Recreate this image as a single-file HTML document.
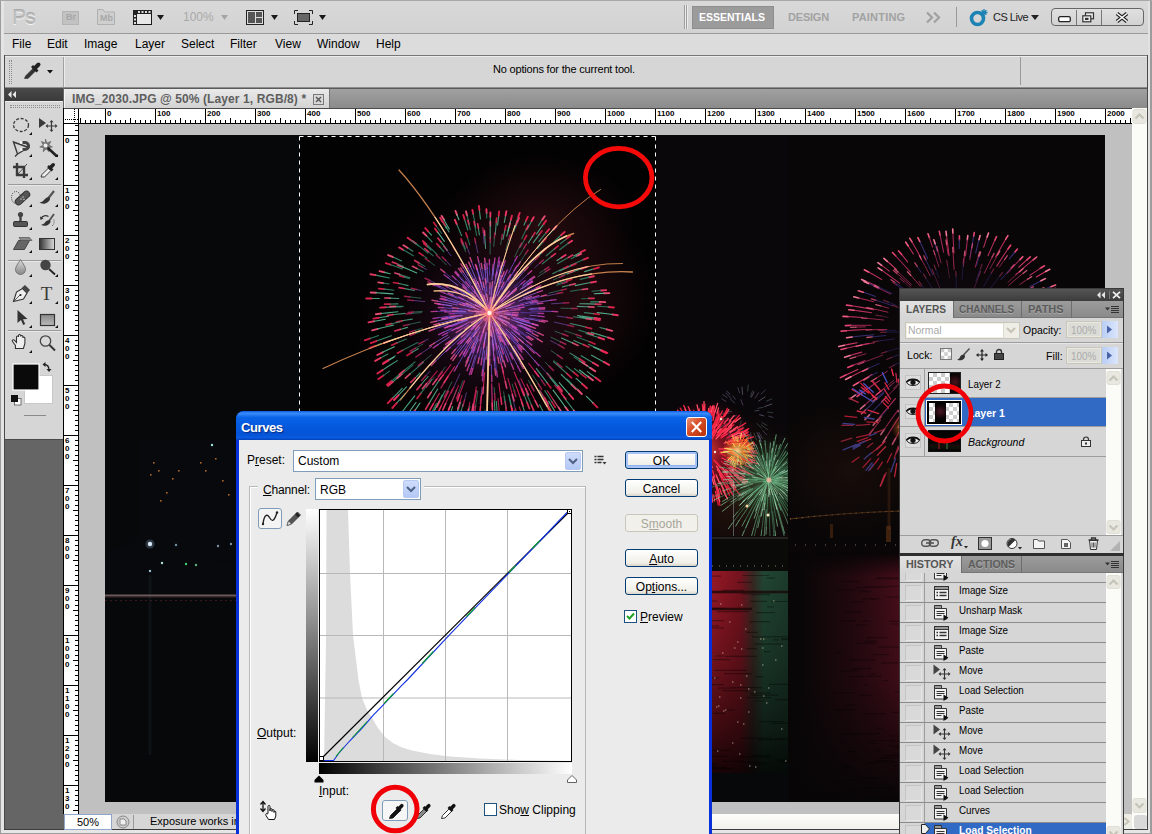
<!DOCTYPE html>
<html><head><meta charset="utf-8"><title>Photoshop</title><style>
*{box-sizing:border-box;margin:0;padding:0}
html,body{width:1152px;height:834px;overflow:hidden;background:#d6d6d6;font-family:"Liberation Sans",sans-serif;font-size:12px;color:#000}
.a{position:absolute}
.t{position:absolute;white-space:nowrap;line-height:1}
svg{position:absolute;overflow:visible}
</style></head><body>
<div id="root" style="position:relative;width:1152px;height:834px;overflow:hidden">
<div class="a" style="left:0px;top:0px;width:1152px;height:834px;background:#d6d6d6"></div>
<div class="a" style="left:0px;top:0px;width:1152px;height:33px;background:linear-gradient(#d9d9d9,#d2d2d2)"></div>
<div class="a" style="left:0px;top:33px;width:1152px;height:1px;background:#9a9a9a"></div>
<div class="a" style="left:0px;top:34px;width:1152px;height:21px;background:#dcdcdc"></div>
<div class="a" style="left:4px;top:55px;width:1144px;height:33px;background:#d6d6d6;border:1px solid #8c8c8c;border-top-color:#777;"></div>
<div class="a" style="left:5px;top:56px;width:1142px;height:1px;background:#ececec"></div>
<div class="a" style="left:4px;top:88px;width:1144px;height:20px;background:linear-gradient(#a2a2a2,#8b8b8b)"></div>
<div class="a" style="left:4px;top:88px;width:1144px;height:1px;background:#5a5a5a"></div>
<div class="a" style="left:4px;top:88px;width:60px;height:742px;background:#656565"></div>
<div class="a" style="left:5px;top:88px;width:58px;height:13px;background:linear-gradient(#4a4a4a,#3a3a3a)"></div>
<div class="a" style="left:5px;top:101px;width:58px;height:313px;background:#d6d6d6"></div>
<div class="a" style="left:5px;top:414px;width:58px;height:1px;background:#555"></div>
<div class="a" style="left:64px;top:108px;width:1068px;height:706px;background:#c0c0c0"></div>
<div class="a" style="left:64px;top:108px;width:1068px;height:16px;background:#fff;border-bottom:1px solid #000"></div>
<div class="a" style="left:63px;top:108px;width:16px;height:706px;background:#fff;border-right:1px solid #000;border-left:1px solid #000"></div>
<div class="a" style="left:1132px;top:108px;width:15px;height:706px;background:#fbfbf8"></div>
<div class="a" style="left:64px;top:814px;width:1084px;height:16px;background:#d6d6d6"></div>
<div class="a" style="left:0px;top:0px;width:4px;height:834px;background:#e4e4e4"></div>
<div class="a" style="left:0px;top:0px;width:1px;height:834px;background:#9c9c9c"></div>
<div class="a" style="left:4px;top:55px;width:1px;height:775px;background:#4a4a4a"></div>
<div class="a" style="left:1148px;top:0px;width:4px;height:834px;background:#e2e2e2"></div>
<div class="a" style="left:1150px;top:0px;width:2px;height:834px;background:#9c9c9c"></div>
<div class="a" style="left:1147px;top:55px;width:1px;height:775px;background:#4a4a4a"></div>
<div class="a" style="left:0px;top:830px;width:1152px;height:4px;background:#e6e6e6"></div>
<div class="a" style="left:0px;top:833px;width:1152px;height:1px;background:#9c9c9c"></div>
<div class="a" style="left:0px;top:830px;width:1px;height:4px;background:#9c9c9c"></div>
<div class="a" style="left:1150px;top:830px;width:2px;height:4px;background:#9c9c9c"></div>
<div class="a" style="left:4px;top:829px;width:1144px;height:1px;background:#3c3c3c"></div>
<div class="a" style="left:0px;top:0px;width:1152px;height:1px;background:#a8a8a8"></div>
<div class="t" style="left:12px;top:6px;font-size:21px;color:#bcbcbc;text-shadow:0 1px 0 #f4f4f4,0 -1px 0 #a9a9a9;letter-spacing:-0.8px">Ps</div>
<div class="a" style="left:62px;top:11px;width:17px;height:14px;background:#c2c2c2;border:1px solid #b4b4b4"></div>
<div class="t" style="left:66px;top:13px;font-size:9px;color:#a6a6a6;font-weight:bold">Br</div>
<svg style="left:97px;top:9px" width="19" height="16" viewBox="0 0 19 16" ><path d="M0.5 15.5V0.5H6l1.5 2.5H17.5V15.5Z" fill="#cfcfcf" stroke="#b0b0b0"/></svg>
<div class="t" style="left:100px;top:14px;font-size:9px;color:#a8a8a8;font-weight:bold">Mb</div>
<svg style="left:133px;top:10px" width="19" height="15" viewBox="0 0 19 15" ><rect x="0.5" y="0.5" width="18" height="14" fill="#e8e8e8" stroke="#1a1a1a"/><rect x="0" y="0" width="19" height="4" fill="#222"/><rect x="0" y="0" width="4" height="15" fill="#222"/><g fill="#ddd"><rect x="5" y="1" width="2" height="2"/><rect x="8.5" y="1" width="2" height="2"/><rect x="12" y="1" width="2" height="2"/><rect x="15.5" y="1" width="2" height="2"/><rect x="1" y="5" width="2" height="2"/><rect x="1" y="8.5" width="2" height="2"/><rect x="1" y="12" width="2" height="2"/></g></svg>
<svg style="left:157px;top:15px" width="7" height="5" viewBox="0 0 7 5" ><path d="M0 0H7L3.5 5Z" fill="#1a1a1a"/></svg>
<div class="t" style="left:183px;top:11px;font-size:12px;color:#a9a9a9">100%</div>
<svg style="left:221px;top:15px" width="7" height="5" viewBox="0 0 7 5" ><path d="M0 0H7L3.5 5Z" fill="#a5a5a5"/></svg>
<svg style="left:246px;top:10px" width="18" height="15" viewBox="0 0 18 15" ><rect x="0.5" y="0.5" width="17" height="14" fill="#ddd" stroke="#222"/><rect x="2" y="2" width="7" height="11" fill="#555"/><rect x="10" y="2" width="6" height="5" fill="#555"/><rect x="10" y="8" width="6" height="5" fill="#555"/></svg>
<svg style="left:271px;top:15px" width="7" height="5" viewBox="0 0 7 5" ><path d="M0 0H7L3.5 5Z" fill="#1a1a1a"/></svg>
<svg style="left:294px;top:10px" width="19" height="15" viewBox="0 0 19 15" ><path d="M0.5 4V0.5H4M15 0.5H18.5V4M18.5 11V14.5H15M4 14.5H0.5V11" fill="none" stroke="#222"/><rect x="3.5" y="3.5" width="12" height="8" fill="#666" stroke="#222"/></svg>
<svg style="left:319px;top:15px" width="7" height="5" viewBox="0 0 7 5" ><path d="M0 0H7L3.5 5Z" fill="#1a1a1a"/></svg>
<div class="a" style="left:684px;top:5px;width:1px;height:24px;background:#9e9e9e"></div>
<div class="a" style="left:686px;top:5px;width:1px;height:24px;background:#9e9e9e"></div>
<div class="a" style="left:685px;top:5px;width:1px;height:24px;background:#ececec"></div>
<div class="a" style="left:687px;top:5px;width:1px;height:24px;background:#ececec"></div>
<div class="a" style="left:692px;top:6px;width:82px;height:23px;background:#9b9b9b;border:1px solid #8e8e8e"></div>
<div class="t" style="left:699px;top:12px;font-size:10.5px;color:#fff;font-weight:bold;letter-spacing:0">ESSENTIALS</div>
<div class="t" style="left:788px;top:12px;font-size:11px;color:#a2a2a2;font-weight:bold;letter-spacing:-0.2px">DESIGN</div>
<div class="t" style="left:852px;top:12px;font-size:11px;color:#a2a2a2;font-weight:bold;letter-spacing:0.2px">PAINTING</div>
<svg style="left:926px;top:12px" width="16" height="11" viewBox="0 0 16 11" ><path d="M1 0.5L6 5.5L1 10.5M8 0.5L13 5.5L8 10.5" fill="none" stroke="#a0a0a0" stroke-width="2.2"/></svg>
<div class="a" style="left:956px;top:7px;width:1px;height:20px;background:#9a9a9a"></div>
<svg style="left:969px;top:8px" width="20" height="19" viewBox="0 0 20 19" ><circle cx="8.5" cy="10.5" r="6" fill="none" stroke="#1d82b4" stroke-width="3.6"/><path d="M15 1v7M11.5 4.5h7M12.6 2.2l4.8 4.6M17.4 2.2l-4.8 4.6" stroke="#1d82b4" stroke-width="1.3"/></svg>
<div class="t" style="left:993px;top:12px;font-size:11px;color:#222;letter-spacing:-0.5px">CS Live</div>
<svg style="left:1031px;top:15px" width="8" height="5" viewBox="0 0 8 5" ><path d="M0 0H8L4.0 5Z" fill="#222"/></svg>
<div class="a" style="left:1051px;top:8px;width:93px;height:18px;background:linear-gradient(#e0e0e0,#d2d2d2);border:1px solid #666;border-radius:4px"></div>
<div class="a" style="left:1076px;top:10px;width:1px;height:15px;background:#777"></div>
<div class="a" style="left:1101px;top:10px;width:1px;height:15px;background:#777"></div>
<svg style="left:1058px;top:16px" width="13" height="7" viewBox="0 0 13 7" ><rect x="0.7" y="0.7" width="11.6" height="5" rx="1.5" fill="#fff" stroke="#222" stroke-width="1.3"/></svg>
<svg style="left:1082px;top:12px" width="14" height="11" viewBox="0 0 14 11" ><rect x="3.5" y="0.8" width="8" height="6" fill="#eee" stroke="#333" stroke-width="1.2"/><rect x="0.8" y="3.8" width="8" height="6" fill="#eee" stroke="#333" stroke-width="1.2"/><rect x="3" y="5.8" width="3.5" height="2.2" fill="#333"/></svg>
<svg style="left:1115px;top:12px" width="14" height="11" viewBox="0 0 14 11" ><path d="M2 1.5L12 9.5M12 1.5L2 9.5" stroke="#222" stroke-width="3.8"/><path d="M2 1.5L12 9.5M12 1.5L2 9.5" stroke="#fff" stroke-width="1.6"/></svg>
<div class="t" style="left:12px;top:38px;font-size:12px;color:#000">File</div>
<div class="t" style="left:47px;top:38px;font-size:12px;color:#000">Edit</div>
<div class="t" style="left:84px;top:38px;font-size:12px;color:#000">Image</div>
<div class="t" style="left:135px;top:38px;font-size:12px;color:#000">Layer</div>
<div class="t" style="left:181px;top:38px;font-size:12px;color:#000">Select</div>
<div class="t" style="left:230px;top:38px;font-size:12px;color:#000">Filter</div>
<div class="t" style="left:275px;top:38px;font-size:12px;color:#000">View</div>
<div class="t" style="left:317px;top:38px;font-size:12px;color:#000">Window</div>
<div class="t" style="left:376px;top:38px;font-size:12px;color:#000">Help</div>
<div class="a" style="left:9px;top:60px;width:3px;height:24px;border-left:1px dotted #8e8e8e;border-right:1px dotted #8e8e8e"></div>
<div class="a" style="left:63px;top:57px;width:1px;height:30px;background:#a0a0a0"></div>
<div class="a" style="left:64px;top:57px;width:1px;height:30px;background:#ececec"></div>
<svg style="left:47px;top:70px" width="6" height="3.5" viewBox="0 0 6 3.5" ><path d="M0 0H6L3.0 3.5Z" fill="#111"/></svg>
<div class="t" style="left:493px;top:64px;font-size:11px;color:#000;letter-spacing:-0.19px">No options for the current tool.</div>
<div class="a" style="left:1020px;top:57px;width:1px;height:28px;background:#9a9a9a"></div>
<div class="a" style="left:64px;top:89px;width:266px;height:19px;background:linear-gradient(#eaeaea,#d3d3d3);border-left:1px solid #f4f4f4;border-right:1px solid #777"></div>
<div class="t" style="left:72px;top:93px;font-size:12px;color:#5e5e5e;font-weight:bold;letter-spacing:0.1px">IMG_2030.JPG @ 50% (Layer 1, RGB/8) *</div>
<svg style="left:313px;top:94px" width="11" height="11" viewBox="0 0 11 11" ><rect x="0.5" y="0.5" width="10" height="10" fill="#d8d8d8" stroke="#7a7a7a"/><path d="M3 3L8 8M8 3L3 8" stroke="#555" stroke-width="1.4"/></svg>
<svg style="left:0px;top:108px" width="1152" height="16" viewBox="0 0 1152 16" ><path d="M80.5 16v-6 M85.5 16v-4 M90.5 16v-4 M95.5 16v-4 M100.5 16v-4 M105.5 16v-15 M110.5 16v-4 M115.5 16v-4 M120.5 16v-4 M125.5 16v-4 M130.5 16v-6 M135.5 16v-4 M140.5 16v-4 M145.5 16v-4 M150.5 16v-4 M155.5 16v-15 M160.5 16v-4 M165.5 16v-4 M170.5 16v-4 M175.5 16v-4 M180.5 16v-6 M185.5 16v-4 M190.5 16v-4 M195.5 16v-4 M200.5 16v-4 M205.5 16v-15 M210.5 16v-4 M215.5 16v-4 M220.5 16v-4 M225.5 16v-4 M230.5 16v-6 M235.5 16v-4 M240.5 16v-4 M245.5 16v-4 M250.5 16v-4 M255.5 16v-15 M260.5 16v-4 M265.5 16v-4 M270.5 16v-4 M275.5 16v-4 M280.5 16v-6 M285.5 16v-4 M290.5 16v-4 M295.5 16v-4 M300.5 16v-4 M305.5 16v-15 M310.5 16v-4 M315.5 16v-4 M320.5 16v-4 M325.5 16v-4 M330.5 16v-6 M335.5 16v-4 M340.5 16v-4 M345.5 16v-4 M350.5 16v-4 M355.5 16v-15 M360.5 16v-4 M365.5 16v-4 M370.5 16v-4 M375.5 16v-4 M380.5 16v-6 M385.5 16v-4 M390.5 16v-4 M395.5 16v-4 M400.5 16v-4 M405.5 16v-15 M410.5 16v-4 M415.5 16v-4 M420.5 16v-4 M425.5 16v-4 M430.5 16v-6 M435.5 16v-4 M440.5 16v-4 M445.5 16v-4 M450.5 16v-4 M455.5 16v-15 M460.5 16v-4 M465.5 16v-4 M470.5 16v-4 M475.5 16v-4 M480.5 16v-6 M485.5 16v-4 M490.5 16v-4 M495.5 16v-4 M500.5 16v-4 M505.5 16v-15 M510.5 16v-4 M515.5 16v-4 M520.5 16v-4 M525.5 16v-4 M530.5 16v-6 M535.5 16v-4 M540.5 16v-4 M545.5 16v-4 M550.5 16v-4 M555.5 16v-15 M560.5 16v-4 M565.5 16v-4 M570.5 16v-4 M575.5 16v-4 M580.5 16v-6 M585.5 16v-4 M590.5 16v-4 M595.5 16v-4 M600.5 16v-4 M605.5 16v-15 M610.5 16v-4 M615.5 16v-4 M620.5 16v-4 M625.5 16v-4 M630.5 16v-6 M635.5 16v-4 M640.5 16v-4 M645.5 16v-4 M650.5 16v-4 M655.5 16v-15 M660.5 16v-4 M665.5 16v-4 M670.5 16v-4 M675.5 16v-4 M680.5 16v-6 M685.5 16v-4 M690.5 16v-4 M695.5 16v-4 M700.5 16v-4 M705.5 16v-15 M710.5 16v-4 M715.5 16v-4 M720.5 16v-4 M725.5 16v-4 M730.5 16v-6 M735.5 16v-4 M740.5 16v-4 M745.5 16v-4 M750.5 16v-4 M755.5 16v-15 M760.5 16v-4 M765.5 16v-4 M770.5 16v-4 M775.5 16v-4 M780.5 16v-6 M785.5 16v-4 M790.5 16v-4 M795.5 16v-4 M800.5 16v-4 M805.5 16v-15 M810.5 16v-4 M815.5 16v-4 M820.5 16v-4 M825.5 16v-4 M830.5 16v-6 M835.5 16v-4 M840.5 16v-4 M845.5 16v-4 M850.5 16v-4 M855.5 16v-15 M860.5 16v-4 M865.5 16v-4 M870.5 16v-4 M875.5 16v-4 M880.5 16v-6 M885.5 16v-4 M890.5 16v-4 M895.5 16v-4 M900.5 16v-4 M905.5 16v-15 M910.5 16v-4 M915.5 16v-4 M920.5 16v-4 M925.5 16v-4 M930.5 16v-6 M935.5 16v-4 M940.5 16v-4 M945.5 16v-4 M950.5 16v-4 M955.5 16v-15 M960.5 16v-4 M965.5 16v-4 M970.5 16v-4 M975.5 16v-4 M980.5 16v-6 M985.5 16v-4 M990.5 16v-4 M995.5 16v-4 M1000.5 16v-4 M1005.5 16v-15 M1010.5 16v-4 M1015.5 16v-4 M1020.5 16v-4 M1025.5 16v-4 M1030.5 16v-6 M1035.5 16v-4 M1040.5 16v-4 M1045.5 16v-4 M1050.5 16v-4 M1055.5 16v-15 M1060.5 16v-4 M1065.5 16v-4 M1070.5 16v-4 M1075.5 16v-4 M1080.5 16v-6 M1085.5 16v-4 M1090.5 16v-4 M1095.5 16v-4 M1100.5 16v-4 M1105.5 16v-15 M1110.5 16v-4 M1115.5 16v-4 M1120.5 16v-4 M1125.5 16v-4 M1130.5 16v-6" stroke="#000" stroke-width="1" fill="none"/></svg>
<div class="t" style="left:107px;top:109.5px;font-size:8px;color:#000;font-weight:bold">0</div>
<div class="t" style="left:157px;top:109.5px;font-size:8px;color:#000;font-weight:bold">100</div>
<div class="t" style="left:207px;top:109.5px;font-size:8px;color:#000;font-weight:bold">200</div>
<div class="t" style="left:257px;top:109.5px;font-size:8px;color:#000;font-weight:bold">300</div>
<div class="t" style="left:307px;top:109.5px;font-size:8px;color:#000;font-weight:bold">400</div>
<div class="t" style="left:357px;top:109.5px;font-size:8px;color:#000;font-weight:bold">500</div>
<div class="t" style="left:407px;top:109.5px;font-size:8px;color:#000;font-weight:bold">600</div>
<div class="t" style="left:457px;top:109.5px;font-size:8px;color:#000;font-weight:bold">700</div>
<div class="t" style="left:507px;top:109.5px;font-size:8px;color:#000;font-weight:bold">800</div>
<div class="t" style="left:557px;top:109.5px;font-size:8px;color:#000;font-weight:bold">900</div>
<div class="t" style="left:607px;top:109.5px;font-size:8px;color:#000;font-weight:bold">1000</div>
<div class="t" style="left:657px;top:109.5px;font-size:8px;color:#000;font-weight:bold">1100</div>
<div class="t" style="left:707px;top:109.5px;font-size:8px;color:#000;font-weight:bold">1200</div>
<div class="t" style="left:757px;top:109.5px;font-size:8px;color:#000;font-weight:bold">1300</div>
<div class="t" style="left:807px;top:109.5px;font-size:8px;color:#000;font-weight:bold">1400</div>
<div class="t" style="left:857px;top:109.5px;font-size:8px;color:#000;font-weight:bold">1500</div>
<div class="t" style="left:907px;top:109.5px;font-size:8px;color:#000;font-weight:bold">1600</div>
<div class="t" style="left:957px;top:109.5px;font-size:8px;color:#000;font-weight:bold">1700</div>
<div class="t" style="left:1007px;top:109.5px;font-size:8px;color:#000;font-weight:bold">1800</div>
<div class="t" style="left:1057px;top:109.5px;font-size:8px;color:#000;font-weight:bold">1900</div>
<div class="t" style="left:1107px;top:109.5px;font-size:8px;color:#000;font-weight:bold">2000</div>
<svg style="left:0px;top:0px" width="80" height="834" viewBox="0 0 80 834" ><path d="M79 125.5h-4 M79 130.5h-4 M79 135.5h-15 M79 140.5h-4 M79 145.5h-4 M79 150.5h-4 M79 155.5h-4 M79 160.5h-6 M79 165.5h-4 M79 170.5h-4 M79 175.5h-4 M79 180.5h-4 M79 185.5h-15 M79 190.5h-4 M79 195.5h-4 M79 200.5h-4 M79 205.5h-4 M79 210.5h-6 M79 215.5h-4 M79 220.5h-4 M79 225.5h-4 M79 230.5h-4 M79 235.5h-15 M79 240.5h-4 M79 245.5h-4 M79 250.5h-4 M79 255.5h-4 M79 260.5h-6 M79 265.5h-4 M79 270.5h-4 M79 275.5h-4 M79 280.5h-4 M79 285.5h-15 M79 290.5h-4 M79 295.5h-4 M79 300.5h-4 M79 305.5h-4 M79 310.5h-6 M79 315.5h-4 M79 320.5h-4 M79 325.5h-4 M79 330.5h-4 M79 335.5h-15 M79 340.5h-4 M79 345.5h-4 M79 350.5h-4 M79 355.5h-4 M79 360.5h-6 M79 365.5h-4 M79 370.5h-4 M79 375.5h-4 M79 380.5h-4 M79 385.5h-15 M79 390.5h-4 M79 395.5h-4 M79 400.5h-4 M79 405.5h-4 M79 410.5h-6 M79 415.5h-4 M79 420.5h-4 M79 425.5h-4 M79 430.5h-4 M79 435.5h-15 M79 440.5h-4 M79 445.5h-4 M79 450.5h-4 M79 455.5h-4 M79 460.5h-6 M79 465.5h-4 M79 470.5h-4 M79 475.5h-4 M79 480.5h-4 M79 485.5h-15 M79 490.5h-4 M79 495.5h-4 M79 500.5h-4 M79 505.5h-4 M79 510.5h-6 M79 515.5h-4 M79 520.5h-4 M79 525.5h-4 M79 530.5h-4 M79 535.5h-15 M79 540.5h-4 M79 545.5h-4 M79 550.5h-4 M79 555.5h-4 M79 560.5h-6 M79 565.5h-4 M79 570.5h-4 M79 575.5h-4 M79 580.5h-4 M79 585.5h-15 M79 590.5h-4 M79 595.5h-4 M79 600.5h-4 M79 605.5h-4 M79 610.5h-6 M79 615.5h-4 M79 620.5h-4 M79 625.5h-4 M79 630.5h-4 M79 635.5h-15 M79 640.5h-4 M79 645.5h-4 M79 650.5h-4 M79 655.5h-4 M79 660.5h-6 M79 665.5h-4 M79 670.5h-4 M79 675.5h-4 M79 680.5h-4 M79 685.5h-15 M79 690.5h-4 M79 695.5h-4 M79 700.5h-4 M79 705.5h-4 M79 710.5h-6 M79 715.5h-4 M79 720.5h-4 M79 725.5h-4 M79 730.5h-4 M79 735.5h-15 M79 740.5h-4 M79 745.5h-4 M79 750.5h-4 M79 755.5h-4 M79 760.5h-6 M79 765.5h-4 M79 770.5h-4 M79 775.5h-4 M79 780.5h-4 M79 785.5h-15 M79 790.5h-4 M79 795.5h-4 M79 800.5h-4 M79 805.5h-4 M79 810.5h-6" stroke="#000" stroke-width="1" fill="none"/></svg>
<div class="t" style="left:65px;top:136.5px;font-size:8px;color:#000;font-weight:bold">0</div>
<div class="t" style="left:65px;top:186.5px;font-size:8px;color:#000;font-weight:bold">1</div>
<div class="t" style="left:65px;top:194.5px;font-size:8px;color:#000;font-weight:bold">0</div>
<div class="t" style="left:65px;top:202.5px;font-size:8px;color:#000;font-weight:bold">0</div>
<div class="t" style="left:65px;top:236.5px;font-size:8px;color:#000;font-weight:bold">2</div>
<div class="t" style="left:65px;top:244.5px;font-size:8px;color:#000;font-weight:bold">0</div>
<div class="t" style="left:65px;top:252.5px;font-size:8px;color:#000;font-weight:bold">0</div>
<div class="t" style="left:65px;top:286.5px;font-size:8px;color:#000;font-weight:bold">3</div>
<div class="t" style="left:65px;top:294.5px;font-size:8px;color:#000;font-weight:bold">0</div>
<div class="t" style="left:65px;top:302.5px;font-size:8px;color:#000;font-weight:bold">0</div>
<div class="t" style="left:65px;top:336.5px;font-size:8px;color:#000;font-weight:bold">4</div>
<div class="t" style="left:65px;top:344.5px;font-size:8px;color:#000;font-weight:bold">0</div>
<div class="t" style="left:65px;top:352.5px;font-size:8px;color:#000;font-weight:bold">0</div>
<div class="t" style="left:65px;top:386.5px;font-size:8px;color:#000;font-weight:bold">5</div>
<div class="t" style="left:65px;top:394.5px;font-size:8px;color:#000;font-weight:bold">0</div>
<div class="t" style="left:65px;top:402.5px;font-size:8px;color:#000;font-weight:bold">0</div>
<div class="t" style="left:65px;top:436.5px;font-size:8px;color:#000;font-weight:bold">6</div>
<div class="t" style="left:65px;top:444.5px;font-size:8px;color:#000;font-weight:bold">0</div>
<div class="t" style="left:65px;top:452.5px;font-size:8px;color:#000;font-weight:bold">0</div>
<div class="t" style="left:65px;top:486.5px;font-size:8px;color:#000;font-weight:bold">7</div>
<div class="t" style="left:65px;top:494.5px;font-size:8px;color:#000;font-weight:bold">0</div>
<div class="t" style="left:65px;top:502.5px;font-size:8px;color:#000;font-weight:bold">0</div>
<div class="t" style="left:65px;top:536.5px;font-size:8px;color:#000;font-weight:bold">8</div>
<div class="t" style="left:65px;top:544.5px;font-size:8px;color:#000;font-weight:bold">0</div>
<div class="t" style="left:65px;top:552.5px;font-size:8px;color:#000;font-weight:bold">0</div>
<div class="t" style="left:65px;top:586.5px;font-size:8px;color:#000;font-weight:bold">9</div>
<div class="t" style="left:65px;top:594.5px;font-size:8px;color:#000;font-weight:bold">0</div>
<div class="t" style="left:65px;top:602.5px;font-size:8px;color:#000;font-weight:bold">0</div>
<div class="t" style="left:65px;top:636.5px;font-size:8px;color:#000;font-weight:bold">1</div>
<div class="t" style="left:65px;top:644.5px;font-size:8px;color:#000;font-weight:bold">0</div>
<div class="t" style="left:65px;top:652.5px;font-size:8px;color:#000;font-weight:bold">0</div>
<div class="t" style="left:65px;top:660.5px;font-size:8px;color:#000;font-weight:bold">0</div>
<div class="t" style="left:65px;top:686.5px;font-size:8px;color:#000;font-weight:bold">1</div>
<div class="t" style="left:65px;top:694.5px;font-size:8px;color:#000;font-weight:bold">1</div>
<div class="t" style="left:65px;top:702.5px;font-size:8px;color:#000;font-weight:bold">0</div>
<div class="t" style="left:65px;top:710.5px;font-size:8px;color:#000;font-weight:bold">0</div>
<div class="t" style="left:65px;top:736.5px;font-size:8px;color:#000;font-weight:bold">1</div>
<div class="t" style="left:65px;top:744.5px;font-size:8px;color:#000;font-weight:bold">2</div>
<div class="t" style="left:65px;top:752.5px;font-size:8px;color:#000;font-weight:bold">0</div>
<div class="t" style="left:65px;top:760.5px;font-size:8px;color:#000;font-weight:bold">0</div>
<div class="t" style="left:65px;top:786.5px;font-size:8px;color:#000;font-weight:bold">1</div>
<div class="t" style="left:65px;top:794.5px;font-size:8px;color:#000;font-weight:bold">3</div>
<div class="t" style="left:65px;top:802.5px;font-size:8px;color:#000;font-weight:bold">0</div>
<div class="a" style="left:64px;top:108px;width:1068px;height:1px;background:#4a4a4a"></div>
<div class="a" style="left:64px;top:109px;width:15px;height:15px;background:#fff;border-right:1px solid #000;border-bottom:1px solid #000"></div>
<svg style="left:64px;top:108px" width="16" height="16" viewBox="0 0 16 16" ><path d="M10.5 1v14M1 11.5h13" stroke="#000" stroke-dasharray="1 1" fill="none"/></svg>
<div class="a" style="left:64px;top:814px;width:48px;height:16px;background:#fff;border:1px solid #8fa6c8"></div>
<div class="t" style="left:77px;top:817px;font-size:11px;color:#000">50%</div>
<svg style="left:116px;top:815px" width="14" height="14" viewBox="0 0 14 14" ><circle cx="7" cy="7" r="6" fill="#ccc" stroke="#888"/><path d="M4 4h4l2 2v4H4z" fill="#eee" stroke="#777" stroke-width="0.8"/></svg>
<div class="a" style="left:133px;top:815px;width:1px;height:14px;background:#9a9a9a"></div>
<div class="t" style="left:150px;top:816px;font-size:11px;color:#000">Exposure works in</div>
<div class="a" style="left:712px;top:814px;width:188px;height:15px;background:linear-gradient(#fdfdfb,#f1f0ea)"></div>
<svg style="left:1132px;top:109px" width="15" height="15" viewBox="0 0 15 15" ><rect x="1" y="0.5" width="13" height="14" rx="2" fill="#e9e8e0" stroke="#e0dfd6"/><path d="M3.5 9.5L7.5 5.5L11.5 9.5" fill="none" stroke="#c5c4b8" stroke-width="2.2"/></svg>
<svg style="left:1132px;top:798px" width="15" height="15" viewBox="0 0 15 15" ><rect x="1" y="0.5" width="13" height="14" rx="2" fill="#e9e8e0" stroke="#e0dfd6"/><path d="M3.5 5.5L7.5 9.5L11.5 5.5" fill="none" stroke="#c5c4b8" stroke-width="2.2"/></svg>
<div class="a" style="left:1124px;top:814px;width:8px;height:15px;background:#eeede5;border-radius:0 2px 2px 0"></div>
<svg style="left:1124px;top:817px" width="6" height="9" viewBox="0 0 6 9" ><path d="M0.500 1L4.500 4.500L0.500 8" fill="none" stroke="#c5c4b8" stroke-width="2"/></svg>
<div class="a" style="left:1132px;top:814px;width:15px;height:15px;background:#fbfbf8"></div>
<div class="a" style="left:1134px;top:815px;width:13px;height:14px;background:#d8d8d8;border-radius:3px"></div>
<svg style="left:0px;top:0px" width="1152" height="834" viewBox="0 0 1152 834" ><defs><clipPath id="cImg"><rect x="105" y="135" width="1000" height="667"/></clipPath><clipPath id="cL1"><rect x="299" y="135" width="357" height="667"/></clipPath><clipPath id="cL2"><rect x="656" y="135" width="132" height="638"/></clipPath><clipPath id="cBG"><rect x="788" y="135" width="317" height="667"/></clipPath><radialGradient id="gGlow"><stop offset="0" stop-color="#903058" stop-opacity=".5"/><stop offset=".4" stop-color="#4a1838" stop-opacity=".26"/><stop offset=".75" stop-color="#2a0c14" stop-opacity=".1"/><stop offset="1" stop-color="#200810" stop-opacity="0"/></radialGradient><radialGradient id="gSmoke"><stop offset="0" stop-color="#401418" stop-opacity=".6"/><stop offset=".6" stop-color="#2a0c10" stop-opacity=".35"/><stop offset="1" stop-color="#200808" stop-opacity="0"/></radialGradient><radialGradient id="gRed"><stop offset="0" stop-color="#ff5030" stop-opacity=".9"/><stop offset=".35" stop-color="#e01838" stop-opacity=".55"/><stop offset="1" stop-color="#700818" stop-opacity="0"/></radialGradient><radialGradient id="gGreen"><stop offset="0" stop-color="#8adf9a" stop-opacity=".6"/><stop offset=".5" stop-color="#3f9a58" stop-opacity=".35"/><stop offset="1" stop-color="#143a20" stop-opacity="0"/></radialGradient><radialGradient id="gOr"><stop offset="0" stop-color="#fff0a0"/><stop offset=".4" stop-color="#ff9a30" stop-opacity=".8"/><stop offset="1" stop-color="#ff4020" stop-opacity="0"/></radialGradient><linearGradient id="gWr" x2="0" y2="1"><stop offset="0" stop-color="#9a1824"/><stop offset=".5" stop-color="#6a1018"/><stop offset="1" stop-color="#2a060a"/></linearGradient><linearGradient id="gWg" x2="0" y2="1"><stop offset="0" stop-color="#2f5a40"/><stop offset=".5" stop-color="#1e3a2a"/><stop offset="1" stop-color="#0a140e"/></linearGradient><linearGradient id="gWh" gradientUnits="userSpaceOnUse" x1="712" x2="788"><stop offset="0" stop-color="#a01a28"/><stop offset=".38" stop-color="#7a1420"/><stop offset=".54" stop-color="#3a2a24"/><stop offset=".68" stop-color="#234a36"/><stop offset="1" stop-color="#1e3e2e"/></linearGradient><linearGradient id="gWv" x2="0" y2="1"><stop offset="0" stop-color="#000" stop-opacity=".05"/><stop offset=".45" stop-color="#000" stop-opacity=".3"/><stop offset=".8" stop-color="#000" stop-opacity=".62"/><stop offset="1" stop-color="#000" stop-opacity=".85"/></linearGradient><linearGradient id="gWfade"><stop offset="0" stop-color="#6a1018" stop-opacity="1"/><stop offset="1" stop-color="#6a1018" stop-opacity="0"/></linearGradient><radialGradient id="gRR"><stop offset="0" stop-color="#5a0e1c" stop-opacity=".85"/><stop offset="1" stop-color="#200408" stop-opacity="0"/></radialGradient><radialGradient id="gBr"><stop offset="0" stop-color="#2c160e" stop-opacity=".9"/><stop offset=".6" stop-color="#1c0e0a" stop-opacity=".6"/><stop offset="1" stop-color="#100808" stop-opacity="0"/></radialGradient><radialGradient id="gBall"><stop offset="0" stop-color="#c04880" stop-opacity=".55"/><stop offset=".5" stop-color="#6a3aa0" stop-opacity=".4"/><stop offset="1" stop-color="#3a1a60" stop-opacity="0"/></radialGradient><linearGradient id="gRH" gradientUnits="userSpaceOnUse" x1="800" x2="960"><stop offset="0" stop-color="#50101c" stop-opacity="0"/><stop offset=".3" stop-color="#4a0e1a" stop-opacity=".45"/><stop offset=".62" stop-color="#5a1020" stop-opacity=".95"/><stop offset="1" stop-color="#5a1020" stop-opacity=".9"/></linearGradient><linearGradient id="gRV" gradientUnits="userSpaceOnUse" x1="0" x2="0" y1="552" y2="802"><stop offset="0" stop-color="#070506" stop-opacity="1"/><stop offset=".1" stop-color="#070506" stop-opacity=".2"/><stop offset=".5" stop-color="#070506" stop-opacity=".3"/><stop offset=".85" stop-color="#070506" stop-opacity=".8"/><stop offset="1" stop-color="#070506" stop-opacity="1"/></linearGradient><linearGradient id="gGold" gradientUnits="userSpaceOnUse" x1="489" y1="313" x2="600" y2="200"><stop offset="0" stop-color="#ffd0a0"/><stop offset="1" stop-color="#ff9040"/></linearGradient></defs><rect x="105" y="135" width="1000" height="667" fill="#06080a"/><rect x="299" y="135" width="357" height="667" fill="#030203"/><rect x="656" y="135" width="132" height="638" fill="#09070a"/><rect x="788" y="135" width="317" height="667" fill="#080607"/><g clip-path="url(#cL1)"><ellipse cx="540" cy="225" rx="95" ry="70" fill="url(#gSmoke)"/><ellipse cx="585" cy="300" rx="70" ry="90" fill="url(#gSmoke)" opacity=".8"/><circle cx="489" cy="322" r="135" fill="url(#gGlow)"/><path d="M599.8 327.5L605.3 328.9L606.7 329.3M586.1 333.4L594.6 336.2L598.6 337.5M588.6 344.4L597.5 348.3L601.9 350.3M581.1 355.7L589.2 360.4L592.9 362.7M563.9 397.5L570.6 406.2L573.9 410.5M545.8 401.3L552.0 412.2L555.3 418.2M514.7 410.3L517.3 421.2L518.6 426.7M510.5 435.9L511.5 442.5L511.7 444.2M504.2 434.6L505.0 441.5L505.2 443.6M500.4 427.7L501.1 436.6L501.5 440.3M475.4 420.4L474.0 431.9L473.3 437.7M438.8 402.1L432.7 414.1L429.3 420.8M387.9 354.1L382.3 357.1L380.5 358.0M381.4 343.3L376.2 345.4L375.0 345.9M391.3 335.8L381.4 339.2L376.3 341.1M389.5 278.0L380.3 276.1L375.5 275.1M401.6 260.9L395.3 258.1L392.6 256.9M412.9 251.2L408.7 248.5L407.5 247.7M432.1 241.8L428.0 237.4L426.3 235.7M461.6 235.7L458.3 227.9L456.6 223.8M467.8 229.9L465.6 222.6L464.5 219.0M514.3 228.7L516.9 220.9L518.3 216.9M527.4 229.1L530.3 223.5L531.6 221.0M538.3 225.7L541.2 221.4L542.3 219.8M538.9 241.7L543.8 235.5L546.3 232.5M554.0 241.6L559.0 237.0L561.2 235.0M590.7 301.9L597.3 301.9L599.8 301.9" stroke="#3f9a78" stroke-width="1.1" stroke-linecap="round" fill="none" opacity="0.9"/><path d="M606.7 329.3L612.2 330.8M590.2 367.9L595.3 371.3M588.0 376.5L592.9 380.3M577.4 389.5L581.8 394.0M573.9 410.5L577.8 415.8M565.3 407.0L569.1 412.3M556.0 413.2L559.3 418.9M490.3 441.6L490.3 448.5M462.2 433.2L460.8 439.9M453.0 442.1L451.3 448.7M377.7 328.9L372.2 330.4M381.4 313.5L375.9 314.2M376.0 292.7L370.7 292.5M383.4 283.1L378.3 282.4M384.5 272.3L379.6 271.1M402.6 266.9L398.0 265.1M392.6 256.9L388.2 255.1M407.5 247.7L403.5 245.3M426.3 235.7L423.1 232.5M443.9 219.6L441.7 215.9M457.0 214.9L455.5 211.0M467.1 215.6L466.0 211.5M542.3 219.8L544.7 216.3M553.5 229.5L556.5 226.2M576.7 255.9L581.0 253.8M604.0 293.3L609.3 293.1M599.8 301.9L605.2 302.1" stroke="#ff5580" stroke-width="1.9" stroke-linecap="round" fill="none" opacity="0.9"/><path d="M591.1 332.3L602.0 335.6L608.0 337.5M591.5 355.2L599.8 359.7L603.8 361.9M587.3 371.6L593.2 376.0L595.4 377.6M548.7 401.2L553.7 409.4L556.0 413.2M544.8 414.3L549.3 423.5L551.4 427.9M538.7 424.0L541.4 430.9L542.3 433.2M532.2 420.6L535.0 428.4L536.0 431.3M490.2 425.2L490.2 436.2L490.3 441.6M481.8 422.9L481.2 431.4L481.0 434.8M470.0 415.3L468.3 425.3L467.5 430.0M456.1 429.9L453.9 438.5L453.0 442.1M458.4 407.4L455.0 418.8L453.3 424.7M452.7 406.6L448.8 417.6L446.8 423.4M414.7 395.9L406.6 406.1L402.2 411.9M405.6 393.1L399.4 400.1L396.6 403.2M406.5 386.8L400.7 392.8L398.4 395.3M402.2 388.4L395.4 395.3L392.3 398.5M400.0 375.8L394.6 380.4L392.8 381.9M397.3 360.6L387.6 366.7L382.5 370.1M393.4 325.1L383.1 327.5L377.7 328.9M388.7 316.3L381.6 317.3L378.9 317.7M398.0 311.8L387.2 312.9L381.4 313.5M379.3 298.5L373.5 298.5L371.6 298.5M390.2 273.8L385.6 272.6L384.5 272.3M431.5 235.2L428.8 232.1L428.1 231.4M446.4 228.1L443.5 223.3L442.4 221.5M480.4 218.9L479.7 212.7L479.4 210.0M490.2 224.1L490.3 218.7L490.3 216.6M497.6 225.3L498.3 218.7L498.7 215.7M504.3 222.5L505.3 217.2L505.6 215.3M524.0 225.1L525.6 221.4L526.0 220.6M536.6 234.0L541.2 227.4L543.6 224.1M573.7 255.9L578.8 253.2L580.8 252.2M584.6 271.6L591.3 269.6L594.1 268.8M575.2 285.6L585.4 283.5L591.1 282.5M577.5 315.6L588.7 317.1L594.8 318.0" stroke="#4fb08a" stroke-width="1.1" stroke-linecap="round" fill="none" opacity="0.9"/><path d="M608.0 337.5L613.5 339.4M598.6 337.5L604.1 339.4M603.8 361.9L609.1 364.9M592.9 362.7L598.1 365.8M569.1 394.0L573.2 398.9M505.2 443.6L505.9 450.4M501.5 440.3L502.0 447.1M481.0 434.8L480.6 441.5M467.5 430.0L466.3 436.6M416.6 423.1L413.3 428.8M398.4 395.3L394.0 400.0M392.8 381.9L388.1 385.9M380.5 358.0L375.2 360.9M382.6 352.3L377.3 355.0M374.0 321.3L368.5 322.4M375.5 275.1L370.5 274.3M403.3 249.8L399.2 247.5M416.1 243.7L412.4 240.9M456.6 223.8L454.9 219.8M486.6 213.3L486.4 209.1M490.3 216.6L490.4 212.4M505.6 215.3L506.4 211.1M517.5 222.0L519.0 218.0M531.6 221.0L533.7 217.2M568.3 243.3L572.1 240.7M561.6 257.5L565.6 255.0M581.2 268.8L585.9 267.2M589.0 277.3L593.9 276.2M591.1 282.5L596.1 281.6M600.9 290.5L606.1 290.1M612.4 314.5L617.8 315.3M594.8 318.0L600.3 318.9" stroke="#ff3a6a" stroke-width="1.9" stroke-linecap="round" fill="none" opacity="0.9"/><path d="M601.9 350.3L607.3 352.8M592.9 402.8L597.4 407.4M551.4 427.9L554.3 434.0M536.0 431.3L538.3 437.7M518.6 426.7L520.1 433.3M513.4 435.9L514.6 442.6M484.1 433.6L483.8 440.3M441.1 427.4L438.7 433.7M436.4 427.3L433.8 433.5M409.2 412.0L405.4 417.4M396.6 403.2L392.3 408.0M392.3 398.5L387.8 403.2M391.8 380.8L387.0 384.8M383.4 375.5L378.4 379.1M375.0 345.9L369.6 348.1M376.3 341.1L370.8 343.1M370.2 338.4L364.8 340.3M378.9 317.7L373.4 318.6M384.1 289.1L378.9 288.6M390.5 264.7L385.8 263.2M428.1 231.4L425.2 228.1M437.6 232.2L435.0 228.6M464.5 219.0L463.3 214.9M498.7 215.7L499.1 211.5M526.0 220.6L527.8 216.7M543.6 224.1L546.1 220.6M566.5 238.8L570.1 236.1M594.1 268.8L598.9 267.5" stroke="#e8204c" stroke-width="1.9" stroke-linecap="round" fill="none" opacity="0.9"/><path d="M593.7 347.2L599.4 349.8L601.1 350.6M579.2 360.7L586.8 365.6L590.2 367.9M579.5 370.0L585.6 374.7L588.0 376.5M576.1 378.4L580.9 382.7L582.3 384.0M586.5 396.3L591.3 401.2L592.9 402.8M559.2 382.7L565.9 390.3L569.1 394.0M553.1 390.1L561.0 400.9L565.3 407.0M536.3 414.1L539.7 422.2L541.1 425.6M510.2 417.5L512.3 429.5L513.4 435.9M484.4 424.6L484.2 431.5L484.1 433.6M420.0 403.0L416.2 408.6L415.0 410.3M416.0 402.5L411.1 409.3L409.2 412.0M394.0 357.3L389.2 360.1L388.2 360.8M394.4 346.7L386.3 350.5L382.6 352.3M385.4 319.3L377.5 320.7L374.0 321.3M401.9 306.7L391.3 307.0L385.6 307.3M393.1 293.9L382.1 293.1L376.0 292.7M416.8 272.9L407.6 268.9L402.6 266.9M444.4 241.4L439.9 235.2L437.6 232.2M449.2 229.0L445.6 222.7L443.9 219.6M458.9 219.8L457.4 215.9L457.0 214.9M507.9 231.1L509.9 223.6L510.8 219.9M557.0 260.5L560.7 258.1L561.6 257.5M567.2 274.0L576.3 270.6L581.2 268.8M594.2 293.8L601.2 293.4L604.0 293.3M597.1 312.6L607.1 313.8L612.4 314.5M579.5 317.0L589.3 318.4L594.3 319.2" stroke="#5cc09a" stroke-width="1.1" stroke-linecap="round" fill="none" opacity="0.9"/><path d="M601.1 350.6L606.5 353.1M595.4 377.6L600.3 381.3M582.3 384.0L587.0 388.2M564.2 416.6L567.7 422.1M555.3 418.2L558.5 424.0M541.1 425.6L543.6 431.8M542.3 433.2L544.7 439.5M526.1 429.6L527.9 436.1M511.7 444.2L512.8 451.0M473.3 437.7L472.5 444.5M453.3 424.7L451.4 431.2M446.8 423.4L444.6 429.7M429.3 420.8L426.4 426.8M430.0 415.9L426.9 421.7M415.0 410.3L411.4 415.7M402.2 411.9L398.2 417.1M382.5 370.1L377.4 373.5M388.2 360.8L383.0 363.9M385.6 307.3L380.2 307.6M371.6 298.5L366.3 298.5M411.3 240.4L407.6 237.7M426.3 244.2L422.9 241.1M442.4 221.5L440.2 217.8M473.2 214.1L472.4 210.0M479.4 210.0L478.9 205.9M510.8 219.9L511.9 215.7M518.3 216.9L519.7 212.9M546.3 232.5L549.2 229.1M561.2 235.0L564.6 232.0M580.8 252.2L585.0 250.1M583.4 259.6L587.9 257.8M608.5 307.0L613.9 307.5M594.3 319.2L599.8 320.2" stroke="#f02a58" stroke-width="1.9" stroke-linecap="round" fill="none" opacity="0.9"/><path d="M567.0 379.1L574.1 386.1L577.4 389.5M553.1 399.4L560.2 410.4L564.2 416.6M521.7 414.2L524.7 424.5L526.1 429.6M463.9 424.8L462.5 431.4L462.2 433.2M443.8 420.2L441.6 426.0L441.1 427.4M443.1 411.5L438.6 422.0L436.4 427.3M436.4 403.6L431.9 412.1L430.0 415.9M420.3 416.8L417.3 422.0L416.6 423.1M403.1 371.5L395.4 377.8L391.8 380.8M389.5 371.1L384.7 374.6L383.4 375.5M378.6 335.6L372.3 337.7L370.2 338.4M393.9 290.3L387.0 289.4L384.1 289.1M389.1 284.0L384.4 283.3L383.4 283.1M402.4 269.0L394.4 266.1L390.5 264.7M413.4 255.8L406.6 251.7L403.3 249.8M418.7 246.0L413.5 242.1L411.3 240.4M427.8 253.1L420.3 246.9L416.1 243.7M437.0 254.3L430.1 247.7L426.3 244.2M469.1 223.4L467.7 217.8L467.1 215.6M475.7 227.7L474.1 218.9L473.2 214.1M486.7 218.0L486.6 214.1L486.6 213.3M515.8 226.9L517.2 223.0L517.5 222.0M549.3 234.1L552.5 230.6L553.5 229.5M560.2 243.8L564.8 240.2L566.5 238.8M559.7 249.7L565.5 245.3L568.3 243.3M571.2 258.8L575.5 256.5L576.7 255.9M569.9 265.6L578.7 261.7L583.4 259.6M580.2 279.4L586.5 277.9L589.0 277.3M591.9 291.3L598.4 290.7L600.9 290.5M597.5 306.3L605.2 306.8L608.5 307.0" stroke="#2f8468" stroke-width="1.1" stroke-linecap="round" fill="none" opacity="0.9"/><path d="M570.2 323.5L580.5 325.8L586.0 327.2M573.8 340.4L580.7 343.4L583.4 344.6M570.0 353.1L576.8 357.3L579.7 359.0M553.5 361.7L562.3 369.4L567.0 373.6M539.6 404.7L543.0 411.6L544.2 414.1M523.0 391.9L526.0 399.6L527.1 402.6M509.2 395.9L511.1 404.6L511.9 408.3M496.3 401.3L497.2 413.6L497.6 420.1M494.4 400.7L494.9 411.1L495.2 416.2M442.4 394.7L437.0 405.2L434.2 410.8M441.1 377.4L434.6 387.1L431.1 392.3M420.1 373.0L416.1 377.0L415.2 377.8M412.3 319.1L405.0 320.3L401.9 320.9M405.1 313.4L396.7 314.3L392.8 314.7M397.9 303.9L391.9 304.0L389.9 304.1M414.5 290.5L407.3 289.1L404.2 288.5M408.1 285.6L401.2 284.0L398.3 283.4M449.0 231.9L446.2 227.1L445.2 225.4M479.4 234.9L478.6 229.8L478.4 228.1M485.6 248.5L485.0 239.7L484.7 235.1M495.2 234.7L495.9 226.6L496.3 222.4M503.0 239.5L504.3 232.8L505.0 229.7M513.8 231.3L515.4 226.7L515.9 225.2M537.4 248.3L541.5 243.6L543.2 241.7M559.7 271.1L567.5 267.4L571.5 265.6M562.4 286.9L568.1 285.5L570.0 285.0" stroke="#4fb08a" stroke-width="1.1" stroke-linecap="round" fill="none" opacity="0.8"/><path d="M586.0 327.2L591.5 328.6M583.4 344.6L588.8 347.0M579.7 359.0L584.8 362.2M567.0 373.6L571.6 377.8M558.2 385.9L562.3 390.8M547.4 404.4L550.6 410.1M511.9 408.3L513.3 414.7M505.9 408.0L506.9 414.5M484.4 426.7L484.1 433.5M480.1 423.7L479.6 430.4M466.4 424.4L465.2 431.1M461.3 410.9L459.6 417.3M449.8 407.0L447.4 413.1M388.7 359.7L383.5 362.8M402.6 350.3L397.4 353.2M397.1 342.8L391.7 345.2M391.6 323.6L386.1 324.8M401.9 320.9L396.4 322.0M389.9 304.1L384.5 304.2M404.4 277.1L399.6 275.7M439.8 247.1L436.8 243.7M468.9 224.4L467.8 220.3M474.9 225.7L474.0 221.5M496.3 222.4L496.6 218.2M532.5 236.4L534.9 232.7M554.5 248.8L558.1 245.9M563.6 268.4L568.1 266.3M571.5 265.6L575.9 263.7M568.9 272.8L573.5 271.0" stroke="#f02a58" stroke-width="1.7" stroke-linecap="round" fill="none" opacity="0.8"/><path d="M578.7 330.1L585.4 332.1L587.9 332.9M577.0 336.9L585.6 340.2L589.6 341.8M574.1 357.2L580.1 361.1L582.3 362.5M508.6 394.3L510.3 402.5L511.0 405.8M504.0 396.2L505.3 404.6L505.9 408.0M460.9 401.8L458.5 410.2L457.4 413.7M456.5 389.7L452.1 400.9L449.8 407.0M413.1 365.1L405.4 371.3L401.7 374.3M417.7 342.6L407.9 347.6L402.6 350.3M403.5 306.2L397.4 306.4L395.3 306.4M409.5 278.7L405.3 277.4L404.4 277.1M403.0 266.2L398.3 264.3L396.9 263.8M423.2 271.6L418.4 269.2L416.9 268.5M424.8 266.4L420.3 263.7L418.9 262.9M426.9 258.3L423.6 255.9L423.0 255.5M433.2 255.9L429.4 252.6L428.3 251.7M441.7 233.5L437.9 228.2L436.2 225.9M469.8 244.9L468.0 239.3L467.3 237.1M476.7 235.4L475.4 228.8L474.9 225.7M521.7 238.7L524.8 232.3L526.3 229.4M520.4 247.1L523.3 241.7L524.5 239.4M538.4 256.2L541.5 253.2L542.1 252.5M561.0 275.9L566.7 273.6L568.9 272.8M557.4 283.9L564.0 281.8L566.7 280.9M570.5 291.3L578.6 290.0L582.3 289.5M581.8 298.7L587.3 298.5L588.9 298.4" stroke="#2f8468" stroke-width="1.1" stroke-linecap="round" fill="none" opacity="0.8"/><path d="M587.9 332.9L593.4 334.6M572.7 342.9L578.0 345.4M582.3 362.5L587.4 365.9M571.4 384.6L575.9 389.2M544.2 414.1L547.1 420.1M524.7 412.2L526.7 418.5M443.2 420.9L440.8 427.2M431.1 392.3L427.6 397.7M410.1 373.9L405.4 378.1M401.7 374.3L397.0 378.3M395.3 306.4L389.9 306.7M390.1 298.1L384.8 298.0M399.6 274.4L394.8 273.0M416.9 268.5L412.5 266.3M484.7 235.1L484.4 230.7M490.3 225.8L490.3 221.6M509.0 227.4L510.1 223.2M570.0 285.0L575.1 283.8M582.3 289.5L587.5 288.8M588.6 306.8L594.0 307.2M585.9 318.6L591.4 319.5" stroke="#ff5580" stroke-width="1.7" stroke-linecap="round" fill="none" opacity="0.8"/><path d="M589.6 341.8L595.0 344.0M581.1 373.8L585.9 377.6M573.3 372.0L578.0 376.0M547.2 382.9L550.9 387.9M551.8 401.7L555.3 407.3M497.6 420.1L498.1 426.8M474.4 431.2L473.6 438.0M434.2 410.8L431.2 416.7M420.8 393.4L417.0 398.6M412.1 352.3L407.0 355.5M398.3 283.4L393.3 282.5M423.0 255.5L419.1 252.8M427.3 246.6L423.8 243.6M436.2 225.9L433.7 222.4M445.2 225.4L442.9 221.7M462.9 243.0L461.1 238.9M467.3 237.1L465.9 232.9M505.0 229.7L505.9 225.5M524.5 239.4L526.6 235.5M539.2 234.5L541.9 231.0M543.2 241.7L546.2 238.3M542.1 252.5L545.5 249.2M566.7 280.9L571.6 279.5M593.7 313.7L599.2 314.4" stroke="#e8204c" stroke-width="1.7" stroke-linecap="round" fill="none" opacity="0.8"/><path d="M561.5 338.0L569.3 341.4L572.7 342.9M561.3 374.5L568.2 381.4L571.4 384.6M550.0 377.6L555.4 384.2L557.7 387.0M536.4 368.6L543.4 377.9L547.2 382.9M521.5 402.2L523.9 409.6L524.7 412.2M480.8 414.6L480.3 421.6L480.1 423.7M445.7 414.4L443.6 419.8L443.2 420.9M437.7 389.0L431.9 398.6L428.9 403.6M428.1 376.5L422.9 382.5L421.0 384.8M418.2 348.7L413.3 351.6L412.1 352.3M395.2 355.9L390.1 358.9L388.7 359.7M396.3 338.2L390.8 340.3L389.2 340.9M407.5 327.4L401.9 329.0L400.3 329.4M398.8 298.5L392.4 298.2L390.1 298.1M447.4 250.3L442.9 244.4L440.8 241.7M490.2 238.7L490.2 230.2L490.3 225.8M506.8 236.1L508.3 230.0L509.0 227.4M528.3 243.0L531.3 238.2L532.5 236.4M533.3 242.7L537.3 237.1L539.2 234.5M579.7 303.8L590.1 303.9L595.6 304.1M577.3 306.4L585.1 306.7L588.6 306.8" stroke="#5cc09a" stroke-width="1.1" stroke-linecap="round" fill="none" opacity="0.8"/><path d="M574.3 368.5L579.5 372.5L581.1 373.8M566.0 366.1L571.4 370.5L573.3 372.0M547.1 372.8L554.4 381.4L558.2 385.9M544.8 390.6L549.7 398.3L551.8 401.7M539.2 390.1L544.6 399.6L547.4 404.4M526.8 394.1L530.1 402.0L531.5 405.3M485.1 410.2L484.6 421.2L484.4 426.7M476.5 412.6L475.1 424.8L474.4 431.2M470.0 406.0L467.7 418.0L466.4 424.4M463.1 404.0L461.6 409.7L461.3 410.9M445.2 390.4L441.3 398.0L439.7 401.2M431.7 379.3L424.5 388.5L420.8 393.4M423.6 362.1L414.8 369.8L410.1 373.9M415.0 361.9L407.6 367.6L404.1 370.4M406.4 339.0L399.7 341.7L397.1 342.8M400.0 321.9L393.8 323.2L391.6 323.6M410.0 277.7L402.9 275.4L399.6 274.4M431.1 250.1L428.0 247.2L427.3 246.6M443.8 251.7L440.7 248.1L439.8 247.1M465.4 249.0L463.5 244.4L462.9 243.0M470.3 229.7L469.2 225.5L468.9 224.4M546.2 255.8L551.9 251.0L554.5 248.8M542.3 263.9L548.6 258.9L551.6 256.5M557.7 263.6L564.9 259.4L568.5 257.4M552.6 273.8L560.0 270.1L563.6 268.4M584.4 312.6L591.2 313.4L593.7 313.7M573.6 316.7L582.0 318.0L585.9 318.6" stroke="#3f9a78" stroke-width="1.1" stroke-linecap="round" fill="none" opacity="0.8"/><path d="M557.7 387.0L561.7 392.0M531.5 405.3L534.0 411.3M527.1 402.6L529.4 408.7M511.0 405.8L512.4 412.3M495.2 416.2L495.5 422.8M457.4 413.7L455.6 420.1M439.7 401.2L436.7 407.0M428.9 403.6L425.6 409.2M421.0 384.8L416.9 389.7M415.2 377.8L410.8 382.3M404.1 370.4L399.3 374.3M389.2 340.9L383.8 343.1M400.3 329.4L394.8 331.0M392.8 314.7L387.3 315.5M404.2 288.5L399.1 287.6M396.9 263.8L392.4 262.1M418.9 262.9L414.7 260.5M428.3 251.7L424.7 248.7M440.8 241.7L438.0 238.2M478.4 228.1L477.7 223.8M515.9 225.2L517.3 221.1M526.3 229.4L528.3 225.5M551.6 256.5L555.4 253.6M568.5 257.4L572.7 255.1M588.9 298.4L594.2 298.3M595.6 304.1L601.0 304.3" stroke="#ff3a6a" stroke-width="1.7" stroke-linecap="round" fill="none" opacity="0.8"/><path d="M554.5 322.2L563.6 324.2L568.1 325.3M550.4 340.6L556.6 343.9L559.0 345.2M539.4 364.8L544.8 371.0L547.0 373.5M535.2 371.3L539.8 377.7L541.6 380.3M518.7 380.0L521.3 386.5L522.1 388.7M512.0 395.6L514.3 404.8L515.3 408.9M491.8 385.2L492.1 395.2L492.2 399.9M481.9 387.5L481.2 394.7L481.0 397.1M466.4 392.8L464.9 398.7L464.5 400.1M459.8 373.9L455.7 382.9L453.8 387.3M430.0 371.2L426.4 375.1L425.8 375.8M431.7 346.4L424.2 351.3L420.9 353.6M428.2 339.1L424.3 341.1L424.0 341.3M424.9 301.6L416.8 300.8L413.1 300.5M421.1 290.6L417.0 289.6L416.4 289.4M440.3 287.2L434.5 284.6L432.4 283.7M435.0 282.9L430.7 280.9L429.7 280.4M426.5 269.5L423.0 267.5L422.6 267.3M450.7 265.9L447.0 261.8L445.7 260.4M451.0 255.8L447.7 251.4L446.5 249.9M469.6 254.0L467.7 248.8L467.0 247.0M477.8 252.8L476.3 245.8L475.6 242.7M484.2 243.7L483.6 236.1L483.3 232.5M529.1 266.2L533.7 261.4L535.6 259.4M534.8 267.6L538.6 264.2L539.6 263.3M547.0 295.9L554.3 294.3L557.4 293.6M551.5 303.8L559.7 303.3L563.4 303.0M557.1 316.1L564.3 317.0L567.2 317.4" stroke="#7a50b8" stroke-width="1.0" stroke-linecap="round" fill="none" opacity="0.65"/><path d="M568.1 325.3L573.6 326.6M549.0 366.1L553.4 370.4M547.0 373.5L551.0 378.2M541.6 380.3L545.1 385.4M522.1 388.7L524.5 394.6M492.2 399.9L492.4 406.4M481.0 397.1L480.4 403.5M453.8 387.3L451.2 393.0M444.1 382.5L440.9 387.9M408.9 324.5L403.4 325.8M411.5 313.4L406.0 313.9M413.1 300.5L407.8 300.1M429.1 261.4L425.2 258.5M455.6 250.9L453.1 246.9M483.3 232.5L482.9 228.0M494.4 237.7L494.8 233.1M525.5 253.9L528.1 250.0M559.5 277.3L564.2 275.4M561.3 290.2L566.4 289.0M563.4 303.0L568.8 302.8" stroke="#d82868" stroke-width="1.5" stroke-linecap="round" fill="none" opacity="0.65"/><path d="M564.8 330.8L572.6 333.4L576.0 334.5M555.0 331.3L560.8 333.4L562.5 334.0M550.9 337.2L557.7 340.4L560.4 341.8M551.2 350.7L556.1 354.1L557.5 355.1M553.7 360.4L557.1 363.2L557.4 363.4M545.3 362.3L548.6 365.7L549.0 366.1M528.5 380.5L530.8 384.8L531.1 385.3M494.2 387.6L494.5 392.8L494.6 393.6M477.7 391.1L476.3 401.3L475.6 406.3M451.9 381.9L448.4 388.8L447.2 391.4M448.3 375.5L445.1 380.9L444.1 382.5M445.3 367.1L442.4 371.0L442.0 371.5M434.3 377.0L431.0 381.3L430.3 382.1M422.9 344.1L417.3 347.2L415.5 348.2M420.3 331.8L415.9 333.4L415.3 333.6M421.6 312.6L414.4 313.2L411.5 313.4M422.2 311.5L415.8 311.9L413.5 312.0M420.9 298.2L413.2 297.3L409.8 296.9M458.8 256.4L456.3 252.2L455.6 250.9M493.8 246.5L494.2 240.2L494.4 237.7M553.3 279.9L558.1 277.8L559.5 277.3M556.4 285.4L561.1 283.9L562.3 283.5M548.9 293.2L557.3 291.1L561.3 290.2" stroke="#3f8a70" stroke-width="1.0" stroke-linecap="round" fill="none" opacity="0.65"/><path d="M576.0 334.5L581.4 336.4M562.5 334.0L567.9 336.0M560.4 341.8L565.7 344.3M559.0 345.2L564.1 348.1M557.5 355.1L562.4 358.6M557.4 363.4L562.0 367.3M538.3 383.8L541.6 389.1M531.1 385.3L534.0 390.9M514.1 390.5L515.9 396.6M515.3 408.9L516.8 415.3M505.2 401.4L506.2 407.8M494.6 393.6L495.0 399.9M475.6 406.3L474.7 412.7M464.5 400.1L462.9 406.3M458.6 392.8L456.5 398.8M447.2 391.4L444.3 397.1M442.0 371.5L438.3 376.4M430.3 382.1L426.5 387.1M425.8 375.8L421.6 380.4M423.0 361.7L418.3 365.6M420.9 353.6L415.9 357.0M415.5 348.2L410.4 351.2M424.0 341.3L418.8 343.9M415.3 333.6L409.9 335.6M415.0 330.4L409.6 332.1M413.5 312.0L408.1 312.4M409.8 296.9L404.5 296.3M416.4 289.4L411.3 288.3M432.4 283.7L427.7 281.7M429.7 280.4L425.1 278.3M422.6 267.3L418.3 264.9M439.8 258.3L436.3 255.0M445.7 260.4L442.4 256.9M446.5 249.9L443.7 246.2M462.9 245.3L461.0 241.0M467.0 247.0L465.4 242.6M475.6 242.7L474.7 238.2M490.2 242.6L490.3 238.1M501.6 238.9L502.4 234.4M508.8 239.4L510.1 235.0M519.4 247.2L521.6 243.1M523.9 248.2L526.3 244.1M535.6 259.4L539.0 255.9M539.6 263.3L543.3 260.1M544.7 269.6L548.8 266.8M545.6 271.7L549.9 269.0M562.3 283.5L567.2 282.0M557.4 293.6L562.6 292.6M571.6 308.4L577.0 308.6M567.2 317.4L572.7 318.2" stroke="#e03070" stroke-width="1.5" stroke-linecap="round" fill="none" opacity="0.65"/><path d="M532.6 374.9L536.7 381.3L538.3 383.8M512.2 384.1L513.8 389.4L514.1 390.5M503.6 391.8L504.8 399.0L505.2 401.4M463.1 380.6L460.0 389.0L458.6 392.8M431.3 354.9L425.3 359.8L423.0 361.7M422.4 328.2L416.7 329.9L415.0 330.4M420.4 322.0L412.4 323.7L408.9 324.5M434.6 265.4L430.4 262.3L429.1 261.4M446.3 264.8L441.7 260.2L439.8 258.3M465.7 251.9L463.6 246.9L462.9 245.3M490.1 254.1L490.2 246.3L490.2 242.6M500.6 244.7L501.4 240.1L501.6 238.9M505.8 249.9L507.8 242.7L508.8 239.4M514.7 256.8L517.9 250.3L519.4 247.2M519.4 255.8L522.6 250.4L523.9 248.2M520.0 262.2L523.8 256.4L525.5 253.9M539.8 272.9L543.7 270.2L544.7 269.6M537.8 276.8L543.4 273.1L545.6 271.7M560.9 308.2L568.4 308.3L571.6 308.4" stroke="#3a8a6a" stroke-width="1.0" stroke-linecap="round" fill="none" opacity="0.65"/><circle cx="489.500" cy="315" r="58" fill="url(#gBall)"/><path d="M529.8 315.2L536.3 315.8L538.7 316.1M511.2 319.6L523.2 323.7L530.2 326.3M520.3 324.9L531.7 329.9L538.2 332.9M517.2 324.8L524.4 328.2L527.5 329.7M526.4 332.4L533.9 336.7L537.3 338.8M513.9 346.1L518.2 352.1L519.8 354.5M510.6 352.2L515.4 361.5L517.8 366.4M489.6 342.0L489.7 353.2L489.7 359.3M488.3 354.8L488.1 361.6L488.1 364.0M484.8 357.7L483.7 368.9L483.1 374.9M475.3 355.7L472.5 364.6L471.2 368.7M473.8 347.0L469.8 356.1L467.8 360.7M475.1 326.6L466.6 335.1L461.8 339.9M464.8 331.4L454.3 339.7L448.2 344.7M461.2 332.6L453.8 338.1L450.3 340.8M447.8 335.1L439.0 340.3L434.5 343.0M467.4 320.3L459.8 323.1L456.5 324.4M455.1 317.6L443.0 319.8L436.2 321.2M462.6 315.7L452.4 317.1L447.0 317.9M457.6 305.0L444.9 302.4L437.3 301.1M457.6 303.2L449.2 301.0L445.2 300.0M466.1 304.1L453.4 299.8L445.7 297.4M457.1 298.2L448.8 294.8L444.6 293.2M462.4 295.6L452.9 290.1L447.5 287.1M468.9 287.9L462.0 280.1L458.3 276.0M482.7 279.9L480.2 268.2L478.7 261.6M495.6 277.1L497.3 267.2L498.3 261.9M495.8 294.6L499.9 283.0L502.3 276.4M508.2 280.3L512.3 273.5L514.2 270.4M510.6 284.4L514.0 280.0L515.1 278.6M522.0 288.9L526.7 285.7L528.3 284.7M523.2 298.0L532.6 294.3L537.6 292.4M526.4 299.5L532.1 297.7L533.9 297.2M530.6 303.5L543.3 301.4L550.8 300.3" stroke="#a060e0" stroke-width="1.0" stroke-linecap="round" fill="none" opacity="0.75"/><path d="M538.7 316.1L544.2 316.7M523.4 320.0L528.9 321.3M527.5 329.7L532.6 332.3M535.8 352.5L540.2 356.6M534.8 360.9L538.8 365.5M518.2 347.3L521.9 352.0M517.8 366.4L520.5 371.8M506.0 356.2L508.0 361.8M496.6 370.8L497.3 376.9M488.1 364.0L487.9 370.1M483.1 374.9L482.5 381.0M471.2 368.7L469.4 374.6M467.5 351.2L464.6 356.4M457.3 365.8L454.3 371.1M461.8 339.9L457.8 344.1M448.2 344.7L443.7 348.4M438.0 344.6L433.2 347.9M447.4 332.8L442.3 335.5M443.8 332.2L438.7 334.7M456.5 324.4L451.3 326.4M438.5 317.6L433.0 318.5M454.7 313.6L449.2 313.9M446.3 310.3L440.8 310.2M445.7 297.4L440.6 295.9M444.6 293.2L439.7 291.4M440.1 286.3L435.5 284.1M459.6 289.8L455.4 286.7M448.1 277.7L444.0 274.7M455.9 279.2L452.2 275.8M458.9 275.2L455.6 271.4M477.5 270.0L476.0 265.3M487.1 268.3L486.9 263.4M498.3 261.9L499.2 257.2M498.8 266.0L499.8 261.2M500.9 267.2L502.2 262.4M503.7 265.3L505.2 260.6M505.2 274.6L507.2 270.0M515.0 260.7L517.3 256.4M515.1 278.6L518.2 274.6M521.1 284.0L525.0 280.7M528.3 284.7L532.6 281.8M534.5 289.7L539.2 287.5M533.9 297.2L539.0 295.7M531.0 301.1L536.2 299.9M550.8 300.3L556.1 299.6M538.2 313.2L543.6 313.5" stroke="#d040c0" stroke-width="1.4" stroke-linecap="round" fill="none" opacity="0.75"/><path d="M529.2 317.9L537.9 319.4L542.0 320.2M525.6 329.8L531.1 332.6L532.8 333.5M516.9 329.1L524.6 334.0L528.3 336.4M509.7 325.5L520.5 332.7L526.7 336.9M506.0 331.2L513.7 340.0L517.9 345.0M501.1 351.5L503.1 358.4L503.8 361.0M494.1 336.6L496.5 349.6L497.9 357.2M494.9 356.0L496.0 365.9L496.6 370.8M478.3 349.5L474.8 361.5L472.9 368.4M455.4 328.7L449.4 331.7L447.4 332.8M472.7 313.0L461.2 313.3L454.7 313.6M445.7 311.3L439.1 311.4L436.7 311.4M462.3 310.8L451.8 310.4L446.3 310.3M451.7 305.6L443.7 304.4L440.0 304.0M453.6 294.1L441.8 288.6L434.8 285.6M450.5 277.2L446.1 273.6L444.6 272.4M470.2 293.0L461.2 284.2L455.9 279.2M465.4 282.7L460.8 277.4L458.9 275.2M483.9 278.9L482.7 271.6L482.1 268.4M489.5 275.1L489.4 267.6L489.4 264.3M497.8 279.3L499.9 271.1L500.9 267.2M507.7 281.8L513.9 271.7L517.6 266.0M503.9 291.0L510.6 281.2L514.5 275.8M514.0 287.4L522.8 278.9L528.0 274.1M516.0 295.3L523.7 290.6L527.5 288.3M523.3 294.1L531.7 289.9L536.0 287.8M520.3 303.8L527.8 301.9L531.0 301.1M522.8 306.1L532.5 304.5L537.6 303.8M521.1 312.6L532.1 312.9L538.2 313.2" stroke="#6040b8" stroke-width="1.0" stroke-linecap="round" fill="none" opacity="0.75"/><path d="M542.0 320.2L547.5 321.3M526.7 336.9L531.4 340.2M527.1 341.2L531.7 344.9M530.0 348.8L534.3 352.9M517.9 345.0L521.7 349.5M519.8 354.5L523.1 359.4M520.3 363.0L523.3 368.3M510.2 353.6L512.8 358.9M511.3 363.7L513.6 369.3M501.5 348.5L503.4 354.1M491.7 375.3L491.9 381.5M482.6 369.6L481.9 375.7M481.9 358.8L481.0 364.8M472.9 368.4L471.2 374.3M469.1 365.0L467.0 370.7M462.7 351.3L459.5 356.2M450.2 347.4L445.9 351.5M436.7 311.4L431.2 311.6M443.8 307.8L438.4 307.5M445.2 300.0L440.0 298.8M446.5 299.6L441.3 298.3M434.8 285.6L430.0 283.6M447.5 287.1L443.0 284.6M458.3 276.0L454.9 272.2M468.2 268.7L466.0 264.3M478.7 261.6L477.6 256.8M489.4 264.3L489.4 259.4M492.8 269.3L493.2 264.3M494.4 262.9L494.9 258.0M514.2 270.4L516.8 266.1M517.6 266.0L520.3 261.9M514.5 275.8L517.5 271.7M528.0 274.1L531.7 270.7M529.9 279.5L534.0 276.5M530.8 279.9L534.9 276.9M527.5 288.3L532.0 285.6M536.0 287.8L540.7 285.6M537.6 292.4L542.5 290.7M537.6 303.8L542.9 303.1M539.4 308.0L544.8 307.8M539.2 309.1L544.6 309.0M552.1 311.4L557.6 311.7" stroke="#e848b0" stroke-width="1.4" stroke-linecap="round" fill="none" opacity="0.75"/><path d="M524.0 318.0L534.1 319.9L539.3 321.0M513.5 318.5L525.6 321.8L532.6 323.8M513.0 330.1L522.1 337.2L527.1 341.2M520.1 339.5L526.8 345.8L530.0 348.8M521.0 345.5L529.8 355.2L534.8 360.9M495.3 329.8L499.3 341.7L501.5 348.5M498.5 350.8L500.9 361.5L502.2 367.2M494.1 358.6L494.8 366.1L495.0 369.0M483.7 347.8L482.4 355.6L481.9 358.8M478.4 335.9L472.2 349.2L468.5 357.3M467.9 340.1L460.4 350.0L456.3 355.7M449.4 337.0L441.7 342.1L438.0 344.6M451.4 328.7L445.7 331.3L443.8 332.2M467.9 319.5L456.3 323.5L449.7 325.8M458.3 318.8L446.1 321.7L439.0 323.5M457.7 285.3L451.2 280.2L448.1 277.7M470.9 283.4L465.9 275.8L463.4 272.1M476.9 286.2L471.5 275.1L468.2 268.7M477.9 283.7L473.3 272.8L470.6 266.6M480.1 280.1L477.9 272.6L476.9 269.2M482.2 286.4L479.2 275.8L477.5 270.0M487.9 282.3L487.4 273.1L487.1 268.3M492.0 279.5L492.5 272.3L492.8 269.3M493.1 275.3L493.9 266.9L494.4 262.9M498.3 282.7L501.8 271.6L503.7 265.3M501.6 283.0L504.2 277.0L505.2 274.6M516.9 279.5L522.2 273.5L524.8 270.6M523.2 284.7L528.1 280.9L529.9 279.5M522.7 295.3L530.6 291.5L534.5 289.7M530.1 308.5L536.8 308.1L539.4 308.0" stroke="#9468f0" stroke-width="1.0" stroke-linecap="round" fill="none" opacity="0.75"/><path d="M539.3 321.0L544.8 322.1M532.6 323.8L538.0 325.5M530.2 326.3L535.5 328.3M538.2 332.9L543.4 335.3M532.8 333.5L537.9 336.2M537.3 338.8L542.3 341.8M528.3 336.4L533.1 339.6M517.1 354.6L520.2 359.7M503.8 361.0L505.5 366.8M502.2 367.2L503.5 373.1M497.9 357.2L499.0 363.1M495.0 369.0L495.6 375.1M489.7 359.3L489.7 365.3M479.2 357.4L477.9 363.3M467.8 360.7L465.4 366.2M468.5 357.3L466.1 362.8M456.3 355.7L452.8 360.5M454.6 354.3L450.9 359.0M455.6 349.2L451.7 353.6M435.6 361.1L431.3 365.4M450.3 340.8L445.7 344.4M434.5 343.0L429.6 346.1M449.7 325.8L444.4 327.8M434.5 329.0L429.1 331.0M439.0 323.5L433.6 324.9M436.2 321.2L430.7 322.4M447.0 317.9L441.6 318.8M440.0 304.0L434.7 303.3M437.3 301.1L432.0 300.2M457.4 289.3L453.1 286.4M444.6 272.4L440.7 269.2M461.4 272.4L458.4 268.4M463.4 272.1L460.5 267.9M463.5 268.0L460.9 263.9M470.6 266.6L468.7 262.1M471.7 262.0L470.0 257.5M476.9 269.2L475.4 264.4M482.1 268.4L481.2 263.5M485.1 262.9L484.7 258.1M502.3 276.4L504.1 271.6M524.8 270.6L528.1 267.0M541.4 296.3L546.5 295.0" stroke="#ff5aa0" stroke-width="1.4" stroke-linecap="round" fill="none" opacity="0.75"/><path d="M513.4 317.6L520.6 319.3L523.4 320.0M526.8 344.3L533.1 350.0L535.8 352.5M511.0 338.4L516.1 344.6L518.2 347.3M508.7 341.4L514.2 350.1L517.1 354.6M512.0 349.0L517.5 358.2L520.3 363.0M499.7 332.5L506.3 345.5L510.2 353.6M504.3 346.7L508.9 357.6L511.3 363.7M501.3 343.5L504.5 352.1L506.0 356.2M491.4 364.6L491.6 372.3L491.7 375.3M484.8 350.6L483.4 362.8L482.6 369.6M481.4 347.7L479.8 354.8L479.2 357.4M475.2 348.8L471.2 359.3L469.1 365.0M475.6 336.7L470.3 346.1L467.5 351.2M465.0 352.6L459.9 361.4L457.3 365.8M475.8 332.0L467.7 344.0L462.7 351.3M461.7 345.5L456.7 351.7L454.6 354.3M468.6 334.8L460.3 343.9L455.6 349.2M464.3 334.5L455.3 342.7L450.2 347.4M449.0 348.2L440.4 356.5L435.6 361.1M448.0 324.5L439.0 327.5L434.5 329.0M449.7 316.2L441.9 317.2L438.5 317.6M454.5 308.6L447.0 308.0L443.8 307.8M460.9 303.6L451.4 301.0L446.5 299.6M447.1 289.7L441.9 287.1L440.1 286.3M471.5 299.3L462.5 292.8L457.4 289.3M468.2 296.1L462.2 291.7L459.6 289.8M471.6 286.5L465.1 277.4L461.4 272.4M468.2 275.7L464.8 270.2L463.5 268.0M474.2 268.9L472.3 263.7L471.7 262.0M486.1 273.3L485.4 266.1L485.1 262.9M497.0 274.7L498.3 268.5L498.8 266.0M508.7 272.9L512.8 264.8L515.0 260.7M510.4 293.4L517.5 287.2L521.1 284.0M522.2 286.3L528.2 281.8L530.8 279.9M528.8 299.8L537.3 297.4L541.4 296.3M528.6 309.5L536.0 309.2L539.2 309.1M530.9 311.0L544.2 311.2L552.1 311.4" stroke="#7a50d8" stroke-width="1.0" stroke-linecap="round" fill="none" opacity="0.75"/><path d="M506.6 314.0L511.5 314.3L512.4 314.4M506.4 314.6L511.1 315.1L512.0 315.2M520.6 320.6L528.7 322.8L532.3 323.9M500.4 318.8L508.1 323.0L511.7 325.0M510.0 334.3L516.6 341.5L519.9 345.1M510.1 343.4L513.2 348.1L513.9 349.2M479.2 327.0L473.7 334.7L471.0 338.5M475.5 330.4L471.4 335.7L469.9 337.6M481.5 320.2L477.1 324.2L475.7 325.5M467.2 323.6L462.9 325.7L462.1 326.1M457.3 323.4L452.0 325.3L450.6 325.8M453.8 317.0L448.8 317.7L447.7 317.8M466.2 312.0L455.7 311.9L450.2 311.8M470.2 310.0L461.9 308.9L458.1 308.4M462.6 299.7L455.9 296.6L453.0 295.3M476.8 300.2L470.1 293.7L466.7 290.4M472.0 293.8L467.8 289.4L466.4 287.9M474.7 293.2L470.6 287.9L469.1 285.9M483.5 303.7L477.8 295.1L474.8 290.5M482.1 298.2L478.8 291.7L477.5 289.1M486.2 296.6L484.8 289.9L484.2 287.4M486.8 291.4L486.1 285.6L485.9 283.8M486.4 282.4L485.4 273.7L485.0 269.4M502.0 289.5L506.0 282.3L507.8 279.0M514.7 296.7L522.0 292.3L525.5 290.2M515.7 299.0L522.3 295.7L525.2 294.3" stroke="#8a5ae8" stroke-width="1.0" stroke-linecap="round" fill="none" opacity="0.75"/><path d="M512.4 314.4L517.9 314.9M518.2 318.3L523.6 319.4M532.3 323.9L537.7 325.4M525.5 324.7L530.8 326.6M524.9 327.7L530.0 330.0M511.7 325.0L516.6 327.7M512.4 326.7L517.1 329.6M515.1 330.9L519.6 334.2M506.2 333.8L509.7 338.2M506.0 339.8L508.9 344.7M502.6 339.7L505.1 344.9M496.1 343.6L497.3 349.2M493.3 344.4L494.0 350.1M493.7 354.7L494.3 360.6M489.6 349.7L489.7 355.5M486.5 353.3L486.1 359.2M484.4 342.5L483.4 348.1M479.0 346.8L477.4 352.3M481.7 335.2L479.9 340.6M475.0 346.9L472.7 352.3M466.3 349.4L463.3 354.4M464.7 339.1L460.8 343.4M475.7 325.5L471.6 329.3M457.2 327.9L452.1 330.4M450.6 325.8L445.3 327.8M440.3 325.3L434.9 326.9M447.7 317.8L442.2 318.7M450.2 311.8L444.7 311.9M443.3 304.8L437.9 304.0M467.8 305.1L462.7 303.4M463.4 299.4L458.6 297.0M458.9 293.2L454.4 290.5M466.4 287.9L462.7 284.1M469.1 285.9L465.8 281.8M474.8 290.5L471.9 286.2M477.5 289.1L475.0 284.4M495.8 277.2L496.8 272.1M500.1 270.5L501.4 265.6M508.0 284.6L511.0 280.3M499.2 300.1L502.5 295.9M527.9 283.9L532.2 280.9M525.5 290.2L530.0 287.5M509.2 304.5L514.2 302.5M532.7 302.1L538.0 300.9M518.5 305.6L523.8 304.4M518.7 308.0L524.1 307.2" stroke="#e050d0" stroke-width="1.3" stroke-linecap="round" fill="none" opacity="0.75"/><path d="M512.0 315.2L517.5 315.8M519.1 338.9L523.3 342.7M514.0 337.1L518.0 341.2M519.9 345.1L523.8 349.4M513.9 349.2L517.1 354.1M500.2 336.4L502.5 341.7M498.8 336.4L500.8 341.7M501.4 355.9L502.9 361.6M484.6 341.6L483.7 347.2M473.9 343.2L471.3 348.3M471.0 338.5L467.7 343.2M469.9 337.6L466.4 342.1M465.7 333.2L461.4 337.0M453.0 339.7L448.4 343.2M461.0 329.5L456.2 332.5M462.1 326.1L457.1 328.6M463.1 319.9L457.8 321.5M456.1 315.9L450.6 316.5M457.7 311.1L452.3 311.0M458.1 308.4L452.7 307.7M464.4 305.5L459.1 304.1M453.0 295.3L448.1 293.1M472.7 300.5L468.3 297.4M477.2 302.3L473.1 298.8M466.7 290.4L462.9 286.8M476.3 283.8L474.1 279.0M479.4 286.6L477.5 281.7M480.6 282.3L479.1 277.3M484.2 287.4L483.1 282.2M485.9 283.8L485.2 278.6M485.0 269.4L484.4 264.4M489.9 288.0L490.0 282.7M492.0 286.7L492.5 281.5M500.1 280.6L501.8 275.7M498.9 286.6L500.7 281.6M501.7 286.9L504.0 282.1M507.8 279.0L510.4 274.5M505.7 295.2L509.4 291.3M512.5 291.5L516.5 287.9M512.4 292.9L516.5 289.4M525.2 294.3L530.0 291.9M526.4 298.3L531.5 296.5M514.4 310.2L519.9 309.7M512.9 312.7L518.4 312.8" stroke="#f060b0" stroke-width="1.3" stroke-linecap="round" fill="none" opacity="0.75"/><path d="M511.5 316.9L516.8 318.0L518.2 318.3M518.9 325.0L523.7 327.2L524.9 327.7M502.4 320.6L509.3 324.8L512.4 326.7M508.5 326.2L513.5 329.7L515.1 330.9M501.9 333.0L505.0 338.2L506.0 339.8M497.6 329.3L501.1 336.5L502.6 339.7M493.5 323.1L497.0 331.9L498.8 336.4M489.6 342.3L489.6 348.1L489.6 349.7M484.1 330.3L480.8 340.9L479.0 346.8M484.9 326.1L482.6 332.7L481.7 335.2M479.9 331.5L475.8 339.4L473.9 343.2M472.0 340.2L468.0 346.7L466.3 349.4M475.3 324.9L468.7 330.5L465.7 333.2M468.7 324.9L463.0 328.3L461.0 329.5M470.1 321.7L461.5 325.8L457.2 327.9M470.0 318.0L464.6 319.5L463.1 319.9M461.8 315.2L457.0 315.8L456.1 315.9M464.4 296.7L460.0 293.9L458.9 293.2M484.3 299.1L481.0 290.7L479.4 286.6M495.3 305.3L498.4 301.2L499.2 300.1M495.6 306.1L502.3 298.9L505.7 295.2M502.3 301.6L509.1 295.7L512.4 292.9M495.8 310.2L504.7 306.4L509.2 304.5M510.7 309.2L516.7 308.3L518.7 308.0M507.6 310.9L513.0 310.4L514.4 310.2M504.8 312.7L510.9 312.7L512.9 312.7" stroke="#c050c0" stroke-width="1.0" stroke-linecap="round" fill="none" opacity="0.75"/><path d="M515.9 321.4L522.8 323.8L525.5 324.7M511.5 332.0L516.9 336.9L519.1 338.9M506.1 329.1L511.6 334.7L514.0 337.1M499.1 324.8L504.1 331.0L506.2 333.8M494.6 324.0L498.3 332.4L500.2 336.4M498.6 345.6L500.6 352.9L501.4 355.9M493.8 333.0L495.4 340.5L496.1 343.6M491.9 332.4L492.9 340.7L493.3 344.4M492.3 340.3L493.3 349.9L493.7 354.7M487.0 346.6L486.6 352.0L486.5 353.3M486.2 332.3L485.1 339.1L484.6 341.6M485.8 334.0L484.7 340.3L484.4 342.5M478.2 339.3L475.7 345.1L475.0 346.9M470.8 332.5L466.3 337.4L464.7 339.1M457.8 336.0L453.8 339.1L453.0 339.7M451.0 322.3L443.5 324.4L440.3 325.3M465.6 311.4L459.6 311.2L457.7 311.1M452.0 306.0L445.6 305.1L443.3 304.8M472.2 307.7L466.3 306.1L464.4 305.5M475.2 307.7L469.6 305.7L467.8 305.1M477.7 306.7L468.4 301.9L463.4 299.4M480.7 306.4L475.0 302.2L472.7 300.5M485.2 309.2L479.6 304.3L477.2 302.3M480.5 292.8L477.6 286.4L476.3 283.8M482.9 290.1L481.2 284.3L480.6 282.3M489.8 294.1L489.9 289.1L489.9 288.0M490.6 301.1L491.5 291.5L492.0 286.7M494.6 284.1L495.6 278.7L495.8 277.2M497.7 280.2L499.4 273.3L500.1 270.5M498.1 286.5L499.7 281.8L500.1 280.6M494.6 298.4L497.5 290.4L498.9 286.6M497.4 295.8L500.5 289.4L501.7 286.9M500.9 295.4L505.7 288.1L508.0 284.6M506.1 297.3L510.8 293.0L512.5 291.5M520.0 289.6L525.6 285.5L527.9 283.9M519.0 301.1L524.6 299.0L526.4 298.3M525.7 303.6L531.1 302.4L532.7 302.1M505.9 308.6L514.5 306.5L518.5 305.6" stroke="#b070f0" stroke-width="1.0" stroke-linecap="round" fill="none" opacity="0.75"/><path d="M496.4 313.5L502.6 313.9L504.7 314.0M497.3 314.8L501.0 315.7L501.1 315.7M493.5 315.9L499.7 320.5L502.4 322.4M493.4 317.4L496.3 320.7L496.8 321.2M497.1 323.4L501.1 328.9L502.5 330.9M494.7 322.1L497.7 327.4L498.7 329.0M490.3 321.4L490.9 328.3L491.1 331.0M489.9 324.0L490.1 329.0L490.2 330.0M488.8 320.7L488.5 324.2L488.5 324.0M488.0 317.6L486.8 321.4L486.7 321.7M492.5 307.7L489.0 313.8L487.7 316.2M484.4 318.9L480.2 323.8L478.7 325.5M481.0 317.6L476.8 319.8L476.1 320.2M485.6 313.6L480.9 314.4L480.1 314.5M487.1 313.0L482.4 313.0L481.7 313.0M478.5 311.8L474.2 311.4L473.7 311.3M490.6 313.2L483.3 312.1L480.2 311.6M474.8 306.8L471.3 305.3L471.2 305.3M487.2 311.7L481.8 308.5L480.0 307.5M481.4 301.4L478.3 297.1L477.5 296.0M485.6 304.9L483.9 301.1L483.7 300.8M485.2 303.5L483.5 299.6L483.2 299.1M489.8 311.1L490.8 304.9L491.1 302.7M492.8 298.3L494.0 292.9L494.3 291.4M492.2 308.6L495.6 303.3L496.7 301.4M499.4 302.4L501.9 299.7L501.9 299.8M491.4 311.8L496.7 308.5L498.6 307.3M498.3 309.6L503.9 307.4L505.7 306.7" stroke="#e070c0" stroke-width="1.0" stroke-linecap="round" fill="none" opacity="0.7"/><path d="M504.7 314.0L510.2 314.4M501.1 315.7L506.5 317.0M504.3 317.5L509.6 319.1M504.4 320.5L509.3 323.0M498.4 318.3L503.1 321.2M502.4 322.4L506.8 325.6M496.8 321.2L500.4 325.4M502.5 330.9L505.8 335.3M498.7 329.0L501.4 333.8M496.7 328.7L499.0 333.7M492.4 326.8L493.6 332.2M491.1 331.0L491.6 336.5M490.2 330.0L490.4 335.5M488.5 324.0L488.0 329.5M486.7 321.7L485.1 326.9M484.5 327.4L482.8 332.6M487.7 316.2L484.9 321.0M476.6 332.1L473.5 336.7M478.7 325.5L475.2 329.7M477.5 323.1L473.2 326.7M469.4 326.2L464.8 329.2M476.1 320.2L471.2 322.8M466.8 318.9L461.5 320.3M480.1 314.5L474.6 315.4M481.7 313.0L476.2 313.1M473.7 311.3L468.2 310.7M480.2 311.6L474.7 310.9M478.1 309.2L472.9 307.5M471.2 305.3L466.1 303.1M480.0 307.5L475.2 304.7M477.3 302.7L473.1 299.2M475.2 297.0L471.5 292.9M477.5 296.0L474.4 291.5M483.7 300.8L481.3 295.8M483.2 299.1L481.0 294.0M485.4 300.3L483.7 295.1M487.5 299.5L486.6 294.1M490.0 303.1L490.3 297.6M491.1 302.7L492.0 297.3M494.3 291.4L495.5 286.0M493.6 300.5L495.4 295.3M496.7 301.4L499.6 296.8M492.8 308.0L495.9 303.5M501.9 299.8L505.7 295.7M507.5 296.7L511.6 293.1M498.6 307.3L503.2 304.4M501.3 306.5L506.1 303.9M505.7 306.7L510.9 304.8M502.5 311.3L507.9 310.6M499.4 312.2L504.8 311.7" stroke="#ff80c0" stroke-width="1.2" stroke-linecap="round" fill="none" opacity="0.7"/><path d="M499.3 316.0L503.6 317.3L504.3 317.5M498.5 317.5L503.3 319.9L504.4 320.5M494.6 316.1L498.1 318.2L498.4 318.3M492.9 320.5L495.7 326.5L496.7 328.7M490.7 318.8L492.0 324.8L492.4 326.8M486.1 322.8L484.7 326.9L484.5 327.4M479.9 327.2L477.2 331.3L476.6 332.1M483.8 317.8L479.1 321.8L477.5 323.1M476.4 321.6L471.2 325.0L469.4 326.2M477.3 316.2L469.9 318.1L466.8 318.9M484.0 311.2L479.2 309.6L478.1 309.2M480.3 305.3L477.4 302.8L477.3 302.7M481.5 304.0L476.9 299.0L475.2 297.0M487.8 307.7L486.0 302.1L485.4 300.3M489.0 309.5L487.9 302.4L487.5 299.5M489.5 313.0L489.9 305.9L490.0 303.1M491.3 307.5L493.1 302.1L493.6 300.5M488.6 314.4L491.8 309.5L492.8 308.0M501.3 302.4L505.9 298.2L507.5 296.7M495.1 309.9L500.0 307.3L501.3 306.5M497.7 311.9L502.0 311.4L502.5 311.3M494.6 312.6L498.9 312.2L499.4 312.2" stroke="#c070e0" stroke-width="1.0" stroke-linecap="round" fill="none" opacity="0.7"/><path d="M554.7 385.4L559.8 391.6L561.7 393.9M528.6 363.3L533.2 369.2L534.9 371.4M540.2 390.8L543.7 396.4L544.7 398.0M520.9 378.7L524.4 386.0L525.7 388.8M519.3 406.8L522.6 417.6L524.2 423.0M507.8 378.2L510.8 388.9L512.3 394.4M511.9 420.1L513.6 429.1L514.3 432.7M498.0 398.5L499.0 409.2L499.5 414.3M491.6 383.6L492.0 396.3L492.2 403.3M476.3 386.9L474.3 398.3L473.2 404.2M469.8 402.4L468.6 408.1L468.4 409.2M462.0 395.5L460.2 401.3L459.8 402.5M464.6 380.8L461.2 390.2L459.6 394.6M458.6 385.4L453.9 396.9L451.4 403.0M452.5 389.0L447.8 398.9L445.6 403.7M451.0 364.6L445.5 371.9L443.0 375.2M442.6 371.8L438.2 377.4L436.7 379.3M437.2 371.2L430.1 379.4L426.6 383.6" stroke="#c82058" stroke-width="1.1" stroke-linecap="round" fill="none" opacity="0.85"/><path d="M561.7 393.9L565.9 399.1M534.9 371.4L538.7 376.4M544.7 398.0L548.1 403.8M521.5 389.2L524.0 395.4M520.9 399.5L523.1 405.9M514.3 432.7L515.6 439.8M500.8 397.6L501.7 404.3M485.3 431.2L485.0 438.4M480.5 406.2L479.9 413.0M456.4 435.6L454.6 442.6M459.6 394.6L457.4 400.9M441.0 406.4L438.0 412.6M433.2 404.0L429.8 410.0M447.7 377.0L444.2 382.5M443.0 375.2L439.2 380.4" stroke="#ff3068" stroke-width="1.6" stroke-linecap="round" fill="none" opacity="0.85"/><path d="M547.3 390.8L554.6 401.6L558.6 407.5M543.1 398.2L548.1 406.9L550.4 410.9M526.8 384.1L532.3 395.0L535.2 400.8M514.2 372.0L519.0 383.2L521.5 389.2M514.9 382.6L518.9 393.7L520.9 399.5M500.9 363.1L503.7 375.1L505.3 381.7M498.9 383.3L500.2 393.1L500.8 397.6M494.6 423.1L495.1 433.7L495.3 438.6M485.7 419.6L485.4 428.1L485.3 431.2M484.6 372.6L483.8 382.5L483.4 387.1M481.7 394.1L480.9 402.7L480.5 406.2M476.4 390.3L474.6 401.2L473.7 406.7M459.2 424.2L457.1 432.5L456.4 435.6M448.6 391.0L443.5 401.2L441.0 406.4M439.4 393.3L435.0 400.9L433.2 404.0M454.5 366.7L449.7 373.9L447.7 377.0" stroke="#e02860" stroke-width="1.1" stroke-linecap="round" fill="none" opacity="0.85"/><path d="M558.6 407.5L562.4 413.2M550.4 410.9L553.8 416.9M535.2 400.8L538.2 406.9M525.7 388.8L528.5 394.9M524.2 423.0L526.1 429.8M512.3 394.4L514.1 400.9M505.3 381.7L506.7 388.1M499.5 414.3L500.1 421.3M495.3 438.6L495.6 445.9M492.2 403.3L492.4 410.1M483.4 387.1L482.8 393.7M473.7 406.7L472.6 413.5M473.2 404.2L472.1 410.9M468.4 409.2L467.0 415.9M459.8 402.5L457.7 409.0M451.4 403.0L448.8 409.4M445.6 403.7L442.8 410.0M436.7 379.3L432.8 384.5M426.6 383.6L422.4 388.7" stroke="#ff4a80" stroke-width="1.6" stroke-linecap="round" fill="none" opacity="0.85"/><path d="M489.5 313Q440 215 399 170" stroke="#e8975a" stroke-width="1.20" fill="none" stroke-linecap="round" opacity=".85"/><path d="M489.5 313Q440 215 399 170" stroke="#ffd8a8" stroke-width="1.20" fill="none" stroke-linecap="round" opacity=".9" stroke-dasharray="110 400"/><path d="M489.5 313Q548 222 600.500 189.500" stroke="#e8975a" stroke-width="0.96" fill="none" stroke-linecap="round" opacity=".85"/><path d="M489.5 313Q548 222 600.500 189.500" stroke="#ffd8a8" stroke-width="0.96" fill="none" stroke-linecap="round" opacity=".9" stroke-dasharray="110 400"/><path d="M489.5 313Q535 245 573.500 233.500" stroke="#e8975a" stroke-width="1.60" fill="none" stroke-linecap="round" opacity=".85"/><path d="M489.5 313Q535 245 573.500 233.500" stroke="#ffd8a8" stroke-width="1.60" fill="none" stroke-linecap="round" opacity=".9" stroke-dasharray="110 400"/><path d="M489.5 313Q565 268 632.500 272" stroke="#e8975a" stroke-width="1.28" fill="none" stroke-linecap="round" opacity=".85"/><path d="M489.5 313Q565 268 632.500 272" stroke="#ffd8a8" stroke-width="1.28" fill="none" stroke-linecap="round" opacity=".9" stroke-dasharray="110 400"/><path d="M489.5 313Q560 262 622.500 263.500" stroke="#e8975a" stroke-width="0.96" fill="none" stroke-linecap="round" opacity=".85"/><path d="M489.5 313Q560 262 622.500 263.500" stroke="#ffd8a8" stroke-width="0.96" fill="none" stroke-linecap="round" opacity=".9" stroke-dasharray="110 400"/><path d="M489.5 313Q405 330 323 368.500" stroke="#e8975a" stroke-width="1.20" fill="none" stroke-linecap="round" opacity=".85"/><path d="M489.5 313Q405 330 323 368.500" stroke="#ffd8a8" stroke-width="1.20" fill="none" stroke-linecap="round" opacity=".9" stroke-dasharray="110 400"/><path d="M489.5 313Q450 336 400.500 400" stroke="#e8975a" stroke-width="1.20" fill="none" stroke-linecap="round" opacity=".85"/><path d="M489.5 313Q450 336 400.500 400" stroke="#ffd8a8" stroke-width="1.20" fill="none" stroke-linecap="round" opacity=".9" stroke-dasharray="110 400"/><path d="M489.5 313Q488 365 487 416" stroke="#e8975a" stroke-width="1.60" fill="none" stroke-linecap="round" opacity=".85"/><path d="M489.5 313Q488 365 487 416" stroke="#ffd8a8" stroke-width="1.60" fill="none" stroke-linecap="round" opacity=".9" stroke-dasharray="110 400"/><path d="M489.5 313Q517 352 549 410" stroke="#e8975a" stroke-width="1.20" fill="none" stroke-linecap="round" opacity=".85"/><path d="M489.5 313Q517 352 549 410" stroke="#ffd8a8" stroke-width="1.20" fill="none" stroke-linecap="round" opacity=".9" stroke-dasharray="110 400"/><path d="M489.5 313Q462 280 427.500 284.500" stroke="#e8975a" stroke-width="1.76" fill="none" stroke-linecap="round" opacity=".85"/><path d="M489.5 313Q462 280 427.500 284.500" stroke="#ffd8a8" stroke-width="1.76" fill="none" stroke-linecap="round" opacity=".9" stroke-dasharray="110 400"/><path d="M489.5 313Q500 268 515 225.500" stroke="#e8975a" stroke-width="0.96" fill="none" stroke-linecap="round" opacity=".85"/><path d="M489.5 313Q500 268 515 225.500" stroke="#ffd8a8" stroke-width="0.96" fill="none" stroke-linecap="round" opacity=".9" stroke-dasharray="110 400"/><path d="M489.5 313Q466 288 434 291" stroke="#e8975a" stroke-width="1.04" fill="none" stroke-linecap="round" opacity=".85"/><path d="M489.5 313Q466 288 434 291" stroke="#ffd8a8" stroke-width="1.04" fill="none" stroke-linecap="round" opacity=".9" stroke-dasharray="110 400"/><path d="M489.5 313Q440 322 376 346" stroke="#e8975a" stroke-width="0.72" fill="none" stroke-linecap="round" opacity=".85"/><path d="M489.5 313Q440 322 376 346" stroke="#ffd8a8" stroke-width="0.72" fill="none" stroke-linecap="round" opacity=".9" stroke-dasharray="110 400"/><circle cx="489.500" cy="313" r="9" fill="#ff6a80" opacity=".35"/><circle cx="489.500" cy="313" r="4.500" fill="#ff7a80" opacity=".7"/><circle cx="489.500" cy="313" r="2.200" fill="#fff0e0"/></g><g clip-path="url(#cBG)"><circle cx="958" cy="335" r="125" fill="url(#gGlow)" opacity=".3"/><path d="M1058.8 352.1L1066.9 354.4L1070.6 355.5M1041.6 378.0L1054.2 386.0L1061.8 391.0M1014.8 415.3L1020.6 424.5L1023.4 429.2M1003.3 412.2L1011.1 427.0L1015.8 436.3M1012.7 434.9L1018.1 445.9L1020.8 451.7M980.6 431.1L984.3 448.7L986.6 459.8M970.4 427.8L972.7 446.7L974.1 458.9M950.5 431.2L949.2 450.1L948.3 462.3M914.8 431.2L910.9 440.8L909.1 445.4M903.2 424.2L898.0 433.8L895.5 438.5M901.4 413.3L892.1 427.9L886.3 437.1M868.6 368.1L857.3 373.6L850.9 376.8M866.3 329.5L853.8 330.1L846.6 330.7M871.7 312.7L860.4 311.1L853.9 310.3M873.8 309.6L860.1 307.1L851.6 305.8M881.7 279.5L873.2 274.6L868.5 272.0M907.6 261.8L903.4 256.6L901.5 254.3M913.3 253.9L909.7 248.3L908.1 245.8M949.1 255.7L947.5 243.1L946.5 235.5M995.6 256.9L1001.8 245.9L1005.7 239.2M996.7 266.1L1003.7 255.3L1008.1 248.7M1041.2 323.3L1057.0 322.8L1067.1 322.8" stroke="#c03060" stroke-width="1.1" stroke-linecap="round" fill="none" opacity="0.95"/><path d="M1070.6 355.5L1076.1 357.2M1074.0 378.9L1079.4 381.7M971.1 458.2L971.7 464.9M962.1 463.1L962.3 469.9M929.8 458.0L928.4 464.7M899.1 446.9L896.3 453.0M873.2 429.3L869.2 434.4M866.1 409.5L861.5 413.9M861.9 392.9L857.0 396.5M845.8 375.0L840.4 377.6M853.2 365.3L847.8 367.5M846.5 348.2L841.0 349.5M846.6 330.7L841.1 331.1M850.8 325.4L845.4 325.6M851.6 305.8L846.5 305.1M895.6 255.8L892.5 252.5M901.5 254.3L898.6 250.9M940.2 235.4L939.3 231.4M959.4 239.9L959.4 235.7M973.6 236.7L974.3 232.6M994.7 240.5L996.5 236.7M1008.1 248.7L1010.6 245.2M1014.6 252.4L1017.4 249.0M1026.9 259.9L1030.3 256.9M1040.4 268.3L1044.4 265.8M1058.4 300.6L1063.4 299.6M1062.2 309.3L1067.4 308.7M1064.6 330.3L1070.0 330.8M1071.2 338.3L1076.6 339.1" stroke="#f04878" stroke-width="1.6" stroke-linecap="round" fill="none" opacity="0.95"/><path d="M1064.3 354.6L1072.1 357.0L1075.5 358.1M980.1 433.1L983.2 448.4L985.1 457.6M961.6 447.3L962.0 458.0L962.1 463.1M883.0 400.9L874.2 409.9L869.4 414.9M883.7 393.2L872.6 403.3L866.1 409.5M866.7 387.0L858.9 392.5L855.2 395.2M873.8 334.7L860.2 336.0L852.1 337.0M875.6 296.4L867.3 293.6L863.2 292.3M879.5 288.4L872.1 285.0L868.4 283.5M927.6 258.5L922.8 247.8L919.8 241.5M937.3 251.7L935.7 246.0L935.1 243.8M959.2 248.6L959.3 242.5L959.4 239.9M969.9 257.2L972.2 244.5L973.6 236.7M975.7 252.9L977.8 244.3L979.0 239.6M1009.2 259.0L1013.0 254.3L1014.6 252.4M1029.8 286.7L1037.3 282.7L1041.0 280.8M1038.7 291.6L1046.8 288.3L1051.0 286.7M1044.5 303.8L1053.7 301.6L1058.4 300.6M1039.5 329.2L1054.9 329.7L1064.6 330.3M1060.2 345.6L1067.8 347.2L1071.0 348.0" stroke="#3a3078" stroke-width="1.1" stroke-linecap="round" fill="none" opacity="0.95"/><path d="M1075.5 358.1L1081.0 359.9M1072.0 367.6L1077.4 369.8M1066.9 376.6L1072.2 379.3M1061.8 391.0L1066.8 394.4M1056.1 400.5L1061.0 404.4M1050.6 399.7L1055.4 403.7M1056.1 414.0L1060.7 418.4M1032.8 428.4L1036.6 433.7M1023.4 429.2L1026.9 434.7M1020.8 451.7L1023.7 457.8M1004.7 449.9L1007.0 456.2M986.6 459.8L988.0 466.4M974.1 458.9L974.9 465.7M950.7 466.0L950.4 472.9M937.6 469.7L936.6 476.5M912.8 454.9L910.6 461.4M909.1 445.4L906.6 451.6M895.5 438.5L892.3 444.3M858.5 382.5L853.3 385.6M848.3 316.6L843.0 316.4M853.9 310.3L848.8 309.8M863.2 292.3L858.4 290.8M868.5 272.0L864.3 269.8M908.1 245.8L905.7 242.2M912.0 241.9L909.8 238.3M919.8 241.5L917.9 237.7M929.4 237.7L928.0 233.7M1005.7 239.2L1007.9 235.6M1019.7 259.9L1022.8 256.7M1033.2 259.8L1036.7 257.0M1051.0 286.7L1055.6 285.0M1067.1 322.8L1072.4 322.9M1071.0 348.0L1076.5 349.3" stroke="#ff6088" stroke-width="1.6" stroke-linecap="round" fill="none" opacity="0.95"/><path d="M1055.5 361.1L1066.2 365.2L1072.0 367.6M1049.5 367.1L1064.6 374.2L1074.0 378.9M1036.0 387.9L1045.5 395.5L1050.6 399.7M1032.2 408.2L1041.9 419.3L1047.6 425.9M1025.9 418.6L1030.8 425.5L1032.8 428.4M994.5 409.3L1002.1 426.4L1007.0 437.4M968.9 435.5L970.3 449.9L971.1 458.2M872.1 374.6L863.1 379.8L858.5 382.5M857.8 369.4L849.6 373.2L845.8 375.0M857.1 342.7L848.4 344.4L844.3 345.3M896.4 269.3L890.4 264.0L887.3 261.4M1018.9 267.2L1024.3 262.2L1026.9 259.9M1036.3 276.9L1042.7 273.2L1045.7 271.5M1030.0 297.9L1042.7 292.9L1050.6 290.0M1044.6 304.5L1055.2 302.1L1061.3 300.9M1046.9 311.5L1056.9 310.0L1062.2 309.3M1056.2 336.3L1066.1 337.5L1071.2 338.3" stroke="#d83868" stroke-width="1.1" stroke-linecap="round" fill="none" opacity="0.95"/><path d="M1040.3 363.9L1056.5 371.4L1066.9 376.6M1045.4 376.5L1055.3 382.4L1060.6 385.6M1043.7 402.4L1051.9 410.1L1056.1 414.0M999.2 435.0L1002.9 445.0L1004.7 449.9M988.6 426.9L993.2 442.3L996.0 451.6M951.9 442.1L951.2 457.2L950.7 466.0M935.4 431.6L931.9 447.9L929.8 458.0M920.5 432.4L915.6 446.6L912.8 454.9M880.6 419.9L875.4 426.5L873.2 429.3M895.5 398.6L884.2 411.8L877.2 420.2M879.4 380.6L868.3 388.3L861.9 392.9M861.8 352.1L853.7 354.4L850.1 355.5M868.9 343.4L855.0 346.3L846.5 348.2M862.6 317.5L853.1 316.9L848.3 316.6M875.4 285.6L868.9 282.6L866.0 281.4M899.5 283.1L888.7 275.2L881.9 270.4M889.3 271.1L884.0 267.1L881.6 265.3M920.9 257.7L915.3 247.8L912.0 241.9M983.6 247.3L985.9 240.4L987.1 237.0M988.0 255.8L992.2 246.1L994.7 240.5M1015.9 274.5L1026.5 265.3L1033.2 259.8M1029.9 275.2L1036.9 270.6L1040.4 268.3" stroke="#b83060" stroke-width="1.1" stroke-linecap="round" fill="none" opacity="0.95"/><path d="M1060.6 385.6L1065.8 388.8M1049.0 416.9L1053.4 421.5M1047.6 425.9L1051.8 430.8M1036.7 431.1L1040.5 436.4M1015.8 436.3L1018.8 442.2M1007.0 437.4L1009.6 443.5M996.0 451.6L997.9 458.1M985.1 457.6L986.4 464.3M948.3 462.3L947.9 469.2M930.3 457.3L928.9 463.9M922.1 452.1L920.3 458.6M886.3 437.1L882.9 442.7M884.4 429.2L880.8 434.6M877.2 420.2L873.1 425.2M869.4 414.9L865.0 419.6M865.0 404.9L860.3 409.0M855.2 395.2L850.1 398.8M850.9 376.8L845.6 379.5M850.1 355.5L844.6 357.2M844.3 345.3L838.8 346.5M852.1 337.0L846.6 337.8M858.7 298.0L853.8 296.8M868.4 283.5L864.0 281.6M866.0 281.4L861.6 279.5M881.9 270.4L878.1 267.8M881.6 265.3L877.9 262.6M887.3 261.4L883.9 258.4M935.1 243.8L933.9 239.7M946.5 235.5L946.0 231.4M952.9 233.2L952.7 229.1M967.3 239.7L967.8 235.5M979.0 239.6L980.1 235.5M987.1 237.0L988.5 233.0M1045.7 271.5L1049.8 269.3M1041.0 280.8L1045.3 278.6M1050.6 290.0L1055.3 288.4M1061.3 300.9L1066.2 299.9M1066.9 320.0L1072.2 320.0" stroke="#ff80a0" stroke-width="1.6" stroke-linecap="round" fill="none" opacity="0.95"/><path d="M1032.9 382.6L1047.1 393.4L1056.1 400.5M1031.8 399.3L1042.6 410.2L1049.0 416.9M1020.5 409.1L1030.5 422.6L1036.7 431.1M939.3 456.8L938.1 465.9L937.6 469.7M936.2 428.8L932.6 446.2L930.3 457.3M931.1 420.3L925.6 439.5L922.1 452.1M912.8 418.5L904.4 435.7L899.1 446.9M897.8 410.2L889.3 422.1L884.4 429.2M882.8 389.5L871.6 399.0L865.0 404.9M865.0 360.6L856.9 363.8L853.2 365.3M871.0 325.3L858.3 325.3L850.8 325.4M873.6 301.8L863.9 299.2L858.7 298.0M910.4 272.2L901.3 262.0L895.6 255.8M932.6 247.1L930.4 240.7L929.4 237.7M943.6 252.2L941.4 241.6L940.2 235.4M954.0 252.9L953.3 240.6L952.9 233.2M965.5 255.9L966.7 245.6L967.3 239.7M1006.9 273.5L1014.9 264.9L1019.7 259.9M1048.1 320.7L1060.0 320.2L1066.9 320.0" stroke="#a82858" stroke-width="1.1" stroke-linecap="round" fill="none" opacity="0.95"/><path d="M1027.8 345.5L1038.9 348.2L1045.0 349.7M1041.7 361.1L1049.8 364.5L1053.5 366.1M1012.8 418.2L1016.4 424.3L1017.6 426.3M997.9 403.7L1004.3 415.7L1007.9 422.6M998.5 409.6L1002.6 417.9L1004.5 421.7M987.5 402.7L993.1 416.6L996.3 424.9M986.2 413.1L990.1 424.9L992.2 431.3M971.2 426.8L972.7 437.6L973.4 443.0M942.9 417.3L940.6 431.0L939.3 439.0M897.1 386.7L889.7 393.8L886.1 397.3M893.8 380.3L885.5 387.1L881.2 390.7M882.6 355.2L870.5 359.7L863.5 362.4M911.4 284.4L903.0 276.5L898.0 272.0M938.8 266.6L936.3 258.6L935.0 254.6M969.8 259.6L971.1 251.8L971.8 247.9M990.0 268.7L994.9 259.9L997.6 255.0M999.3 267.1L1003.1 261.7L1004.7 259.4M1007.9 282.3L1015.4 275.4L1019.7 271.7M1034.0 334.6L1044.4 335.5L1049.9 336.1M1040.9 336.0L1050.9 337.1L1056.1 337.7" stroke="#a02858" stroke-width="1.0" stroke-linecap="round" fill="none" opacity="0.75"/><path d="M1045.0 349.7L1050.5 351.2M1044.3 385.1L1049.2 388.5M1036.0 393.1L1040.7 397.1M1032.7 399.9L1037.1 404.3M1018.5 414.4L1022.1 419.6M1007.9 422.6L1010.8 428.4M996.3 424.9L998.7 430.9M992.2 431.3L994.2 437.6M977.9 438.6L979.0 445.2M973.4 443.0L974.2 449.6M964.2 435.9L964.5 442.5M952.1 438.7L951.7 445.3M943.8 433.3L943.0 439.8M939.3 439.0L938.2 445.5M922.9 425.8L920.7 431.9M908.3 413.3L905.1 418.8M901.2 422.0L898.0 427.6M886.1 397.3L881.7 401.7M881.2 390.7L876.5 394.6M863.5 362.4L858.1 364.5M871.8 329.7L866.4 330.0M867.1 318.4L861.8 318.0M876.2 300.3L871.4 298.8M878.2 288.1L873.8 286.1M895.0 282.5L891.0 279.7M897.0 273.5L893.5 270.4M917.4 266.6L914.8 262.8M925.8 259.9L923.8 255.8M935.0 254.6L933.6 250.4M937.8 250.7L936.6 246.5M971.8 247.9L972.6 243.7M992.0 257.4L994.0 253.4M1004.7 259.4L1007.4 255.7M1010.9 268.2L1014.1 264.8M1029.1 289.0L1033.5 286.7M1041.5 297.2L1046.2 295.7M1038.7 303.7L1043.6 302.3M1045.6 316.5L1050.8 316.0M1043.2 327.9L1048.6 328.0" stroke="#f05080" stroke-width="1.3" stroke-linecap="round" fill="none" opacity="0.75"/><path d="M1047.2 352.9L1056.7 355.8L1061.4 357.4M1041.7 363.6L1051.7 368.1L1056.9 370.6M1043.2 374.9L1049.5 378.5L1051.8 379.9M1028.3 386.5L1033.9 391.3L1036.0 393.1M1022.7 390.2L1029.6 396.8L1032.7 399.9M1004.1 393.8L1013.1 406.5L1018.5 414.4M982.9 420.2L985.2 428.9L986.2 432.6M963.1 418.1L963.8 429.8L964.2 435.9M912.3 403.6L905.2 415.3L901.2 422.0M911.2 393.4L904.9 402.2L901.7 406.6M887.3 371.3L879.7 376.0L876.2 378.2M874.6 342.7L865.8 344.3L861.6 345.2M886.7 329.5L876.9 329.6L871.8 329.7M865.2 326.8L858.5 327.0L856.0 327.1M887.9 312.2L877.6 309.8L871.9 308.7M920.4 286.3L914.1 279.0L910.7 275.2M948.1 254.5L947.1 247.6L946.6 244.3M954.1 269.4L953.4 258.2L953.0 251.8M975.3 267.1L977.4 259.7L978.4 256.2M1020.0 284.4L1025.4 280.7L1027.6 279.2M1012.6 298.1L1023.0 292.3L1029.1 289.0M1027.0 295.1L1035.2 291.3L1039.4 289.5" stroke="#c83060" stroke-width="1.0" stroke-linecap="round" fill="none" opacity="0.75"/><path d="M1061.4 357.4L1066.9 359.2M1053.5 366.1L1058.9 368.4M1056.9 370.6L1062.3 373.1M1051.8 379.9L1057.0 383.0M1039.5 388.6L1044.4 392.4M1031.2 414.1L1035.2 419.0M1017.6 426.3L1020.9 431.9M1004.5 421.7L1007.3 427.5M986.2 432.6L987.8 438.9M933.1 421.8L931.5 428.1M928.6 432.5L926.9 438.8M908.2 430.3L905.5 436.2M901.7 406.6L898.0 411.8M881.5 416.3L877.5 421.2M877.3 397.4L872.6 401.6M876.2 378.2L871.1 381.4M869.0 377.0L863.8 380.1M867.8 368.8L862.5 371.4M855.6 356.9L850.1 358.7M861.6 345.2L856.1 346.4M872.4 336.8L866.9 337.5M856.0 327.1L850.6 327.3M871.9 308.7L866.8 307.7M880.7 305.9L875.7 304.6M879.1 287.3L874.7 285.2M898.0 272.0L894.5 268.9M910.7 275.2L907.5 271.7M921.6 259.7L919.4 255.7M946.6 244.3L946.0 240.0M953.0 251.8L952.7 247.4M964.4 255.6L964.8 251.2M978.4 256.2L979.7 251.9M979.3 256.3L980.6 252.0M997.6 255.0L999.8 251.1M1019.7 271.7L1023.2 268.6M1023.0 273.4L1026.7 270.5M1027.6 279.2L1031.7 276.6M1039.4 289.5L1043.9 287.5M1039.8 314.5L1045.0 313.8M1049.9 336.1L1055.4 336.8M1056.1 337.7L1061.6 338.5" stroke="#ff7090" stroke-width="1.3" stroke-linecap="round" fill="none" opacity="0.75"/><path d="M1032.6 377.2L1040.5 382.5L1044.3 385.1M1025.1 406.6L1029.6 412.2L1031.2 414.1M953.4 413.9L952.6 429.4L952.1 438.7M935.7 412.3L933.8 419.3L933.1 421.8M930.6 404.3L925.7 417.8L922.9 425.8M919.3 394.6L912.3 406.4L908.3 413.3M866.0 353.7L858.6 355.9L855.6 356.9M883.7 320.0L873.0 318.9L867.1 318.4M888.7 308.2L882.8 306.5L880.7 305.9M890.4 294.0L882.4 290.1L878.2 288.1M910.9 285.9L902.2 278.0L897.0 273.5M930.2 275.8L924.8 265.6L921.6 259.7M941.0 262.8L938.9 254.8L937.8 250.7M963.4 266.4L964.1 259.1L964.4 255.6M984.3 273.3L989.2 263.2L992.0 257.4M1008.7 285.3L1017.7 277.7L1023.0 273.4M1027.5 302.2L1036.6 298.9L1041.5 297.2M1025.3 307.7L1034.1 305.0L1038.7 303.7M1029.7 318.5L1040.0 317.1L1045.6 316.5M1026.9 328.0L1037.5 327.9L1043.2 327.9" stroke="#b02c5c" stroke-width="1.0" stroke-linecap="round" fill="none" opacity="0.75"/><path d="M1032.6 383.4L1037.9 387.4L1039.5 388.6M973.8 416.0L976.4 430.3L977.9 438.6M946.8 411.0L944.9 425.1L943.8 433.3M931.8 421.0L929.5 429.2L928.6 432.5M916.5 413.1L911.1 424.2L908.2 430.3M887.8 408.7L883.1 414.3L881.5 416.3M891.0 385.4L882.0 393.2L877.3 397.4M877.4 372.2L871.2 375.7L869.0 377.0M879.1 363.5L871.3 367.1L867.8 368.8M885.8 335.5L876.8 336.4L872.4 336.8M892.1 305.6L881.9 302.1L876.2 300.3M891.9 293.6L883.5 289.4L879.1 287.3M909.8 293.4L900.5 286.4L895.0 282.5M921.2 272.4L918.3 268.1L917.4 266.6M932.9 275.0L928.4 265.3L925.8 259.9M976.5 265.6L978.4 259.1L979.3 256.3M1000.9 279.5L1007.4 272.1L1010.9 268.2M1021.3 317.8L1033.0 315.6L1039.8 314.5" stroke="#3a3080" stroke-width="1.0" stroke-linecap="round" fill="none" opacity="0.75"/><path d="M1008.8 338.6L1017.2 339.7L1021.1 340.2M1017.6 353.4L1026.8 356.8L1031.4 358.6M1020.8 355.1L1027.4 357.6L1029.9 358.6M1005.1 368.1L1015.3 376.0L1021.1 380.6M1005.4 374.6L1010.5 379.2L1012.3 380.9M1002.9 385.6L1010.1 394.3L1013.9 399.0M995.7 389.0L1001.0 397.2L1003.6 401.2M993.5 398.8L999.1 409.7L1002.2 415.6M975.0 382.5L977.4 389.8L978.4 392.6M967.8 376.0L970.5 388.1L972.0 394.9M949.4 390.7L947.7 402.5L946.7 409.0M930.2 399.5L925.9 410.3L923.6 416.0M933.9 387.8L929.0 399.3L926.3 405.7M922.8 385.8L917.0 394.6L914.1 399.2M887.9 317.3L882.6 316.3L881.1 316.0M908.1 311.5L900.5 308.4L897.0 307.0M916.2 292.9L908.2 285.7L903.7 281.7M940.2 289.0L936.2 279.2L933.9 273.8M949.5 277.9L948.2 269.3L947.5 265.0M972.9 291.9L976.7 281.6L978.8 275.9M1002.2 303.1L1008.9 298.7L1012.0 296.7" stroke="#802858" stroke-width="1.0" stroke-linecap="round" fill="none" opacity="0.5"/><path d="M1021.1 340.2L1026.6 341.0M1031.4 358.6L1036.7 360.7M1029.9 358.6L1035.2 360.8M1019.9 373.0L1024.7 376.3M1021.1 380.6L1025.7 384.3M1012.3 380.9L1016.7 385.0M1013.9 399.0L1017.7 403.8M1003.6 401.2L1006.9 406.3M1002.2 415.6L1005.0 421.2M978.4 392.6L980.3 398.4M972.0 394.9L973.4 400.8M971.0 419.0L971.9 425.2M961.1 412.7L961.3 418.9M946.7 409.0L945.8 415.1M936.6 413.0L935.0 419.0M923.6 416.0L921.3 421.8M926.3 405.7L923.9 411.4M914.1 399.2L910.8 404.4M905.3 389.1L901.3 393.6M898.1 384.5L893.7 388.5M894.2 382.4L889.6 386.2M894.5 365.0L889.4 367.8M892.0 357.3L886.7 359.5M886.8 351.6L881.4 353.3M878.6 341.0L873.1 341.8M886.2 332.2L880.7 332.3M883.8 330.3L878.4 330.4M881.1 316.0L875.8 315.2M897.0 307.0L892.1 305.1M888.3 302.1L883.5 300.2M896.6 285.0L892.6 282.2M903.7 281.7L900.0 278.4M921.9 285.3L918.8 281.4M926.0 278.1L923.4 273.9M933.9 273.8L932.0 269.3M935.8 269.5L934.2 265.0M947.5 265.0L946.7 260.3M956.0 276.2L955.8 271.4M963.2 263.1L963.6 258.4M980.4 268.9L982.0 264.4M978.8 275.9L980.5 271.3M991.2 273.3L993.7 269.1M999.5 276.4L1002.5 272.6M1001.5 295.8L1005.4 292.6M1012.0 296.7L1016.3 294.0M1014.0 303.8L1018.6 301.6M1020.6 307.0L1025.5 305.2M1018.6 319.2L1023.8 318.2M1036.8 327.8L1042.2 327.7M1021.3 332.9L1026.8 333.1" stroke="#c03868" stroke-width="1.2" stroke-linecap="round" fill="none" opacity="0.5"/><path d="M1008.1 365.1L1016.0 370.3L1019.9 373.0M968.7 402.9L970.2 413.6L971.0 419.0M960.3 392.6L960.8 405.4L961.1 412.7M905.2 346.5L893.5 349.7L886.8 351.6M903.4 332.0L892.3 332.0L886.2 332.2M895.2 330.4L887.3 330.4L883.8 330.3M931.8 298.2L925.4 289.8L921.9 285.3M934.2 291.9L928.9 282.9L926.0 278.1M938.7 277.6L936.6 271.8L935.8 269.5M956.6 292.8L956.2 282.1L956.0 276.2M962.0 279.4L962.8 268.9L963.2 263.1M983.7 286.5L988.6 277.9L991.2 273.3M989.5 289.7L995.9 281.1L999.5 276.4M991.7 304.1L998.3 298.5L1001.5 295.8M1006.1 307.8L1011.8 304.9L1014.0 303.8M1007.1 312.3L1016.0 308.8L1020.6 307.0M1008.0 321.5L1015.4 319.9L1018.6 319.2M1005.0 332.8L1015.6 332.8L1021.3 332.9" stroke="#2e2a70" stroke-width="1.0" stroke-linecap="round" fill="none" opacity="0.5"/><path d="M941.5 394.3L938.3 406.3L936.6 413.0M911.7 382.0L907.0 387.3L905.3 389.1M911.7 372.5L902.9 380.2L898.1 384.5M909.1 370.4L899.5 378.0L894.2 382.4M910.1 356.9L900.0 362.1L894.5 365.0M903.1 353.0L895.4 356.0L892.0 357.3M894.6 338.9L884.2 340.2L878.6 341.0M896.4 305.4L890.5 303.0L888.3 302.1M910.4 295.2L901.6 288.7L896.6 285.0M975.9 281.3L978.8 273.0L980.4 268.9M1029.0 328.0L1034.9 327.9L1036.8 327.8" stroke="#3a3488" stroke-width="1.0" stroke-linecap="round" fill="none" opacity="0.5"/><path d="M862.2 395.1L852.1 389.4M867.8 437.6L857.2 441.4M880.1 390.4L873.4 382.0M899.5 384.9L898.2 379.4M891.6 453.5L887.2 462.5M935.8 388.6L942.5 380.4M889.6 401.4L885.4 396.6M870.6 458.9L863.1 467.3M878.8 458.5L870.0 469.7M888.6 408.1L883.3 402.8M944.9 466.3L952.4 473.6M869.8 392.1L860.9 383.4M952.0 418.4L958.6 418.0M931.9 398.6L939.3 392.5M859.0 457.2L852.0 462.1M875.9 398.4L868.3 391.0M870.2 434.3L856.6 437.3M926.7 448.7L932.3 455.1M888.2 403.4L884.3 399.2M882.4 462.1L877.8 469.1M905.4 377.3L905.2 368.9M868.5 393.0L861.4 387.3M905.2 385.5L905.0 376.3M888.9 389.5L885.0 382.9M856.5 417.4L844.9 416.2M936.9 451.9L945.9 459.4M938.8 387.0L944.8 379.5M878.1 422.6L866.7 421.8M956.9 439.2L968.0 442.6M927.8 472.0L932.3 481.2" stroke="#e02040" stroke-width="1.3" stroke-linecap="round" fill="none" opacity="1.0"/><path d="M950.4 440.7L962.3 444.4M942.2 433.6L949.5 435.5M872.8 443.1L867.2 447.4M927.7 463.7L933.6 474.2M914.8 476.3L917.0 490.2M897.0 382.3L895.9 373.3M942.3 396.0L951.7 388.2M906.7 443.0L908.2 453.4M863.8 424.8L856.1 425.3M869.8 424.3L863.0 424.9M941.0 408.6L951.2 403.4M879.3 389.3L872.2 381.2M923.6 412.4L929.6 408.5M940.8 412.7L951.0 408.6M909.4 468.1L909.7 479.2M890.6 399.1L883.9 388.7M907.8 454.3L908.9 466.0M852.8 425.4L841.9 425.4M858.3 402.3L849.0 398.2M883.2 429.8L874.6 432.8M952.4 437.4L960.1 439.6M898.3 446.3L894.1 458.6M936.4 401.6L944.0 395.5M851.8 438.1L841.2 441.3M881.3 445.0L871.4 453.3M886.2 472.7L880.9 485.4" stroke="#c02848" stroke-width="1.3" stroke-linecap="round" fill="none" opacity="1.0"/><path d="M948.7 401.8L958.2 396.0M943.5 409.7L954.7 405.8M893.3 375.5L891.7 369.2M927.9 419.9L940.5 418.1M915.6 447.6L919.4 456.1M885.5 446.7L877.3 455.4M896.7 463.7L894.6 476.7M865.9 413.1L857.2 411.0M946.4 463.1L954.5 470.2M955.6 420.6L963.9 420.1M906.5 451.4L908.1 466.0M931.5 425.7L940.1 426.9M956.7 418.0L963.2 417.9M878.6 413.7L868.0 410.1M870.9 439.0L859.3 443.3M934.4 418.3L943.5 417.5M885.1 474.8L880.2 486.3M885.0 441.5L876.6 449.6M954.4 437.4L967.0 439.9M936.6 427.1L944.7 428.6M930.0 428.9L943.2 432.5M911.5 478.1L913.9 491.3M922.3 472.7L926.2 485.5M920.6 469.1L922.9 476.6M921.9 436.1L930.8 442.0M876.7 399.2L872.2 395.4M884.6 474.8L880.4 485.8" stroke="#ff3050" stroke-width="1.3" stroke-linecap="round" fill="none" opacity="1.0"/><path d="M928.2 395.1L935.3 385.2M860.3 445.1L853.0 449.3M909.0 377.5L910.6 364.6M910.0 411.0L913.2 402.2M936.5 409.6L947.4 405.3M916.8 386.3L919.1 380.8M887.2 382.6L882.4 372.6M859.5 444.5L853.0 447.4M917.5 407.4L921.6 403.0M895.5 458.4L890.8 472.0M873.4 464.5L868.5 470.7M903.9 439.1L903.5 446.9M938.2 405.9L943.5 403.2M874.1 419.0L864.4 417.5M935.8 468.1L943.7 480.2M921.4 481.5L924.6 491.6M933.4 431.9L942.4 435.0M909.0 394.6L909.9 383.0M872.9 401.8L864.6 396.5M904.1 471.5L904.4 480.3M865.6 441.2L855.8 445.3M948.6 396.7L954.3 392.8M872.1 462.8L865.8 470.3M873.3 392.3L863.7 383.4M909.9 440.0L912.9 450.9M930.4 401.2L939.5 392.4M943.2 452.5L953.2 459.4M865.4 393.9L859.5 390.0M919.4 441.2L926.2 449.1M871.1 453.1L864.2 459.0M875.9 433.3L869.1 436.0M856.0 444.6L843.2 449.9M944.6 459.9L951.6 466.0M854.6 424.3L843.1 423.5M914.8 428.8L922.3 432.3M863.7 396.0L852.8 388.8M918.9 396.3L922.5 389.1" stroke="#4a50c0" stroke-width="1.3" stroke-linecap="round" fill="none" opacity="1.0"/><circle cx="905" cy="428" r="14" fill="url(#gOr)" opacity=".6"/><path d="M790 519Q840 513 900 511" stroke="#8a5a28" stroke-width="1.200" fill="none" opacity=".55"/><path d="M790 519Q840 513 900 511" stroke="#d89040" stroke-width="1.200" fill="none" stroke-dasharray="1 5" opacity=".7"/><rect x="887.500" y="468" width="3" height="62" fill="#5a3018" opacity=".45"/><rect x="830" y="524" width="3" height="14" fill="#7a4018" opacity=".45"/><rect x="886" y="526" width="5" height="16" fill="#7a4018" opacity=".5"/><ellipse cx="850" cy="470" rx="90" ry="80" fill="url(#gBr)" opacity=".5"/><path d="M795 545h105" stroke="#c8b090" stroke-width="1" stroke-dasharray="1 9" opacity=".6"/><rect x="788" y="552" width="317" height="250" fill="url(#gRH)"/><rect x="788" y="552" width="317" height="250" fill="url(#gRV)"/><path d="M850 659.8h26M877 577.7h22M870 740.5h25M875 750.6h6M842 766.2h8M865 641.0h12M851 669.0h10M877 728.3h6M842 767.6h12M890 741.5h26M868 762.7h25M889 745.6h27M863 778.4h15M889 736.0h21M834 652.6h8M893 765.6h6M873 654.6h16M890 586.3h19M863 641.9h13M892 712.3h18M854 643.5h23M855 733.9h25M900 704.0h25M861 589.7h5M846 780.5h10M895 691.7h19M876 760.6h18M870 674.2h6M900 603.2h9M866 637.6h21M886 596.8h18M856 587.4h26M841 733.6h19M859 591.6h12M866 788.2h26M883 680.6h5M872 762.3h13M893 753.8h9M875 578.8h24M870 599.3h6M865 586.9h25M880 758.0h21M862 621.2h8M841 620.9h15M840 581.5h20M846 704.9h10M834 710.1h22M893 747.6h9M868 743.3h10M846 751.7h9M898 762.6h21M862 598.6h18M889 621.4h14M864 684.8h5M891 761.9h25M859 695.3h12M845 611.9h17M881 662.8h27M891 624.0h13M852 668.7h19M840 670.8h18M851 601.8h14M884 755.6h18M849 676.7h16M866 676.4h16M855 625.1h13M837 590.0h21M879 647.1h23M863 713.8h23M833 692.8h22" stroke="#000" stroke-width="1.200" opacity=".3"/></g><g clip-path="url(#cL2)"><ellipse cx="735" cy="490" rx="85" ry="85" fill="url(#gBr)"/><path d="M724.9 416.2L718.1 417.5M726.0 401.5L721.7 398.8M732.9 429.9L728.2 436.6M742.2 430.2L741.4 438.0M731.5 418.6L724.9 421.5M762.8 430.7L766.7 434.8M721.4 421.2L715.3 423.8M755.1 398.0L758.6 392.7M758.9 432.5L762.3 438.3M743.0 405.1L740.8 399.6M749.9 435.1L751.1 440.5M728.0 423.0L723.6 426.5" stroke="#7a5a90" stroke-width="0.9" stroke-linecap="round" fill="none" opacity="0.6"/><path d="M734.8 403.1L730.2 398.9M735.3 399.3L732.9 395.9M727.2 397.7L722.7 394.5M768.8 416.2L773.0 417.4M739.2 426.9L737.4 432.9M754.8 410.9L758.9 410.5M734.4 433.5L732.2 438.2M757.6 435.3L761.1 442.1M724.5 420.7L717.2 423.4M722.4 414.0L717.8 414.5M737.6 429.7L735.3 434.7M761.3 393.9L765.3 389.9M730.4 433.4L726.2 440.0M736.3 415.4L732.2 417.2M731.0 435.0L728.6 439.6M758.8 436.0L761.2 441.1M731.0 398.2L725.9 393.3M739.6 392.7L737.9 387.8M750.6 432.7L751.5 437.5" stroke="#6a6a8a" stroke-width="0.9" stroke-linecap="round" fill="none" opacity="0.6"/><path d="M757.9 408.3L763.2 407.4M757.0 423.5L761.7 428.3M754.1 433.0L756.4 439.8M767.6 412.2L772.8 412.6M750.6 396.2L752.6 390.7M742.9 425.0L741.7 432.9M761.9 422.6L766.9 425.4M747.7 391.0L748.2 385.0M749.6 434.4L751.7 442.1M747.2 432.6L747.5 440.4M766.5 401.1L771.7 399.0M761.3 424.9L767.9 429.8M741.3 420.9L739.7 425.9M727.6 418.0L720.6 420.0" stroke="#506a60" stroke-width="0.9" stroke-linecap="round" fill="none" opacity="0.6"/><path d="M759.7 414.7L763.8 415.9M764.7 406.5L771.8 404.0M725.7 423.7L719.8 427.7M747.8 439.6L748.4 448.0M731.4 411.6L727.2 411.6M742.5 394.4L742.0 387.1M724.3 428.7L719.7 433.0M751.3 397.2L754.1 391.9M730.1 394.5L726.8 391.2M721.6 417.5L716.6 418.5M757.0 432.6L760.4 438.3M758.7 401.1L765.0 396.9M728.4 413.0L723.0 413.4M719.9 416.9L715.1 417.7M731.2 430.0L727.6 434.2" stroke="#8a80a0" stroke-width="0.9" stroke-linecap="round" fill="none" opacity="0.6"/><circle cx="705" cy="450" r="52" fill="url(#gRed)" opacity=".95"/><path d="M687.9 414.7L683.8 405.5M741.2 442.8L748.3 442.3M673.6 449.2L663.4 450.1M711.0 431.1L713.1 425.5M676.1 440.5L668.2 439.0M689.8 452.8L679.0 454.5M705.8 473.2L706.2 481.0M696.4 421.7L694.4 417.0M743.8 450.6L753.2 451.5M669.4 474.0L664.9 478.1M717.1 463.0L722.3 469.6M693.5 419.1L689.3 410.1M700.8 431.1L699.5 424.9M714.2 460.1L719.4 466.6M748.6 450.8L755.9 450.9M703.2 430.8L702.2 424.9M708.7 488.0L709.8 497.3M714.9 426.7L718.4 418.7M724.0 423.5L728.3 418.5M744.0 448.0L753.5 448.4M689.5 492.2L686.7 501.9M686.0 423.9L682.0 419.2M696.4 485.6L693.7 495.6M721.2 419.5L723.8 415.5M673.3 432.3L666.3 429.3M675.5 484.1L671.8 488.6M719.8 474.7L723.0 481.6M697.9 487.7L696.2 498.6M670.4 467.5L660.7 473.1M711.6 439.5L716.6 431.2M668.7 476.3L662.5 481.3M670.7 461.1L664.4 463.6M731.2 466.2L739.8 472.8M698.7 419.0L697.1 413.8M674.2 477.6L669.3 483.1M720.9 473.0L727.4 481.7M732.0 435.2L739.8 430.6M678.9 422.5L673.6 417.0M734.1 441.4L742.4 439.9M681.2 437.4L675.6 434.9M743.8 444.6L754.5 443.1M696.2 458.6L689.0 466.7M681.7 459.1L676.6 461.7M730.7 432.3L736.0 428.6M683.2 460.8L677.0 464.4M711.5 435.2L714.0 429.0M725.9 426.5L730.8 421.3M668.6 477.2L661.8 482.5M745.0 465.4L753.7 468.7M731.3 459.2L740.0 462.2M744.3 448.1L752.8 447.5M720.9 483.6L724.6 493.5M665.5 446.3L660.2 446.7M732.2 464.9L741.7 470.6M721.4 435.6L725.5 433.1M730.9 435.3L735.7 433.1M693.8 417.7L691.0 411.2M717.7 424.7L721.5 416.4M674.5 458.1L668.4 460.0M711.0 420.8L712.6 413.7M681.5 482.9L675.5 492.6M719.6 488.5L721.8 494.3M671.4 455.5L661.0 456.7M736.9 477.2L744.5 483.6M691.1 423.8L687.0 414.8M668.2 476.1L663.9 479.8M661.3 452.3L653.3 452.9M707.7 462.7L709.5 470.4M711.2 419.1L713.3 412.0M694.4 487.2L692.3 495.6M700.3 418.8L699.2 409.0M705.2 479.0L705.5 486.7M691.6 414.0L688.2 406.7M665.5 465.1L658.8 467.5M673.2 477.1L665.4 483.9M699.6 477.7L698.1 484.0M730.7 432.0L735.0 430.0M724.0 471.5L730.7 480.0M684.7 457.6L679.5 460.0M679.4 422.2L674.2 415.7M693.2 426.4L689.2 418.9M674.4 485.4L668.6 493.2M709.4 475.8L710.5 481.9M731.9 442.4L740.2 440.6M686.4 486.8L682.1 496.7M732.2 455.8L737.3 457.2M739.3 469.5L745.8 473.2M675.7 471.4L667.4 478.3M671.6 465.2L663.0 469.1M718.9 449.0L728.9 448.8M738.5 437.6L744.2 435.7M703.8 416.2L703.8 406.6M739.9 466.2L744.6 469.2M694.8 476.0L690.7 486.7M695.2 494.5L693.8 500.4M738.2 430.2L742.3 428.3M713.0 420.3L714.8 411.4M666.8 432.6L658.7 428.4M745.6 458.4L755.0 460.5M721.0 437.9L727.2 433.9M709.2 418.3L710.6 410.1M731.5 434.9L738.3 431.9M713.2 426.3L716.0 418.7M709.6 477.8L710.3 486.7M712.9 415.5L714.3 406.8M673.4 425.4L665.0 419.8M729.4 482.9L734.8 490.1M661.6 452.2L651.3 452.9M696.9 496.9L695.9 502.9M721.9 458.0L732.1 462.8" stroke="#ff3050" stroke-width="1.3" stroke-linecap="round" fill="none" opacity="1.0"/><path d="M700.5 497.2L700.1 503.7M693.2 420.7L690.9 414.9M739.3 479.3L744.4 484.5M704.3 472.5L704.5 479.4M662.8 442.3L652.5 441.1M694.0 427.8L691.9 423.5M721.7 479.1L725.2 485.1M728.8 487.7L732.1 493.2M687.4 492.2L682.8 501.8M664.7 469.2L655.4 473.2M683.6 480.1L676.8 489.7M685.0 449.7L678.4 450.3M688.2 434.5L684.7 431.8M706.4 488.2L707.3 496.4M733.5 462.0L739.4 465.3M688.2 446.1L682.3 445.9M723.5 472.6L729.5 480.4M728.1 442.0L734.4 441.0M726.9 486.0L731.4 493.1M715.8 495.5L718.4 505.0M724.3 431.6L730.7 425.2M724.8 481.0L730.6 489.4M675.4 426.0L668.6 420.3M691.9 427.6L687.0 420.2M688.3 493.9L684.5 502.4M747.9 451.2L754.4 452.1M711.8 430.8L713.9 423.8M731.1 453.9L740.3 455.6M669.9 428.0L661.2 423.2M663.9 459.2L655.9 461.7M740.7 477.8L747.1 482.6M720.7 437.4L727.8 431.2M695.9 418.5L693.6 410.1M693.8 483.6L691.1 491.4M674.1 453.5L668.5 454.6M663.9 442.4L655.9 440.6M716.3 417.4L719.0 411.3M740.7 445.6L748.5 445.3M707.3 482.0L707.5 489.4M722.0 431.5L726.0 427.2M718.2 427.6L723.6 419.9M662.1 459.8L656.2 461.3M726.7 429.6L733.7 422.2M691.9 465.6L688.2 470.7M704.8 413.8L705.0 404.2M685.0 462.4L675.7 468.5M740.5 433.6L746.2 430.9M693.4 489.9L691.0 497.6M684.7 440.3L676.2 437.4M684.8 427.0L678.7 419.6M724.3 474.4L730.3 482.0M683.2 448.7L676.0 449.1M716.1 421.6L718.2 416.4M664.5 446.2L659.3 446.5M687.4 462.9L679.7 469.7M702.4 476.8L701.4 485.5M738.6 477.3L745.6 482.7M706.5 423.9L706.6 415.5M691.4 422.6L687.6 416.8M686.1 458.2L677.3 462.9M685.2 423.0L681.0 417.2M688.4 423.9L683.8 415.7M731.0 480.8L734.5 485.4M688.2 484.5L685.6 490.6M683.7 442.6L677.4 440.9M694.8 489.8L693.0 496.8M669.3 449.8L663.5 450.2M721.7 461.6L727.4 466.3M739.7 457.6L749.9 459.3M728.5 440.5L734.0 439.1M682.7 450.1L672.4 450.4M733.0 421.7L739.3 415.5M665.8 463.3L659.0 466.2M727.7 468.4L731.9 472.7M692.1 418.0L689.0 412.1M696.3 495.3L694.6 502.2M666.2 445.5L660.3 445.3M677.6 485.2L671.7 493.1M680.4 479.2L674.7 486.6M662.8 444.5L656.4 444.5M746.9 445.7L754.9 444.9M675.9 472.8L669.5 478.8M717.6 494.0L720.0 505.3M679.6 485.6L676.4 490.6M701.4 482.2L700.1 493.4M734.5 443.6L740.6 443.0M748.7 454.5L756.2 455.9M672.9 479.6L667.3 485.0M732.6 439.3L737.5 437.7M716.4 461.7L722.8 469.4M719.6 453.4L725.2 455.9M702.0 485.9L701.7 492.2M708.9 479.1L710.1 490.4M670.7 432.9L664.2 430.8M728.4 451.9L736.7 452.8M683.1 431.2L678.9 428.8M664.2 447.1L654.8 447.1M744.3 470.4L749.0 473.5M677.1 461.4L672.2 464.1M709.5 480.1L710.4 486.8M697.5 463.2L692.0 473.5M735.9 441.6L745.8 440.0M669.0 450.7L658.9 450.4M738.2 444.9L743.6 444.9" stroke="#d81838" stroke-width="1.3" stroke-linecap="round" fill="none" opacity="1.0"/><path d="M710.5 439.5L713.0 434.8M748.9 452.3L757.6 453.2M672.9 462.2L662.8 466.1M701.7 465.3L700.5 471.4M696.8 420.9L695.3 416.6M713.5 427.5L715.4 421.8M675.2 454.2L668.6 455.7M696.8 495.5L695.1 506.5M707.2 469.9L707.8 480.2M689.5 418.7L686.2 412.4M669.2 437.2L662.6 435.3M723.0 490.0L727.1 498.0M667.1 468.5L658.6 472.8M740.8 476.9L747.7 482.6M679.6 475.8L674.0 481.4M705.5 491.0L706.0 499.4M688.3 465.2L683.6 470.0M709.3 476.7L711.2 487.8M738.7 430.7L743.6 427.9M703.2 485.4L703.1 492.3M727.4 429.6L734.0 424.8M691.6 495.2L689.4 503.1M727.9 475.6L731.7 480.1M731.5 484.2L736.6 490.7M733.9 434.9L741.4 431.6M676.2 472.8L669.9 478.8M693.9 431.1L691.1 426.9M726.2 463.2L734.9 470.1M736.1 475.5L743.0 481.5M718.9 417.6L722.3 411.0M670.6 459.8L660.3 462.6M714.4 427.2L718.2 420.0M737.0 451.5L746.8 452.5M719.9 451.3L729.6 452.8M687.0 440.9L678.4 437.2M664.2 456.8L658.5 457.9M686.5 436.8L679.5 432.6M737.5 460.1L745.3 463.1M702.4 428.3L701.3 423.1M669.0 445.3L663.5 445.4M712.8 415.3L713.9 409.6M673.3 452.5L664.4 453.5M711.5 415.5L712.9 409.9M684.1 427.9L678.1 421.7M694.3 458.4L688.6 463.0M684.4 483.8L678.0 493.6M727.0 437.9L732.6 435.6M742.4 434.7L747.1 433.5M710.9 414.5L711.7 406.9M733.7 487.2L740.2 495.1M727.3 457.9L732.6 460.5M723.1 417.4L727.4 408.4M732.1 461.2L740.5 464.5M679.6 471.8L672.9 478.2M685.4 416.2L680.2 408.1M713.6 494.8L714.6 501.2M700.4 495.8L699.4 505.9M716.7 426.3L721.6 418.4M681.8 449.6L671.5 450.5M681.0 420.3L677.7 417.4M716.8 476.8L719.4 483.0M678.6 471.9L673.0 476.5M675.0 435.9L667.8 433.0M713.2 434.8L715.7 430.6M664.0 442.6L655.2 441.6M682.3 435.7L674.8 431.0M703.0 413.5L702.4 404.4M687.8 477.8L682.5 487.3M681.8 462.0L673.8 466.0M700.5 469.3L697.9 478.5M693.2 473.3L688.7 481.9M719.5 426.9L721.9 423.1M738.4 451.8L747.6 452.6M688.9 478.7L683.7 487.6M710.0 487.2L711.3 495.5M710.5 430.8L711.7 426.3M687.1 467.6L683.5 472.1M718.1 434.3L722.1 430.0M732.9 422.0L736.7 419.0M708.1 482.0L708.4 488.6M726.6 488.9L729.5 495.1M680.3 487.5L675.5 496.0M672.1 438.2L667.2 436.8M672.9 438.6L663.0 434.9M719.0 427.7L722.5 421.6M666.5 434.1L658.7 430.9M696.1 495.3L694.8 503.4M677.1 483.8L670.4 492.9M697.3 428.3L694.9 421.7M672.6 456.2L667.0 458.1M720.6 430.6L726.4 424.9M727.1 486.3L733.3 495.5M693.9 477.9L691.3 485.7" stroke="#e8203c" stroke-width="1.3" stroke-linecap="round" fill="none" opacity="1.0"/><path d="M742.2 470.2L752.4 475.0M684.4 473.3L680.1 478.2M706.9 472.4L708.6 483.8M706.0 469.7L706.6 478.5M713.4 476.4L716.1 486.7M730.0 470.4L736.7 476.0M726.6 470.2L730.6 474.7M683.0 484.0L678.7 490.8M698.8 412.5L697.0 404.9M716.2 484.4L719.0 492.8M678.6 446.2L669.3 444.9M678.6 444.1L668.8 443.1M666.5 457.3L660.2 459.1M725.1 415.1L728.8 409.5M679.9 424.5L675.2 420.8M678.2 469.2L670.6 474.4M717.4 469.3L722.1 477.8M729.4 432.1L734.3 429.4M722.7 468.4L727.7 474.1M709.2 459.8L712.3 467.6M686.9 474.2L681.4 481.9M707.6 416.5L708.8 408.3M749.0 455.0L755.1 456.2M683.9 465.5L675.9 472.0M711.6 435.3L714.9 429.8M728.7 480.0L732.7 485.6M715.0 412.1L717.6 403.4M717.3 494.0L719.8 501.5M735.0 422.0L740.5 417.7M694.9 446.7L689.8 446.2M743.7 459.7L752.9 462.8M675.7 431.0L671.2 428.4M733.4 429.2L737.7 426.6M680.6 426.5L672.9 420.1M682.2 476.0L678.4 480.8M716.0 438.8L720.2 434.8M696.5 430.2L694.5 426.0M692.4 457.8L685.5 462.2M677.2 471.2L668.7 477.4M673.3 468.0L667.5 471.4M733.1 471.3L739.0 476.1M732.8 438.8L738.3 437.3M717.5 488.1L719.7 497.2M707.3 492.1L707.2 502.4M724.3 433.2L731.4 427.4M711.8 494.1L712.5 502.0M731.9 438.7L736.9 437.1M711.2 474.9L713.9 484.5M707.4 472.2L708.1 478.5M674.6 434.4L670.2 432.9M688.5 439.1L681.8 434.8M734.1 474.9L741.3 480.6M707.5 425.7L707.9 416.2M677.3 473.3L669.4 481.3M714.3 427.9L716.5 424.3M737.3 476.0L745.1 482.7M688.5 415.8L684.9 409.2M706.8 491.0L707.8 501.0M726.7 429.9L731.7 425.0M667.6 445.5L662.0 445.4M690.7 480.2L688.5 486.5M706.4 433.5L706.7 427.7M670.1 435.3L662.6 432.2M697.7 484.7L696.0 491.6M716.5 466.1L720.4 472.3M691.3 476.5L688.4 483.0M745.5 459.6L752.3 461.1M716.1 474.9L719.8 483.5M739.8 433.6L747.1 430.4M730.7 480.5L735.8 487.7M716.5 430.5L719.2 426.1M733.3 437.4L741.1 434.9M731.8 436.4L739.1 433.2M670.7 477.3L663.8 482.3M677.5 440.7L670.7 439.1M685.7 467.8L677.9 474.7M739.9 436.3L745.0 434.6M720.2 482.1L724.8 492.1M711.4 412.0L713.0 405.6M724.0 491.7L727.4 498.8M701.4 490.3L701.0 500.8M720.8 433.4L726.1 428.5M704.0 410.7L704.0 401.6M731.0 467.3L738.2 472.7M728.7 426.6L734.1 420.9M716.9 413.6L718.5 407.8M670.9 477.1L663.0 483.5M729.5 421.2L734.0 415.6M687.3 475.1L682.6 483.2M670.6 431.7L666.0 429.8M708.2 491.2L709.5 501.0M683.2 487.7L678.7 495.1M723.9 451.1L733.2 451.7M674.1 439.8L669.0 439.0M670.8 467.2L661.6 472.6M724.3 443.2L733.1 440.4M733.6 444.4L742.1 443.3M739.1 472.5L744.7 476.5M717.7 432.5L721.0 428.6M664.7 470.1L657.5 474.3M688.8 464.6L684.9 468.8M672.9 428.5L668.5 425.6M728.8 476.2L734.1 482.9M728.8 467.6L733.4 471.6M730.1 460.0L738.2 464.5" stroke="#ff5068" stroke-width="1.3" stroke-linecap="round" fill="none" opacity="1.0"/><path d="M686.3 426.7L682.3 422.2M682.3 449.5L673.3 450.0M740.4 476.6L744.8 480.2M691.5 474.3L687.2 483.3M714.9 426.0L719.2 417.3M679.2 448.6L668.7 448.4M737.6 428.3L745.6 423.0M674.5 437.6L665.1 434.9M730.1 453.7L737.1 455.3M661.6 449.5L655.6 449.9M725.7 469.5L732.1 475.7M688.5 478.6L683.0 488.8M667.8 468.1L660.7 472.1M686.8 464.1L680.0 469.3M712.3 433.1L715.0 428.0M696.0 433.9L690.8 425.4M717.8 470.2L723.8 479.6M723.8 482.8L727.0 489.1M718.3 428.5L720.9 424.0M718.2 435.6L724.3 429.3M713.3 410.9L714.0 405.6M709.8 412.9L710.3 406.1M681.8 423.8L675.7 418.3M743.2 459.2L750.3 460.9M679.5 423.6L672.3 417.2M687.4 467.7L681.5 473.9M689.7 429.9L683.1 422.6M707.2 424.7L707.7 419.8M693.0 427.0L688.7 420.7M671.5 450.5L662.2 451.1M694.5 434.2L690.5 428.4M727.9 457.5L738.3 461.2M682.6 417.3L677.5 410.1M737.8 455.9L745.1 458.3M698.9 460.6L696.4 466.5M724.4 416.3L727.4 411.6M705.6 486.2L705.9 494.5M725.7 448.0L731.8 448.4M707.9 423.8L708.2 419.3M717.0 420.1L719.1 413.8M715.8 486.6L718.2 494.8M681.1 465.0L676.1 468.8M696.6 494.2L694.9 503.8M691.5 437.7L687.1 435.0M674.9 455.5L664.9 457.0M683.0 425.5L676.6 419.6M690.0 428.0L685.5 422.3M742.0 477.1L747.4 481.3M679.2 479.8L672.9 487.4M733.6 450.0L740.9 451.1M730.9 461.2L736.2 463.8M743.0 461.4L751.6 464.0M731.5 448.9L739.2 448.7M744.7 439.6L753.6 436.9M684.3 432.3L680.7 429.8M690.1 451.5L680.6 453.5M682.4 477.6L676.4 486.5M692.9 430.7L688.4 424.2M708.1 419.7L708.8 410.1M715.5 491.5L716.9 497.4M715.6 485.4L719.5 496.3M671.8 474.1L667.2 477.5M741.1 459.2L750.1 461.4M684.8 442.2L680.0 441.0M666.4 466.4L656.5 470.1M731.9 476.2L739.9 484.6M742.4 431.8L748.7 428.6M712.5 470.6L714.8 477.4M714.6 432.3L720.1 424.4M734.3 457.6L742.3 459.6M689.7 427.8L686.3 424.1M671.9 476.2L667.5 480.5M691.5 479.8L688.3 488.5M694.5 423.8L691.7 418.3M740.9 476.5L745.8 480.3M710.9 491.2L711.8 501.7M674.8 431.1L669.2 427.8M672.1 441.4L667.3 440.8M686.6 454.3L679.5 457.1M685.8 426.5L681.2 420.7M736.1 455.0L746.6 457.5M673.0 458.1L666.5 460.8M747.6 449.5L753.2 449.8M702.0 487.3L701.3 495.5M723.8 433.1L730.3 426.7M665.1 442.6L660.1 441.9M664.4 470.3L658.0 474.0M741.8 437.3L748.7 434.8M711.7 428.7L713.5 424.3M716.1 436.0L721.5 429.7M689.7 465.8L682.4 473.9M666.8 467.0L657.2 471.3M747.8 460.5L758.4 463.8M698.4 430.5L697.0 426.4M690.0 491.8L686.5 501.6M686.8 429.2L682.4 423.8M694.3 435.9L689.9 430.5M686.0 457.8L677.9 461.1M700.8 474.8L699.9 483.2M728.3 444.1L734.1 443.2M733.8 439.6L743.6 436.1M743.7 446.0L749.9 445.9M673.5 454.2L664.3 455.5M699.3 480.6L697.7 488.3M666.3 437.0L659.9 435.4M679.8 485.1L674.5 491.9M743.6 433.5L748.4 431.8M707.2 466.2L708.4 472.6" stroke="#ff2848" stroke-width="1.3" stroke-linecap="round" fill="none" opacity="1.0"/><circle cx="737.500" cy="451" r="16" fill="url(#gOr)" opacity=".9"/><path d="M741.4 446.6L745.6 442.1M734.7 462.1L733.7 466.5M731.2 457.8L727.3 461.4M747.3 452.2L751.5 452.9M739.1 458.4L739.6 461.5M731.9 462.5L730.7 465.6M745.0 442.6L746.8 440.2M747.1 444.4L750.0 442.7M737.2 459.0L737.0 462.9M745.5 442.4L747.7 440.2M726.6 452.2L721.6 453.0M743.1 456.9L747.5 461.6M749.1 456.3L754.2 458.6M743.6 443.1L747.0 438.7" stroke="#ff6030" stroke-width="1.0" stroke-linecap="round" fill="none" opacity="1.0"/><path d="M744.6 449.0L749.4 447.4M741.9 460.4L743.7 464.3M736.0 463.7L735.3 468.3M748.1 444.6L753.3 441.9M746.4 447.2L749.5 446.0M745.1 443.4L747.4 440.8M744.1 461.2L746.2 464.8M728.4 444.0L725.4 441.3M743.1 453.7L746.0 455.2M745.0 441.3L748.7 436.7M741.1 461.1L742.2 464.2M745.8 460.0L748.7 463.4M748.2 447.3L753.2 445.9M740.8 447.4L744.2 443.9M741.8 441.8L744.3 436.7M740.5 459.0L741.8 463.1" stroke="#ff8020" stroke-width="1.0" stroke-linecap="round" fill="none" opacity="1.0"/><path d="M743.5 451.2L749.6 451.5M743.3 454.1L748.1 456.3M744.5 455.7L747.6 458.1M740.4 457.2L742.3 461.5M742.9 455.7L747.4 459.1M747.6 448.7L751.5 447.8M742.1 448.2L744.9 446.2M738.2 456.2L738.6 461.1M735.6 460.3L734.3 466.9M734.3 441.0L732.6 435.7M746.3 459.8L750.2 463.2M735.9 460.8L735.4 464.1M740.3 462.4L741.4 467.5M730.7 451.3L724.9 451.6M740.2 460.6L741.2 463.8M749.3 455.6L752.5 457.1M747.6 449.6L753.9 448.6M744.7 447.5L748.9 445.2" stroke="#ffb040" stroke-width="1.0" stroke-linecap="round" fill="none" opacity="1.0"/><path d="M730.5 449.5L724.5 448.3M734.6 456.3L732.5 460.0M737.6 455.9L738.1 461.4M732.7 459.0L730.0 464.0M746.6 446.3L752.5 443.2M732.8 456.8L730.6 459.7M730.1 457.7L728.0 459.8M741.5 447.1L745.0 443.2M740.3 439.3L741.4 433.5M734.0 460.4L732.8 463.9M734.9 446.9L732.9 443.4M728.7 451.4L723.5 452.1M731.9 456.1L728.4 459.7M737.2 460.0L737.4 464.5M727.4 451.6L720.9 452.5M739.0 446.5L740.1 443.6M731.8 449.5L727.1 448.5M734.3 459.1L732.1 464.8M734.2 463.5L733.6 466.7M736.1 440.7L735.9 437.0M737.8 441.7L737.9 437.1M746.7 454.7L751.9 457.1" stroke="#ffd060" stroke-width="1.0" stroke-linecap="round" fill="none" opacity="1.0"/><circle cx="768.500" cy="480.500" r="50" fill="url(#gGreen)" opacity=".55"/><path d="M771.7 480.6L792.2 482.4L806.0 484.8M791.5 493.7L801.7 500.7L807.4 504.9M777.8 487.3L792.3 499.3L801.8 507.9M785.7 495.9L795.3 505.6L800.8 511.6M779.5 494.3L791.5 511.1L799.4 523.2M789.2 508.5L797.3 520.9L802.1 528.5M761.2 487.1L746.9 501.6L737.5 512.1M758.8 485.2L744.7 493.1L735.9 498.6M749.7 487.5L736.1 493.9L727.7 498.4M759.8 480.1L737.9 480.9L723.0 482.8M769.3 480.7L747.3 477.2L732.2 476.4M764.8 477.6L750.1 467.5L740.5 461.7M747.2 464.1L736.2 457.2L729.4 453.6M762.3 474.1L745.7 459.3L734.3 450.8M761.0 466.0L756.3 457.7L753.8 453.5M764.0 459.3L761.8 449.7L760.5 444.6M766.6 470.7L763.6 456.4L761.7 448.0M769.5 477.0L775.1 459.3L778.9 448.6M771.0 478.0L784.5 465.9L793.4 458.9M762.2 483.8L782.8 473.8L796.9 468.6M774.5 478.6L796.6 473.5L811.8 471.6" stroke="#3f8a60" stroke-width="0.9" stroke-linecap="round" fill="none" opacity="0.62"/><path d="M806.0 484.8L811.5 486.0M811.2 494.2L816.5 496.6M804.5 494.5L809.8 497.2M796.6 493.3L801.7 496.1M791.1 492.5L796.1 495.6M799.4 501.7L804.1 505.6M798.1 511.0L802.2 515.9M802.1 528.5L805.6 534.3M787.8 515.2L790.7 521.0M784.5 537.2L786.2 544.0M776.4 519.7L777.5 526.1M775.0 531.1L775.8 538.0M770.3 547.9L770.4 555.1M766.3 527.6L766.0 534.3M764.2 535.8L763.7 542.7M754.2 536.4L752.7 543.2M756.4 512.1L754.2 518.2M748.5 521.4L745.9 527.5M744.1 531.3L741.4 537.6M739.1 520.5L735.6 526.1M732.3 523.3L728.4 528.7M744.3 500.9L739.8 505.2M727.3 507.4L722.4 511.3M735.9 498.6L730.9 502.0M726.1 502.0L721.0 505.3M727.7 498.4L722.5 501.4M719.1 497.6L713.7 500.3M737.2 484.6L731.7 485.9M728.9 479.4L723.4 479.9M732.2 476.4L726.8 476.4M727.6 472.5L722.3 472.2M727.8 471.5L722.6 471.0M728.8 464.6L723.9 463.4M729.2 462.6L724.4 461.2M740.5 461.7L736.2 459.4M729.4 453.6L725.3 451.5M734.3 450.8L730.5 448.3M743.2 456.4L739.4 453.5M754.2 445.6L752.4 441.7M760.5 444.6L759.4 440.4M761.7 448.0L760.7 443.8M770.1 447.2L770.4 442.8M773.2 445.8L773.8 441.5M775.4 438.8L776.2 434.8M778.9 448.6L780.4 444.5M783.2 442.0L784.9 438.2M785.4 447.4L787.7 443.6M787.3 453.4L790.2 449.8M808.1 453.4L812.2 451.3M804.8 461.1L809.4 459.3M803.9 468.5L808.9 467.4M812.2 472.6L817.5 472.4M813.7 475.9L819.1 476.1M809.5 478.5L814.9 478.9M819.5 483.1L825.0 484.2M798.9 482.2L804.4 483.0" stroke="#9ae0b0" stroke-width="1.0" stroke-linecap="round" fill="none" opacity="0.62"/><path d="M772.7 480.9L791.0 483.9L803.0 486.8M771.1 481.5L786.7 488.2L796.6 493.3M774.2 485.7L788.5 500.3L798.1 511.0M773.7 491.1L784.8 515.8L792.5 534.8M772.9 493.7L778.9 513.2L782.8 526.9M774.4 499.7L780.4 521.5L784.5 537.2M766.1 509.7L764.9 525.8L764.2 535.8M765.9 488.1L758.5 511.5L753.5 528.9M771.1 477.4L759.9 491.5L752.6 501.5M762.5 487.8L748.6 506.5L739.1 520.5M767.1 481.6L753.2 492.8L744.3 500.9M765.5 482.6L754.1 491.5L747.2 497.3M752.4 489.7L737.2 499.9L727.3 507.4M765.0 476.0L755.8 465.0L750.1 458.7M759.7 465.5L753.4 455.9L749.8 450.7M766.4 474.8L759.1 456.6L754.2 445.6M768.0 474.1L766.4 455.9L765.3 444.9M771.7 465.9L774.3 455.2L775.7 449.4M773.8 477.5L786.1 471.1L793.6 467.8M788.1 479.9L807.0 481.2L819.5 483.1M775.0 480.5L789.8 481.2L798.9 482.2" stroke="#78c090" stroke-width="0.9" stroke-linecap="round" fill="none" opacity="0.62"/><path d="M803.0 486.8L808.5 488.3M812.1 491.3L817.6 493.3M807.4 504.9L812.3 508.7M801.8 507.9L806.3 512.3M800.8 511.6L805.1 516.3M801.4 518.7L805.4 524.0M799.4 523.2L802.9 528.8M795.9 524.3L799.1 530.2M792.5 534.8L795.0 541.3M778.8 504.4L781.1 510.2M782.8 526.9L784.6 533.4M773.9 535.0L774.5 542.0M761.7 530.5L760.9 537.3M759.2 521.1L757.8 527.6M753.5 528.9L751.7 535.5M745.1 520.2L742.0 526.0M752.6 501.5L749.1 506.5M737.5 512.1L733.4 517.0M747.2 497.3L742.8 501.3M743.7 496.6L738.9 500.2M705.0 500.6L699.5 503.3M728.1 489.1L722.6 490.9M708.7 487.8L703.2 489.4M723.0 482.8L717.5 483.8M724.4 467.8L719.4 467.1M732.5 461.7L727.9 460.0M750.1 458.7L746.8 455.3M747.3 452.8L744.2 449.4M749.8 450.7L747.1 447.1M753.8 453.5L751.4 449.5M745.9 436.3L743.8 433.0M757.4 448.5L755.7 444.4M765.3 444.9L764.9 440.6M767.8 457.8L767.6 453.1M775.7 449.4L776.8 445.0M783.4 455.2L786.0 451.3M792.0 448.8L795.0 445.5M793.1 453.5L796.5 450.4M797.2 453.6L800.9 450.9M793.4 458.9L797.3 456.0M789.3 466.5L793.7 464.0M793.6 467.8L798.3 465.9M796.9 468.6L801.8 467.0M811.8 471.6L817.1 471.2" stroke="#80d0a0" stroke-width="1.0" stroke-linecap="round" fill="none" opacity="0.62"/><path d="M791.4 484.9L804.4 488.6L812.1 491.3M774.2 481.8L796.1 488.3L811.2 494.2M780.7 488.1L792.4 496.3L799.4 501.7M779.2 496.2L789.4 512.8L795.9 524.3M776.2 493.4L783.4 506.7L787.8 515.2M767.8 495.1L766.9 514.3L766.3 527.6M765.6 492.1L761.7 509.4L759.2 521.1M766.9 484.5L760.5 500.9L756.4 512.1M762.8 491.2L754.2 508.9L748.5 521.4M767.3 480.6L744.1 484.7L728.1 489.1M771.4 480.4L750.9 482.2L737.2 484.6M757.1 479.3L739.9 478.9L728.9 479.4M757.8 474.6L740.6 466.7L729.2 462.6M748.7 469.0L738.4 464.2L732.5 461.7M767.5 479.0L755.5 462.6L747.3 452.8M768.6 485.2L768.1 468.1L767.8 457.8M768.6 477.5L769.5 458.6L770.1 447.2M771.4 461.4L773.8 447.2L775.4 438.8M777.2 456.3L781.0 447.0L783.2 442.0M771.7 474.7L778.9 462.3L783.4 455.2M772.9 473.6L781.7 460.8L787.3 453.4M778.8 468.2L787.7 458.8L793.1 453.5M795.1 474.4L806.1 473.1L812.2 472.6M786.1 477.4L802.9 476.0L813.7 475.9M770.2 480.2L793.4 478.2L809.5 478.5" stroke="#5aa878" stroke-width="0.9" stroke-linecap="round" fill="none" opacity="0.62"/><path d="M770.3 481.0L790.7 488.3L804.5 494.5M773.7 483.0L784.8 488.8L791.1 492.5M784.9 498.2L795.2 510.6L801.4 518.7M767.8 479.1L774.6 494.2L778.8 504.4M771.8 496.0L774.6 510.6L776.4 519.7M772.6 511.5L774.2 524.1L775.0 531.1M769.4 488.4L772.1 514.9L773.9 535.0M769.4 512.6L769.9 533.6L770.3 547.9M766.0 497.7L763.4 517.1L761.7 530.5M759.2 515.4L756.0 528.7L754.2 536.4M759.2 498.3L750.1 517.6L744.1 531.3M765.3 485.4L753.3 505.3L745.1 520.2M750.2 500.5L739.2 514.1L732.3 523.3M768.9 480.3L753.6 489.7L743.7 496.6M744.9 491.1L733.0 497.7L726.1 502.0M748.9 485.7L730.9 492.3L719.1 497.6M721.2 493.4L710.7 497.9L705.0 500.6M744.4 481.2L723.1 484.3L708.7 487.8M760.1 478.1L740.6 474.0L727.6 472.5M749.5 475.1L736.0 472.5L727.8 471.5M747.5 473.0L733.3 469.4L724.4 467.8M754.6 473.8L739.0 467.7L728.8 464.6M768.2 480.1L753.3 465.2L743.2 456.4M758.7 459.2L751.0 444.8L745.9 436.3M764.2 467.4L759.9 455.3L757.4 448.5M770.1 467.4L772.0 453.7L773.2 445.8M771.3 474.5L779.8 457.5L785.4 447.4M775.5 470.0L785.5 456.6L792.0 448.8M777.0 471.6L789.2 460.2L797.2 453.6M778.6 472.3L796.0 460.1L808.1 453.4M757.5 489.3L776.3 474.8L789.3 466.5M777.0 475.0L793.7 466.0L804.8 461.1M784.8 474.0L796.8 470.3L803.9 468.5" stroke="#4f9a70" stroke-width="0.9" stroke-linecap="round" fill="none" opacity="0.62"/><path d="M783.4 482.3L789.6 483.6L791.6 484.1M765.8 479.7L776.7 483.2L782.8 485.5M773.1 482.7L781.9 487.4L786.4 490.1M772.8 483.5L778.4 487.8L780.5 489.5M771.9 483.1L779.2 489.0L782.7 492.1M767.7 477.8L770.0 485.5L771.0 489.0M766.3 493.8L765.2 500.8L764.8 503.2M769.2 479.4L764.7 486.3L762.6 489.6M760.5 489.5L754.8 496.5L752.2 499.9M759.8 487.7L754.3 492.8L752.2 494.8M757.3 488.9L748.7 496.3L744.2 500.6M752.7 488.3L747.6 491.4L746.1 492.3M750.4 482.4L744.2 483.7L742.1 484.2M757.0 480.6L750.3 481.2L747.7 481.6M764.2 480.0L753.9 479.3L748.5 479.3M755.0 476.0L747.7 474.3L744.6 473.7M757.9 470.9L752.6 466.8L750.4 465.2M764.1 475.1L759.9 470.3L758.4 468.6M766.3 471.0L764.3 463.0L763.3 459.4M770.8 460.1L771.5 454.3L771.8 452.0M770.7 472.1L773.0 463.5L774.3 459.4M770.8 475.2L774.2 467.7L775.9 464.3M777.8 470.2L781.8 466.3L783.1 465.1M772.2 477.9L777.8 474.2L780.0 472.9M772.6 478.1L779.6 474.5L782.7 473.1M775.6 477.6L784.4 474.8L788.8 473.6M763.9 482.0L772.6 479.3L776.9 478.2M763.1 481.9L774.9 479.1L781.6 478.1" stroke="#6ab888" stroke-width="0.9" stroke-linecap="round" fill="none" opacity="0.65"/><path d="M791.6 484.1L797.1 485.6M791.1 486.8L796.5 488.9M782.8 485.5L788.1 487.9M786.4 490.1L791.4 493.3M780.5 489.5L785.1 493.4M782.7 492.1L787.1 496.2M779.6 493.5L783.4 498.4M774.3 489.0L777.6 494.0M775.2 494.6L777.7 500.3M775.2 503.0L776.9 509.3M771.0 489.0L772.6 494.8M769.3 488.7L769.9 494.7M768.7 490.4L768.8 496.5M764.8 503.2L763.8 509.7M762.5 509.4L761.2 516.1M763.6 495.0L761.7 500.9M758.1 504.9L755.7 511.1M762.6 489.6L759.5 494.8M752.2 499.9L748.4 505.1M752.2 494.8L747.9 499.2M744.2 500.6L739.6 505.2M746.1 492.3L741.1 495.6M743.1 493.0L738.0 496.3M746.1 485.9L740.7 487.8M742.1 484.2L736.6 485.7M747.7 481.6L742.2 482.4M748.5 479.3L743.0 479.6M757.9 478.0L752.6 477.1M744.6 473.7L739.5 473.0M761.9 476.1L757.4 473.4M752.6 467.7L748.6 465.0M750.4 465.2L746.5 462.6M758.4 468.6L755.0 465.2M759.4 465.6L756.7 461.7M758.9 460.1L756.8 456.3M763.3 459.4L762.1 455.2M766.7 465.8L766.0 461.2M769.6 464.9L769.9 460.3M771.8 452.0L772.4 448.2M774.3 459.4L775.6 455.3M775.9 464.3L778.0 460.2M773.7 470.8L776.1 466.5M775.5 472.4L779.0 468.8M783.1 465.1L786.7 462.0M780.0 472.9L784.5 470.5M782.7 473.1L787.4 471.1M788.8 473.6L793.8 472.6M776.9 478.2L782.1 477.1M781.6 478.1L787.0 477.5M786.0 480.1L791.5 480.6" stroke="#c0f0d0" stroke-width="1.0" stroke-linecap="round" fill="none" opacity="0.65"/><path d="M774.6 481.8L785.3 484.7L791.1 486.8M774.6 487.4L778.5 492.1L779.6 493.5M764.6 475.3L770.9 483.9L774.3 489.0M771.0 485.5L774.1 492.1L775.2 494.6M770.2 486.0L773.5 496.9L775.2 503.0M768.0 476.0L768.9 484.5L769.3 488.7M768.3 472.3L768.6 483.6L768.7 490.4M765.4 494.6L763.4 504.5L762.5 509.4M768.8 479.6L765.4 489.5L763.6 495.0M765.7 486.5L760.8 498.0L758.1 504.9M750.3 488.8L744.8 492.0L743.1 493.0M752.7 483.9L747.4 485.5L746.1 485.9M764.7 479.5L759.4 478.3L757.9 478.0M774.0 484.6L766.0 478.8L761.9 476.1M759.4 472.7L754.5 469.0L752.6 467.7M768.3 480.1L762.6 470.5L759.4 465.6M763.4 469.1L760.3 462.8L758.9 460.1M767.6 472.8L766.9 467.4L766.7 465.8M768.9 474.4L769.4 467.6L769.6 464.9M768.3 480.9L772.0 473.8L773.7 470.8M771.4 477.1L774.7 473.3L775.5 472.4M773.9 480.1L782.2 480.0L786.0 480.1" stroke="#8ad0a0" stroke-width="0.9" stroke-linecap="round" fill="none" opacity="0.65"/><path d="M733.500 480V560" stroke="#c0c8d0" stroke-width="0.800" opacity=".5"/><circle cx="769" cy="480" r="2.500" fill="#ffb0a0" opacity=".8"/><circle cx="721" cy="419" r="1.3" fill="#ffd0c0"/><circle cx="715" cy="452" r="1.2" fill="#ffe0e0"/><circle cx="747" cy="506" r="1.5" fill="#ffd8a0"/><circle cx="768" cy="515" r="1.5" fill="#fff0c0"/><circle cx="733" cy="470" r="0.8" fill="#ffc0c0"/><rect x="657" y="536" width="131" height="36" fill="#0a0a08"/><path d="M712 538h76" stroke="#5a4a4a" stroke-width="1" opacity=".7"/><path d="M712 566h76" stroke="#c0b090" stroke-width="1.200" stroke-dasharray="1 6" opacity=".7"/><rect x="657" y="571" width="131" height="202" fill="url(#gWh)"/><rect x="657" y="571" width="131" height="202" fill="url(#gWv)"/><path d="M668 684.6h17M707 767.4h19M759 721.7h25M746 648.7h11M659 694.9h11M701 608.3h25M767 578.1h8M776 760.3h22M775 738.7h18M661 741.7h26M754 701.0h10M722 590.3h22M679 708.7h21M689 763.9h27M741 762.3h17M715 656.0h9M692 588.6h11M702 750.3h29M769 684.4h29M713 713.4h12M696 684.6h28M737 582.4h15M725 656.3h32M702 768.7h31M723 761.3h21M756 612.7h19M772 723.4h22M726 710.2h9M665 664.0h11M705 766.2h10M665 659.3h22M684 618.7h23M659 755.4h25M718 688.1h17M701 576.2h20M781 639.7h15M758 739.7h27M719 670.4h28M685 597.0h6M714 670.3h31M708 756.4h19M751 594.6h19M767 606.9h7M717 611.7h32M690 601.2h27M773 639.9h6M696 620.6h28M741 594.0h29M758 765.0h7M684 668.7h9M749 621.6h21M693 599.6h8M751 755.5h18M779 762.4h11M681 623.8h22M722 690.6h26M696 677.8h23M663 760.0h19M750 601.4h17M741 738.4h31M731 687.6h31M699 731.4h9M665 754.6h30M740 756.9h31M750 693.0h21M667 617.6h25M673 662.5h21M690 625.9h29M751 695.2h27M713 659.6h17M754 644.1h29M746 632.4h12M743 575.5h26M781 638.6h25M752 636.9h28M771 601.5h17M704 627.8h20M694 677.3h8M747 697.7h24M764 651.7h6M659 599.3h20M685 676.5h20M662 574.7h31M666 747.6h23M724 673.6h28M775 699.7h24M672 753.4h27M772 636.6h27M751 763.4h16M755 676.7h8" stroke="#000" stroke-width="1.200" opacity=".35"/><path d="M712 592h76M712 609h40" stroke="#1a0808" stroke-width="2.500" opacity=".8"/><path d="M754 692h1.500M737 722h1.500M766 703h1.500M762 665h1.500M739 754h1.500M748 689h1.500M732 743h1.500M741 649h1.500M723 711h1.500M749 766h1.500M743 724h1.500M741 605h1.500M719 697h1.500M755 767h1.500M714 678h1.500M737 642h1.500M725 710h1.500M732 682h1.500M763 696h1.500M768 688h1.500M718 706h1.500M748 712h1.500M781 729h1.500M775 660h1.500M760 639h1.500M773 601h1.500M746 676h1.500M740 685h1.500M763 639h1.500M716 707h1.500M781 646h1.500M734 648h1.500M740 698h1.500M785 761h1.500M729 622h1.500M745 629h1.500M762 648h1.500M717 751h1.500M720 604h1.500M722 653h1.500" stroke="#d8c8b0" stroke-width="1" opacity=".7"/></g><g clip-path="url(#cImg)"><rect x="140" y="440" width="95" height="120" fill="#090c10" opacity=".45"/><path d="M105 560l10-12 20-6 15-20 8 30 30 6 47 4v36H105z" fill="#07090c"/><rect x="105" y="594.500" width="131" height="2" fill="#6e5a5a"/><rect x="105" y="596.500" width="131" height="1" fill="#3a2a2a"/><path d="M105 600.500h131" stroke="#4a1a20" stroke-width="1" stroke-dasharray="2 3" opacity=".8"/><circle cx="150" cy="544" r="2.200" fill="#e8f4ff"/><circle cx="150" cy="544" r="4.500" fill="#a0c0e0" opacity=".25"/><circle cx="212" cy="445" r="1.200" fill="#a0e0e0"/><circle cx="162" cy="563" r="1.200" fill="#b0e0d0"/><circle cx="150" cy="571" r="1.200" fill="#a0c0d0"/><circle cx="186" cy="564" r="1.200" fill="#40d070"/><circle cx="196" cy="565" r="1.200" fill="#60b080"/><circle cx="176" cy="545" r="1.200" fill="#7090a0"/><circle cx="218" cy="546" r="1.200" fill="#8090a0"/><circle cx="231" cy="544" r="1.200" fill="#8090a0"/><rect x="153" y="462" width="1.600" height="1.600" fill="#c87830" opacity=".85"/><rect x="158" y="470" width="1.600" height="1.600" fill="#c87830" opacity=".85"/><rect x="172" y="478" width="1.600" height="1.600" fill="#c87830" opacity=".85"/><rect x="166" y="492" width="1.600" height="1.600" fill="#c87830" opacity=".85"/><rect x="200" y="462" width="1.600" height="1.600" fill="#c87830" opacity=".85"/><rect x="205" y="470" width="1.600" height="1.600" fill="#c87830" opacity=".85"/><rect x="215" y="458" width="1.600" height="1.600" fill="#c87830" opacity=".85"/><rect x="222" y="480" width="1.600" height="1.600" fill="#c87830" opacity=".85"/><rect x="160" y="500" width="1.600" height="1.600" fill="#c87830" opacity=".85"/><rect x="178" y="470" width="1.600" height="1.600" fill="#c87830" opacity=".85"/><rect x="228" y="494" width="1.600" height="1.600" fill="#c87830" opacity=".85"/><rect x="150" y="474" width="1.600" height="1.600" fill="#c87830" opacity=".85"/><rect x="148.500" y="575" width="3" height="180" fill="#5a6a78" opacity=".1"/></g><path d="M299.500 136.500H655.500M299.500 136.500V420M655.500 136.500V420" stroke="#000" stroke-width="1" fill="none"/><path d="M299.500 136.500H655.500M299.500 136.500V420M655.500 136.500V420" stroke="#fff" stroke-width="1" stroke-dasharray="4 4" fill="none"/></svg>
<div class="a" style="left:5px;top:101px;width:58px;height:338px;background:#d6d6d6;border-top:1px solid #eee"></div>
<div class="a" style="left:5px;top:439px;width:58px;height:1px;background:#4a4a4a"></div>
<svg style="left:8px;top:91px" width="9" height="7" viewBox="0 0 9 7" ><path d="M3.5 0v7L0 3.5zM8 0v7L4.5 3.5z" fill="#e8e8e8"/></svg>
<div class="a" style="left:10px;top:105px;width:50px;height:3px;border-top:1px dotted #8e8e8e;border-bottom:1px dotted #8e8e8e"></div>
<svg style="left:0px;top:0px" width="64" height="440" viewBox="0 0 64 440" ><path d="M8 184.5H61" stroke="#9a9a9a"/><path d="M8 185.5H61" stroke="#e8e8e8"/><path d="M8 260.5H61" stroke="#9a9a9a"/><path d="M8 261.5H61" stroke="#e8e8e8"/><path d="M8 330.5H61" stroke="#9a9a9a"/><path d="M8 331.5H61" stroke="#e8e8e8"/><ellipse cx="21" cy="125" rx="7.5" ry="6.5" fill="none" stroke="#3a3a3a" stroke-width="1.3" stroke-dasharray="3 1.6"/><path d="M32 135v-3l-3 3z" fill="#111"/><path d="M39 118v10l7-5z" fill="#3a3a3a"/><path d="M51.5 121.5v9M47 126h9" stroke="#3a3a3a" stroke-width="1.2"/><path d="M51.5 120l2 2.3h-4zM51.5 132l2-2.3h-4zM45.5 126l2.3-2v4zM57.5 126l-2.3-2v4z" fill="#3a3a3a"/><path d="M13.5 142l4 12 11-6.5z M17.5 154l-2.5 2.5" fill="none" stroke="#3a3a3a" stroke-width="1.4"/><path d="M20 141h5a5 5 0 0 1 0 10h-5v-3h5a2 2 0 0 0 0-4h-5z" fill="#444"/><rect x="20" y="141" width="2.5" height="3" fill="#eee"/><rect x="20" y="148" width="2.5" height="3" fill="#eee"/><path d="M32 157v-3l-3 3z" fill="#111"/><path d="M45.5 139l1.4 4 4-1.6-2 3.6 3.6 2-4 0.8 0.6 4-3-2.8-3 2.8 0.6-4-4-0.8 3.6-2-2-3.6 4 1.6z" fill="#777" stroke="#555" stroke-width="0.5"/><circle cx="45.5" cy="145.5" r="2" fill="#eee"/><path d="M48.5 148.5l7.5 7" stroke="#222" stroke-width="2.6" stroke-linecap="round"/><path d="M58 157v-3l-3 3z" fill="#111"/><path d="M17 163v12h11M13 167h11v11" fill="none" stroke="#3a3a3a" stroke-width="2.4"/><path d="M18 174l9-10" stroke="#3a3a3a" stroke-width="0.9"/><path d="M32 180v-3l-3 3z" fill="#111"/><path d="M41 177l1-2.5 7-7 2.5 2.5-7 7z" fill="#eee" stroke="#3a3a3a" stroke-width="1"/><path d="M48 166l4.5 4.5" stroke="#222" stroke-width="2.6"/><path d="M50 168l3.2-3.2" stroke="#222" stroke-width="3.6" stroke-linecap="round"/><path d="M58 180v-3l-3 3z" fill="#111"/><ellipse cx="16" cy="197.5" rx="4.5" ry="6" fill="none" stroke="#333" stroke-width="1" stroke-dasharray="1 1.2"/><rect x="-3.2" y="-8.5" width="6.4" height="17" rx="3" transform="translate(22.5 198) rotate(48)" fill="#555" stroke="#333"/><circle cx="21" cy="199" r="0.7" fill="#ddd"/><circle cx="23" cy="197" r="0.7" fill="#ddd"/><circle cx="24" cy="199.5" r="0.7" fill="#ddd"/><path d="M32 207v-3l-3 3z" fill="#111"/><path d="M54 191l-5.5 7" stroke="#555" stroke-width="2.2"/><path d="M49 197c-2 0-4 1.5-5 3s-3 2.4-4.5 2.6c2 1.6 6 1.6 8.500-0.600s2.500-3.500 1-5z" fill="#333"/><path d="M58 207v-3l-3 3z" fill="#111"/><circle cx="20.5" cy="214.500" r="2.600" fill="#444"/><path d="M19.300 216h2.400v6h-2.400z" fill="#444"/><rect x="13.500" y="221.500" width="14" height="5" rx="1" fill="#555" stroke="#333"/><path d="M32 230v-3l-3 3z" fill="#111"/><path d="M54 214l-5 7" stroke="#555" stroke-width="2"/><path d="M49.500 220c-2 0-3.500 1.200-4.500 2.600s-2.500 2-4 2.200c2 1.500 5.500 1.500 7.800-0.500s2.200-3 0.700-4.300z" fill="#333"/><path d="M41 218.500c1.500-3 5-3.500 7.500-2" fill="none" stroke="#333" stroke-width="1.300"/><path d="M40 216.500l0.500 3.500 3-1.500z" fill="#333"/><path d="M52 226c2.500-2 2.500-5 1.500-7" fill="none" stroke="#444" stroke-width="0.900" stroke-dasharray="1 1"/><path d="M58 230v-3l-3 3z" fill="#111"/><path d="M13.500 249.500l5-9h11l-5 9z" fill="#666" stroke="#444"/><path d="M18.500 240.500l11 0-2.500-3h-10.500z" fill="#8a8a8a" stroke="#555" stroke-width="0.700" transform="translate(2.500 0)"/><path d="M32 253v-3l-3 3z" fill="#111"/><defs><linearGradient id="tg"><stop offset="0" stop-color="#333"/><stop offset="1" stop-color="#ddd"/></linearGradient></defs><rect x="39.500" y="238.500" width="15" height="11" fill="url(#tg)" stroke="#333"/><path d="M58 253v-3l-3 3z" fill="#111"/><defs><linearGradient id="dg" x2="0" y2="1"><stop offset="0" stop-color="#ddd"/><stop offset="1" stop-color="#888"/></linearGradient></defs><path d="M20.500 259.500c-2.500 4.500-5 7-5 10a5 5 0 0 0 10 0c0-3-2.500-5.500-5-10z" fill="url(#dg)" stroke="#666" stroke-width="0.800"/><path d="M32 277v-3l-3 3z" fill="#111"/><circle cx="45.500" cy="265" r="5.200" fill="#444"/><path d="M49 269l6 5.500" stroke="#222" stroke-width="1.800"/><path d="M58 277v-3l-3 3z" fill="#111"/><path d="M13.500 301.500l3-9.500 6-3.500 4.500 4.500-3.500 6z" fill="#eee" stroke="#333" stroke-width="1.100"/><path d="M13.500 301.500l6.500-6.500" stroke="#333" stroke-width="0.800"/><circle cx="20.500" cy="295" r="1.100" fill="#222"/><path d="M22 287.500l3-2.500 5 5-2.500 3z" fill="#444"/><path d="M32 304v-3l-3 3z" fill="#111"/><text x="46.500" y="300" font-family="Liberation Serif" font-size="19" text-anchor="middle" fill="#3a3a3a">T</text><path d="M58 304v-3l-3 3z" fill="#111"/><path d="M17.500 310v13l3.500-3 2.200 5 2-1-2.200-4.800 4.500-0.200z" fill="#333"/><path d="M32 328v-3l-3 3z" fill="#111"/><defs><linearGradient id="rg" x2="0" y2="1"><stop offset="0" stop-color="#888"/><stop offset="1" stop-color="#bbb"/></linearGradient></defs><rect x="40.500" y="314.500" width="14" height="11" fill="url(#rg)" stroke="#333" stroke-width="1.200"/><path d="M58 328v-3l-3 3z" fill="#111"/><path d="M15.500 345.500l-3-4c-0.800-1.500 0.800-2.300 1.800-1.300l2.200 2.300v-5.500c0-1.400 2-1.400 2 0v-1.500c0-1.400 2.200-1.400 2.200 0v1c0-1.400 2.200-1.400 2.200 0.200v1.300c0-1.300 2-1.300 2 0.200v5.300l-1.500 5h-8z" fill="#eee" stroke="#333" stroke-width="1.100"/><path d="M32 353v-3l-3 3z" fill="#111"/><circle cx="45.500" cy="341" r="5.200" fill="#d9d9d9" stroke="#444" stroke-width="1.300"/><path d="M49.500 345l5.500 5.500" stroke="#333" stroke-width="2"/><rect x="24.500" y="375.500" width="28" height="28" fill="#fff" stroke="#c8c8c8"/><rect x="13" y="364" width="26" height="26" fill="#0a0a0a" stroke="#fff" stroke-width="1.200"/><path d="M44 364.500c3 0 5 2 5 5.500" fill="none" stroke="#222" stroke-width="1.300"/><path d="M45.500 362v5l-3-2.500zM46.500 369h5l-2.500 3z" fill="#222"/><rect x="14.500" y="398.500" width="6.500" height="6.500" fill="#fff" stroke="#555" stroke-width="0.800"/><rect x="11" y="395" width="7" height="7" fill="#111"/><path d="M24 415.500h22" stroke="#8a8a8a"/></svg>
<svg style="left:20px;top:60px" width="24" height="22" viewBox="0 0 24 22" ><path d="M4.500 18.500l1-2.500 8-8 2.500 2.500-8 8z" fill="#333" stroke="#333" stroke-width="0.600"/><path d="M12 6l5.500 5.500" stroke="#222" stroke-width="2.800"/><path d="M14.500 8.500l4-4" stroke="#222" stroke-width="4" stroke-linecap="round"/></svg>
<div class="a" style="left:899px;top:288px;width:225px;height:546px;background:#d6d6d6;border:1px solid #3a3a3a;border-bottom:0"></div>
<div class="a" style="left:900px;top:289px;width:223px;height:12px;background:linear-gradient(#555,#3c3c3c)"></div>
<svg style="left:1097px;top:291px" width="9" height="8" viewBox="0 0 9 8" ><path d="M3.500 0.500v7L0 4zM8 0.500v7L4.500 4z" fill="#e4e4e4"/></svg>
<div class="a" style="left:1109px;top:291px;width:1px;height:8px;background:#777"></div>
<svg style="left:1112px;top:291px" width="9" height="8" viewBox="0 0 9 8" ><path d="M1 0.800L8 7.200M8 0.800L1 7.200" stroke="#eee" stroke-width="1.800"/></svg>
<div class="a" style="left:900px;top:301px;width:223px;height:17px;background:linear-gradient(#9c9c9c,#8a8a8a);border-bottom:1px solid #777"></div>
<div class="a" style="left:900px;top:301px;width:53px;height:17px;background:linear-gradient(#e2e2e2,#d6d6d6)"></div>
<div class="a" style="left:953px;top:301px;width:1px;height:17px;background:#6e6e6e"></div>
<div class="a" style="left:1021px;top:301px;width:1px;height:17px;background:#6e6e6e"></div>
<div class="a" style="left:1071px;top:301px;width:1px;height:17px;background:#6e6e6e"></div>
<div class="t" style="left:906px;top:304px;font-size:11px;transform:scaleX(0.92);transform-origin:0 0;font-weight:bold;color:#555">LAYERS</div>
<div class="t" style="left:959px;top:304px;font-size:11px;transform:scaleX(0.9);transform-origin:0 0;font-weight:bold;color:#5c5c5c;text-shadow:0 1px 0 #aaa">CHANNELS</div>
<div class="t" style="left:1028px;top:304px;font-size:11px;transform:scaleX(1.0);transform-origin:0 0;font-weight:bold;color:#5c5c5c;text-shadow:0 1px 0 #aaa">PATHS</div>
<svg style="left:1105px;top:305px" width="15" height="9" viewBox="0 0 15 9" ><path d="M0 2.500h5L2.500 5.500z" fill="#333"/><path d="M6 1.500h8M6 3.500h8M6 5.500h8M6 7.500h8" stroke="#333" stroke-width="1"/></svg>
<div class="a" style="left:905px;top:322px;width:115px;height:17px;background:#fff;border:1px solid #c9c7ba;box-shadow:inset 0 0 0 1px #efeee6"></div>
<div class="a" style="left:1003px;top:323px;width:16px;height:15px;background:#efeee6;border-left:1px solid #dddbd0"></div>
<svg style="left:1006px;top:327px" width="10" height="7" viewBox="0 0 10 7" ><path d="M1 1L5 5L9 1" fill="none" stroke="#c4c2b4" stroke-width="2"/></svg>
<div class="t" style="left:908px;top:325px;font-size:11px;transform:scaleX(0.95);transform-origin:0 0;color:#aaa">Normal</div>
<div class="t" style="left:1023px;top:325px;font-size:11px;transform:scaleX(0.95);transform-origin:0 0;color:#000">Opacity:</div>
<div class="a" style="left:1066px;top:321px;width:36px;height:17px;background:#dcdcd6;border:1px solid #c9c7ba;box-shadow:inset 0 0 0 1px #e8e7e0"></div>
<div class="t" style="left:1071px;top:325px;font-size:11px;transform:scaleX(0.9);transform-origin:0 0;color:#aaa">100%</div>
<div class="a" style="left:1102px;top:321px;width:16px;height:17px;background:linear-gradient(90deg,#b9cdf5,#dbe6fb)"></div>
<svg style="left:1106px;top:325px" width="7" height="9" viewBox="0 0 7 9" ><path d="M1 0.500L6 4.500L1 8.500z" fill="#4b64a8"/></svg>
<div class="a" style="left:900px;top:342px;width:223px;height:1px;background:#9d9d9d"></div>
<div class="a" style="left:900px;top:343px;width:223px;height:1px;background:#e6e6e6"></div>
<div class="t" style="left:907px;top:350px;font-size:11px;transform:scaleX(0.97);transform-origin:0 0;color:#000">Lock:</div>
<svg style="left:940px;top:348px" width="12" height="12" viewBox="0 0 12 12" ><rect x="0.500" y="0.500" width="11" height="11" fill="#fff" stroke="#777"/><path d="M1 1h3.300v3.300H1zM7.700 1H11v3.300H7.700zM4.300 4.300h3.400v3.400H4.300zM1 7.700h3.300V11H1zM7.700 7.700H11V11H7.700z" fill="#ccc"/></svg>
<svg style="left:957px;top:348px" width="14" height="13" viewBox="0 0 14 13" ><path d="M12.500 0.500L6.500 7" stroke="#555" stroke-width="1.600"/><path d="M7 6.500c-2 0-3.500 1-4 2.500s-1.500 2.200-3 2.500c2.500 1.500 6 1 7.500-1.500 0.800-1.300 0.700-2.500-0.500-3.500z" fill="#333"/></svg>
<svg style="left:976px;top:349px" width="12" height="12" viewBox="0 0 12 12" ><path d="M6 1v10M1 6h10" stroke="#222" stroke-width="1.200"/><path d="M6 0l2 2.500H4zM6 12l2-2.500H4zM0 6l2.500-2v4zM12 6l-2.500-2v4z" fill="#222"/></svg>
<svg style="left:994px;top:348px" width="10" height="12" viewBox="0 0 10 12" ><path d="M2.500 5.500V4a2.500 2.500 0 0 1 5 0v1.500" fill="none" stroke="#333" stroke-width="1.400"/><rect x="0.500" y="5.500" width="9" height="6" fill="#444" stroke="#222"/></svg>
<div class="t" style="left:1046px;top:351px;font-size:11px;transform:scaleX(0.97);transform-origin:0 0;color:#000">Fill:</div>
<div class="a" style="left:1066px;top:347px;width:36px;height:17px;background:#dcdcd6;border:1px solid #c9c7ba;box-shadow:inset 0 0 0 1px #e8e7e0"></div>
<div class="t" style="left:1071px;top:351px;font-size:11px;transform:scaleX(0.9);transform-origin:0 0;color:#aaa">100%</div>
<div class="a" style="left:1102px;top:347px;width:16px;height:17px;background:linear-gradient(90deg,#b9cdf5,#dbe6fb)"></div>
<svg style="left:1106px;top:351px" width="7" height="9" viewBox="0 0 7 9" ><path d="M1 0.500L6 4.500L1 8.500z" fill="#4b64a8"/></svg>
<div class="a" style="left:900px;top:368px;width:223px;height:1px;background:#9d9d9d"></div>
<div class="a" style="left:1106px;top:369px;width:15px;height:167px;background:#fbfbf8"></div>
<svg style="left:1106px;top:371px" width="15" height="14" viewBox="0 0 15 14" ><rect x="1" y="0.5" width="13" height="13" rx="2" fill="#e9e8e0" stroke="#e0dfd6"/><path d="M3.5 9.5L7.5 5.5L11.5 9.5" fill="none" stroke="#c5c4b8" stroke-width="2.2"/></svg>
<svg style="left:1106px;top:520px" width="15" height="14" viewBox="0 0 15 14" ><rect x="1" y="0.5" width="13" height="13" rx="2" fill="#e9e8e0" stroke="#e0dfd6"/><path d="M3.5 5.5L7.5 9.5L11.5 5.5" fill="none" stroke="#c5c4b8" stroke-width="2.2"/></svg>
<div class="a" style="left:924px;top:369px;width:1px;height:88px;background:#9d9d9d"></div>
<div class="a" style="left:925px;top:398px;width:181px;height:29px;background:#316ac5"></div>
<div class="a" style="left:900px;top:397px;width:206px;height:1px;background:#9d9d9d"></div>
<div class="a" style="left:900px;top:426px;width:206px;height:1px;background:#9d9d9d"></div>
<div class="a" style="left:900px;top:456px;width:206px;height:1px;background:#9d9d9d"></div>
<div class="a" style="left:905px;top:375px;width:16px;height:15px;border:1px solid #c2c2c2;background:#dcdcdc"></div>
<svg style="left:906px;top:378px" width="14" height="9" viewBox="0 0 14 9" ><path d="M0.500 4.500C3 0.500 11 0.500 13.500 4.500C11 8.500 3 8.500 0.500 4.500z" fill="#eee" stroke="#222" stroke-width="1"/><circle cx="7" cy="4.300" r="2.600" fill="#111"/><path d="M0.500 4.200C3 0.300 11 0.300 13.500 4.200" fill="none" stroke="#111" stroke-width="1.800"/></svg>
<div class="a" style="left:905px;top:404px;width:16px;height:15px;border:1px solid #c2c2c2;background:#dcdcdc"></div>
<svg style="left:906px;top:407px" width="14" height="9" viewBox="0 0 14 9" ><path d="M0.500 4.500C3 0.500 11 0.500 13.500 4.500C11 8.500 3 8.500 0.500 4.500z" fill="#eee" stroke="#222" stroke-width="1"/><circle cx="7" cy="4.300" r="2.600" fill="#111"/><path d="M0.500 4.200C3 0.300 11 0.300 13.500 4.200" fill="none" stroke="#111" stroke-width="1.800"/></svg>
<div class="a" style="left:905px;top:433px;width:16px;height:15px;border:1px solid #c2c2c2;background:#dcdcdc"></div>
<svg style="left:906px;top:436px" width="14" height="9" viewBox="0 0 14 9" ><path d="M0.500 4.500C3 0.500 11 0.500 13.500 4.500C11 8.500 3 8.500 0.500 4.500z" fill="#eee" stroke="#222" stroke-width="1"/><circle cx="7" cy="4.300" r="2.600" fill="#111"/><path d="M0.500 4.200C3 0.300 11 0.300 13.500 4.200" fill="none" stroke="#111" stroke-width="1.800"/></svg>
<div class="a" style="left:928px;top:372px;width:33px;height:22px;background-color:#fff;background-image:linear-gradient(45deg,#ccc 25%,transparent 25%,transparent 75%,#ccc 75%),linear-gradient(45deg,#ccc 25%,transparent 25%,transparent 75%,#ccc 75%);background-size:8px 8px;background-position:0 0,4px 4px;border:1px solid #222"></div>
<div class="a" style="left:950px;top:373px;width:10px;height:20px;background:radial-gradient(circle at 50% 45%,#4a141c,#0c0506 60%)"></div>
<div class="a" style="left:926px;top:400px;width:36px;height:25px;background:#fff;border:1px solid #fff;outline:0"></div>
<div class="a" style="left:927px;top:401px;width:34px;height:23px;background-color:#fff;background-image:linear-gradient(45deg,#ccc 25%,transparent 25%,transparent 75%,#ccc 75%),linear-gradient(45deg,#ccc 25%,transparent 25%,transparent 75%,#ccc 75%);background-size:8px 8px;background-position:0 0,4px 4px;border:2px solid #000;box-shadow:0 0 0 1px #fff"></div>
<div class="a" style="left:935px;top:403px;width:11px;height:19px;background:radial-gradient(circle at 50% 45%,#4a1622,#070304 60%)"></div>
<div class="a" style="left:928px;top:430px;width:33px;height:22px;background:linear-gradient(#050405 55%,#1a0a0a 70%,#0c1209 80%,#050405);border:1px solid #111"></div>
<div class="a" style="left:938px;top:441px;width:2px;height:8px;background:#5a1515"></div>
<div class="a" style="left:946px;top:442px;width:2px;height:7px;background:#244a28"></div>
<div class="t" style="left:968px;top:379px;font-size:11px;transform:scaleX(0.89);transform-origin:0 0;color:#000">Layer 2</div>
<div class="t" style="left:968px;top:408px;font-size:11px;transform:scaleX(0.96);transform-origin:0 0;color:#fff;font-weight:bold">Layer 1</div>
<div class="t" style="left:968px;top:437px;font-size:11px;transform:scaleX(0.96);transform-origin:0 0;color:#000;font-style:italic">Background</div>
<svg style="left:1081px;top:436px" width="10" height="11" viewBox="0 0 10 11" ><path d="M2.500 4.500V3.500a2.500 2.500 0 0 1 5 0v1" fill="none" stroke="#333" stroke-width="1.200"/><rect x="0.500" y="4.500" width="9" height="6" fill="#eee" stroke="#333"/><rect x="4" y="6.500" width="2" height="2" fill="#333"/></svg>
<div class="a" style="left:900px;top:535px;width:223px;height:1px;background:#9d9d9d"></div>
<div class="a" style="left:900px;top:536px;width:223px;height:17px;background:#d6d6d6"></div>
<svg style="left:921px;top:539px" width="18" height="8" viewBox="0 0 18 8" ><rect x="0.700" y="0.700" width="9" height="6.600" rx="3.300" fill="none" stroke="#555" stroke-width="1.400"/><rect x="8.300" y="0.700" width="9" height="6.600" rx="3.300" fill="none" stroke="#555" stroke-width="1.400"/><path d="M5 4h8" stroke="#555" stroke-width="1.600"/></svg>
<div class="t" style="left:951px;top:535px;font-size:14px;font-family:'Liberation Serif',serif;font-style:italic;font-weight:bold;color:#333">fx</div>
<svg style="left:964px;top:546px" width="4" height="3" viewBox="0 0 4 3" ><path d="M0 0h4L2 2.500z" fill="#222"/></svg>
<svg style="left:978px;top:537px" width="14" height="13" viewBox="0 0 14 13" ><rect x="0.500" y="0.500" width="13" height="12" fill="#999" stroke="#333"/><circle cx="7" cy="6.500" r="3.600" fill="#fff"/></svg>
<svg style="left:1006px;top:538px" width="16" height="12" viewBox="0 0 16 12" ><circle cx="6" cy="5.500" r="5" fill="#fff" stroke="#333"/><path d="M2.500 9A5 5 0 0 1 9.500 2z" fill="#333"/><path d="M12 9h4L14 11.500z" fill="#222"/></svg>
<svg style="left:1033px;top:539px" width="12" height="10" viewBox="0 0 12 10" ><path d="M0.500 9.500V0.500h4l1 1.500h6v7.500z" fill="#f4f4f4" stroke="#555"/></svg>
<svg style="left:1061px;top:539px" width="10" height="10" viewBox="0 0 10 10" ><path d="M0.500 9.500V0.500h6l3 3v6z" fill="#f4f4f4" stroke="#555"/><rect x="3" y="4" width="4" height="4" fill="#666"/></svg>
<svg style="left:1088px;top:537px" width="11" height="13" viewBox="0 0 11 13" ><path d="M1.500 3.500h8l-1 9h-6z" fill="#eee" stroke="#333"/><path d="M0.500 3h10M3.500 2.500v-1.500h4v1.500" stroke="#333" fill="none" stroke-width="1.300"/><path d="M4 5.500v5M5.500 5.500v5M7 5.500v5" stroke="#333" stroke-width="0.800"/></svg>
<div class="a" style="left:1110px;top:541px;width:10px;height:10px;background-image:radial-gradient(#999 0.600px,transparent 0.850px);background-size:2px 2px;clip-path:polygon(100% 0,100% 100%,0 100%)"></div>
<div class="a" style="left:899px;top:553px;width:225px;height:3px;background:#2e2e2e"></div>
<div class="a" style="left:900px;top:556px;width:223px;height:17px;background:linear-gradient(#9c9c9c,#8a8a8a);border-bottom:1px solid #777"></div>
<div class="a" style="left:900px;top:556px;width:61px;height:17px;background:linear-gradient(#e2e2e2,#d6d6d6)"></div>
<div class="a" style="left:961px;top:556px;width:1px;height:17px;background:#6e6e6e"></div>
<div class="a" style="left:1021px;top:556px;width:1px;height:17px;background:#6e6e6e"></div>
<div class="t" style="left:906px;top:559px;font-size:11px;transform:scaleX(0.98);transform-origin:0 0;font-weight:bold;color:#555">HISTORY</div>
<div class="t" style="left:968px;top:559px;font-size:11px;transform:scaleX(0.95);transform-origin:0 0;font-weight:bold;color:#5c5c5c;text-shadow:0 1px 0 #aaa">ACTIONS</div>
<svg style="left:1105px;top:560px" width="15" height="9" viewBox="0 0 15 9" ><path d="M0 2.500h5L2.500 5.500z" fill="#333"/><path d="M6 1.500h8M6 3.500h8M6 5.500h8M6 7.500h8" stroke="#333" stroke-width="1"/></svg>
<div class="a" style="left:1106px;top:573px;width:15px;height:261px;background:#fbfbf8"></div>
<svg style="left:1106px;top:575px" width="15" height="14" viewBox="0 0 15 14" ><rect x="1" y="0.5" width="13" height="13" rx="2" fill="#e9e8e0" stroke="#e0dfd6"/><path d="M3.5 9.5L7.5 5.5L11.5 9.5" fill="none" stroke="#c5c4b8" stroke-width="2.2"/></svg>
<svg style="left:1106px;top:826px" width="15" height="14" viewBox="0 0 15 14" ><rect x="1" y="0.5" width="13" height="13" rx="2" fill="#e9e8e0" stroke="#e0dfd6"/><path d="M3.5 5.5L7.5 9.5L11.5 5.5" fill="none" stroke="#c5c4b8" stroke-width="2.2"/></svg>
<div class="a" style="left:924px;top:573px;width:1px;height:261px;background:#9d9d9d"></div>
<div class="a" style="left:0;top:573px;width:1152px;height:261px;overflow:hidden"><div class="a" style="left:0;top:-573px;width:1152px;height:834px"><div class="a" style="left:900px;top:562px;width:206px;height:1px;background:#8c8c8c"></div><div class="a" style="left:905px;top:565px;width:17px;height:16px;border:1px solid #c4c4c4;border-right-color:#e6e6e6;border-bottom-color:#e6e6e6;background:#d9d9d9"></div><svg style="left:934px;top:565px" width="16" height="17" viewBox="0 0 16 17" ><path d="M0.500 3.500h12v10.500H0.500z" fill="#f2f2f2" stroke="#333"/><path d="M0.500 0.500h7v3h-7z" fill="#999" stroke="#333"/><path d="M2.500 6.500h8M2.500 8.500h8M2.500 10.500h5" stroke="#333" stroke-width="1"/><path d="M9.500 9.500v6.500l5-3.200z" fill="#111"/></svg><div class="a" style="left:900px;top:582px;width:206px;height:1px;background:#8c8c8c"></div><div class="a" style="left:905px;top:585px;width:17px;height:16px;border:1px solid #c4c4c4;border-right-color:#e6e6e6;border-bottom-color:#e6e6e6;background:#d9d9d9"></div><svg style="left:934px;top:586px" width="16" height="15" viewBox="0 0 16 15" ><rect x="0.500" y="0.500" width="14" height="13" fill="#f2f2f2" stroke="#333"/><rect x="0.500" y="0.500" width="14" height="3" fill="#999" stroke="#333"/><path d="M2.500 6.500h1.500M2.500 9.500h1.500M5.500 6.500h7M5.500 9.500h7" stroke="#333" stroke-width="1.400"/></svg><div class="t" style="left:959px;top:585px;font-size:11px;transform:scaleX(0.89);transform-origin:0 0;color:#000">Image Size</div><div class="a" style="left:900px;top:602px;width:206px;height:1px;background:#8c8c8c"></div><div class="a" style="left:905px;top:605px;width:17px;height:16px;border:1px solid #c4c4c4;border-right-color:#e6e6e6;border-bottom-color:#e6e6e6;background:#d9d9d9"></div><svg style="left:934px;top:605px" width="16" height="17" viewBox="0 0 16 17" ><path d="M0.500 3.500h12v10.500H0.500z" fill="#f2f2f2" stroke="#333"/><path d="M0.500 0.500h7v3h-7z" fill="#999" stroke="#333"/><path d="M2.500 6.500h8M2.500 8.500h8M2.500 10.500h5" stroke="#333" stroke-width="1"/><path d="M9.500 9.500v6.500l5-3.200z" fill="#111"/></svg><div class="t" style="left:959px;top:605px;font-size:11px;transform:scaleX(0.89);transform-origin:0 0;color:#000">Unsharp Mask</div><div class="a" style="left:900px;top:622px;width:206px;height:1px;background:#8c8c8c"></div><div class="a" style="left:905px;top:625px;width:17px;height:16px;border:1px solid #c4c4c4;border-right-color:#e6e6e6;border-bottom-color:#e6e6e6;background:#d9d9d9"></div><svg style="left:934px;top:626px" width="16" height="15" viewBox="0 0 16 15" ><rect x="0.500" y="0.500" width="14" height="13" fill="#f2f2f2" stroke="#333"/><rect x="0.500" y="0.500" width="14" height="3" fill="#999" stroke="#333"/><path d="M2.500 6.500h1.500M2.500 9.500h1.500M5.500 6.500h7M5.500 9.500h7" stroke="#333" stroke-width="1.400"/></svg><div class="t" style="left:959px;top:625px;font-size:11px;transform:scaleX(0.89);transform-origin:0 0;color:#000">Image Size</div><div class="a" style="left:900px;top:642px;width:206px;height:1px;background:#8c8c8c"></div><div class="a" style="left:905px;top:645px;width:17px;height:16px;border:1px solid #c4c4c4;border-right-color:#e6e6e6;border-bottom-color:#e6e6e6;background:#d9d9d9"></div><svg style="left:934px;top:645px" width="16" height="17" viewBox="0 0 16 17" ><path d="M0.500 3.500h12v10.500H0.500z" fill="#f2f2f2" stroke="#333"/><path d="M0.500 0.500h7v3h-7z" fill="#999" stroke="#333"/><path d="M2.500 6.500h8M2.500 8.500h8M2.500 10.500h5" stroke="#333" stroke-width="1"/><path d="M9.500 9.500v6.500l5-3.200z" fill="#111"/></svg><div class="t" style="left:959px;top:645px;font-size:11px;transform:scaleX(0.89);transform-origin:0 0;color:#000">Paste</div><div class="a" style="left:900px;top:662px;width:206px;height:1px;background:#8c8c8c"></div><div class="a" style="left:905px;top:665px;width:17px;height:16px;border:1px solid #c4c4c4;border-right-color:#e6e6e6;border-bottom-color:#e6e6e6;background:#d9d9d9"></div><svg style="left:933px;top:664px" width="19" height="18" viewBox="0 0 19 18" ><path d="M0.500 0.500v10l6.500-5z" fill="#444"/><path d="M11.500 5.500v9M7 10h9" stroke="#333" stroke-width="1.100"/><path d="M11.500 4l2 2.300h-4zM11.500 16l2-2.300h-4zM5.500 10l2.300-2v4zM17.500 10l-2.300-2v4z" fill="#333"/></svg><div class="t" style="left:959px;top:665px;font-size:11px;transform:scaleX(0.89);transform-origin:0 0;color:#000">Move</div><div class="a" style="left:900px;top:682px;width:206px;height:1px;background:#8c8c8c"></div><div class="a" style="left:905px;top:685px;width:17px;height:16px;border:1px solid #c4c4c4;border-right-color:#e6e6e6;border-bottom-color:#e6e6e6;background:#d9d9d9"></div><svg style="left:934px;top:685px" width="16" height="17" viewBox="0 0 16 17" ><path d="M0.500 3.500h12v10.500H0.500z" fill="#f2f2f2" stroke="#333"/><path d="M0.500 0.500h7v3h-7z" fill="#999" stroke="#333"/><path d="M2.500 6.500h8M2.500 8.500h8M2.500 10.500h5" stroke="#333" stroke-width="1"/><path d="M9.500 9.500v6.500l5-3.200z" fill="#111"/></svg><div class="t" style="left:959px;top:685px;font-size:11px;transform:scaleX(0.89);transform-origin:0 0;color:#000">Load Selection</div><div class="a" style="left:900px;top:702px;width:206px;height:1px;background:#8c8c8c"></div><div class="a" style="left:905px;top:705px;width:17px;height:16px;border:1px solid #c4c4c4;border-right-color:#e6e6e6;border-bottom-color:#e6e6e6;background:#d9d9d9"></div><svg style="left:934px;top:705px" width="16" height="17" viewBox="0 0 16 17" ><path d="M0.500 3.500h12v10.500H0.500z" fill="#f2f2f2" stroke="#333"/><path d="M0.500 0.500h7v3h-7z" fill="#999" stroke="#333"/><path d="M2.500 6.500h8M2.500 8.500h8M2.500 10.500h5" stroke="#333" stroke-width="1"/><path d="M9.500 9.500v6.500l5-3.200z" fill="#111"/></svg><div class="t" style="left:959px;top:705px;font-size:11px;transform:scaleX(0.89);transform-origin:0 0;color:#000">Paste</div><div class="a" style="left:900px;top:722px;width:206px;height:1px;background:#8c8c8c"></div><div class="a" style="left:905px;top:725px;width:17px;height:16px;border:1px solid #c4c4c4;border-right-color:#e6e6e6;border-bottom-color:#e6e6e6;background:#d9d9d9"></div><svg style="left:933px;top:724px" width="19" height="18" viewBox="0 0 19 18" ><path d="M0.500 0.500v10l6.500-5z" fill="#444"/><path d="M11.500 5.500v9M7 10h9" stroke="#333" stroke-width="1.100"/><path d="M11.500 4l2 2.300h-4zM11.500 16l2-2.300h-4zM5.500 10l2.300-2v4zM17.500 10l-2.300-2v4z" fill="#333"/></svg><div class="t" style="left:959px;top:725px;font-size:11px;transform:scaleX(0.89);transform-origin:0 0;color:#000">Move</div><div class="a" style="left:900px;top:742px;width:206px;height:1px;background:#8c8c8c"></div><div class="a" style="left:905px;top:745px;width:17px;height:16px;border:1px solid #c4c4c4;border-right-color:#e6e6e6;border-bottom-color:#e6e6e6;background:#d9d9d9"></div><svg style="left:933px;top:744px" width="19" height="18" viewBox="0 0 19 18" ><path d="M0.500 0.500v10l6.500-5z" fill="#444"/><path d="M11.500 5.500v9M7 10h9" stroke="#333" stroke-width="1.100"/><path d="M11.500 4l2 2.300h-4zM11.500 16l2-2.300h-4zM5.500 10l2.300-2v4zM17.500 10l-2.300-2v4z" fill="#333"/></svg><div class="t" style="left:959px;top:745px;font-size:11px;transform:scaleX(0.89);transform-origin:0 0;color:#000">Move</div><div class="a" style="left:900px;top:762px;width:206px;height:1px;background:#8c8c8c"></div><div class="a" style="left:905px;top:765px;width:17px;height:16px;border:1px solid #c4c4c4;border-right-color:#e6e6e6;border-bottom-color:#e6e6e6;background:#d9d9d9"></div><svg style="left:934px;top:765px" width="16" height="17" viewBox="0 0 16 17" ><path d="M0.500 3.500h12v10.500H0.500z" fill="#f2f2f2" stroke="#333"/><path d="M0.500 0.500h7v3h-7z" fill="#999" stroke="#333"/><path d="M2.500 6.500h8M2.500 8.500h8M2.500 10.500h5" stroke="#333" stroke-width="1"/><path d="M9.500 9.500v6.500l5-3.200z" fill="#111"/></svg><div class="t" style="left:959px;top:765px;font-size:11px;transform:scaleX(0.89);transform-origin:0 0;color:#000">Load Selection</div><div class="a" style="left:900px;top:782px;width:206px;height:1px;background:#8c8c8c"></div><div class="a" style="left:905px;top:785px;width:17px;height:16px;border:1px solid #c4c4c4;border-right-color:#e6e6e6;border-bottom-color:#e6e6e6;background:#d9d9d9"></div><svg style="left:934px;top:785px" width="16" height="17" viewBox="0 0 16 17" ><path d="M0.500 3.500h12v10.500H0.500z" fill="#f2f2f2" stroke="#333"/><path d="M0.500 0.500h7v3h-7z" fill="#999" stroke="#333"/><path d="M2.500 6.500h8M2.500 8.500h8M2.500 10.500h5" stroke="#333" stroke-width="1"/><path d="M9.500 9.500v6.500l5-3.200z" fill="#111"/></svg><div class="t" style="left:959px;top:785px;font-size:11px;transform:scaleX(0.89);transform-origin:0 0;color:#000">Load Selection</div><div class="a" style="left:900px;top:802px;width:206px;height:1px;background:#8c8c8c"></div><div class="a" style="left:905px;top:805px;width:17px;height:16px;border:1px solid #c4c4c4;border-right-color:#e6e6e6;border-bottom-color:#e6e6e6;background:#d9d9d9"></div><svg style="left:934px;top:805px" width="16" height="17" viewBox="0 0 16 17" ><path d="M0.500 3.500h12v10.500H0.500z" fill="#f2f2f2" stroke="#333"/><path d="M0.500 0.500h7v3h-7z" fill="#999" stroke="#333"/><path d="M2.500 6.500h8M2.500 8.500h8M2.500 10.500h5" stroke="#333" stroke-width="1"/><path d="M9.500 9.500v6.500l5-3.200z" fill="#111"/></svg><div class="t" style="left:959px;top:805px;font-size:11px;transform:scaleX(0.89);transform-origin:0 0;color:#000">Curves</div><div class="a" style="left:925px;top:823px;width:181px;height:11px;background:#316ac5"></div><div class="a" style="left:900px;top:822px;width:206px;height:1px;background:#8c8c8c"></div><div class="a" style="left:905px;top:825px;width:17px;height:16px;border:1px solid #c4c4c4;border-right-color:#e6e6e6;border-bottom-color:#e6e6e6;background:#d9d9d9"></div><svg style="left:934px;top:825px" width="16" height="17" viewBox="0 0 16 17" ><path d="M0.500 3.500h12v10.500H0.500z" fill="#f2f2f2" stroke="#333"/><path d="M0.500 0.500h7v3h-7z" fill="#999" stroke="#333"/><path d="M2.500 6.500h8M2.500 8.500h8M2.500 10.500h5" stroke="#333" stroke-width="1"/><path d="M9.500 9.500v6.500l5-3.200z" fill="#111"/></svg><div class="t" style="left:959px;top:825px;font-size:11px;transform:scaleX(0.89);transform-origin:0 0;color:#fff;font-weight:bold;transform:scaleX(0.93)">Load Selection</div></div></div>
<svg style="left:921px;top:824px" width="9" height="10" viewBox="0 0 9 10" ><path d="M0.500 0.500h4l4 4.500-4 4.500h-4z" fill="#eee" stroke="#222"/></svg>
<div class="a" style="left:236px;top:411px;width:476px;height:430px;background:#0831d9;border-radius:8px 8px 0 0"></div>
<div class="a" style="left:236px;top:411px;width:476px;height:29px;border-radius:8px 8px 0 0;background:linear-gradient(#0a5be6 0%,#3a8cf8 8%,#0a64e8 22%,#0458dc 55%,#0553d6 80%,#0a5be0 92%,#0340b8 100%)"></div>
<div class="a" style="left:239px;top:440px;width:470px;height:400px;background:#ebebeb"></div>
<div class="t" style="left:241px;top:421px;font-size:13px;color:#fff;font-weight:bold;letter-spacing:-0.4px;text-shadow:1px 1px 1px #0a2a80">Curves</div>
<div class="a" style="left:686px;top:417px;width:21px;height:20px;border-radius:3px;border:1px solid #fff;background:linear-gradient(135deg,#e8957a,#d9502a 40%,#c63c14 75%,#b83410)"></div>
<svg style="left:691px;top:421px" width="11" height="12" viewBox="0 0 11 12" ><path d="M0.800 1L10.200 11M10.200 1L0.800 11" stroke="#fff" stroke-width="2"/></svg>
<div class="t" style="left:247px;top:454px;font-size:12px;color:#000;">P<u>r</u>eset:</div>
<div class="a" style="left:293px;top:450px;width:290px;height:22px;background:#fff;border:1px solid #7f9db9"></div>
<div class="t" style="left:298px;top:455px;font-size:12px;">Custom</div>
<div class="a" style="left:565px;top:452px;width:16px;height:18px;background:linear-gradient(#cfdcfb,#b4c8f6);border-radius:2px;border:1px solid #b7c8f2"></div>
<svg style="left:568px;top:458px" width="10" height="7" viewBox="0 0 10 7" ><path d="M1 1L5 5L9 1" fill="none" stroke="#4d6185" stroke-width="2"/></svg>
<svg style="left:594px;top:455px" width="13" height="10" viewBox="0 0 13 10" ><path d="M0.500 1.500h2M0.500 4.500h2M0.500 7.500h2M3.500 1.500h6M3.500 4.500h6M3.500 7.500h4" stroke="#333" stroke-width="1.300"/><path d="M8.500 7h4L10.500 9.500z" fill="#333"/></svg>
<div class="a" style="left:625px;top:451px;width:73px;height:18px;background:linear-gradient(#fff,#f0efe8 80%,#d8d4c8);border:1px solid #003c74;border-radius:3px;box-shadow:inset 0 0 0 2px #a9c4f4,inset 0 -3px 0 0 #8fb0ee"></div>
<div class="t" style="left:625px;top:455px;width:73px;text-align:center;font-size:12px;color:#000">OK</div>
<div class="a" style="left:625px;top:479px;width:73px;height:18px;background:linear-gradient(#fff,#f0efe8 80%,#d8d4c8);border:1px solid #003c74;border-radius:3px"></div>
<div class="t" style="left:625px;top:483px;width:73px;text-align:center;font-size:12px;color:#000">Cancel</div>
<div class="a" style="left:625px;top:514px;width:73px;height:18px;background:#f1f0ea;border:1px solid #c9c7ba;border-radius:3px"></div>
<div class="t" style="left:625px;top:518px;width:73px;text-align:center;font-size:12px;color:#a7a69a">S<u>m</u>ooth</div>
<div class="a" style="left:625px;top:549px;width:73px;height:18px;background:linear-gradient(#fff,#f0efe8 80%,#d8d4c8);border:1px solid #003c74;border-radius:3px"></div>
<div class="t" style="left:625px;top:553px;width:73px;text-align:center;font-size:12px;color:#000"><u>A</u>uto</div>
<div class="a" style="left:625px;top:577px;width:73px;height:18px;background:linear-gradient(#fff,#f0efe8 80%,#d8d4c8);border:1px solid #003c74;border-radius:3px"></div>
<div class="t" style="left:625px;top:581px;width:73px;text-align:center;font-size:12px;color:#000">Op<u>t</u>ions...</div>
<div class="a" style="left:624px;top:610px;width:13px;height:13px;background:#fff;border:1px solid #1c5180"></div>
<svg style="left:626px;top:612px" width="9" height="9" viewBox="0 0 9 9" ><path d="M1 4L3.500 6.500L8 1.500" fill="none" stroke="#21a121" stroke-width="2"/></svg>
<div class="t" style="left:640px;top:611px;font-size:12px;color:#000;"><u>P</u>review</div>
<div class="a" style="left:249px;top:486px;width:337px;height:360px;border:1px solid #b9b9b9;border-bottom:0;box-shadow:inset 1px 1px 0 #fff"></div>
<div class="a" style="left:258px;top:480px;width:166px;height:14px;background:#ebebeb"></div>
<div class="t" style="left:263px;top:484px;font-size:12px;color:#000;letter-spacing:-0.15px"><u>C</u>hannel:</div>
<div class="a" style="left:315px;top:478px;width:106px;height:22px;background:#fff;border:1px solid #7f9db9"></div>
<div class="t" style="left:320px;top:484px;font-size:12px;">RGB</div>
<div class="a" style="left:403px;top:480px;width:16px;height:18px;background:linear-gradient(#cfdcfb,#b4c8f6);border-radius:2px;border:1px solid #b7c8f2"></div>
<svg style="left:406px;top:486px" width="10" height="7" viewBox="0 0 10 7" ><path d="M1 1L5 5L9 1" fill="none" stroke="#4d6185" stroke-width="2"/></svg>
<div class="a" style="left:258px;top:508px;width:24px;height:21px;background:#f4f4f4;border:1px solid #7f9db9;border-radius:3px"></div>
<svg style="left:261px;top:511px" width="18" height="15" viewBox="0 0 18 15" ><path d="M2 13C3 4 6 2 8.500 6.500S13 11 16 1.500" fill="none" stroke="#222" stroke-width="1.400"/><circle cx="2" cy="13" r="1.200" fill="#222"/><circle cx="16" cy="1.500" r="1.200" fill="#222"/></svg>
<svg style="left:286px;top:510px" width="16" height="17" viewBox="0 0 16 17" ><path d="M1 15.500l1.500-4.500 9-9 3 3-9 9z" fill="#555" stroke="#333" stroke-width="0.800"/><path d="M1 15.500l1.500-4.500 3 3z" fill="#ddd" stroke="#555" stroke-width="0.600"/><path d="M10 3.500l3 3" stroke="#222" stroke-width="2.500"/></svg>
<div class="a" style="left:306px;top:509px;width:12px;height:253px;background:linear-gradient(#fff,#000)"></div>
<svg style="left:0px;top:0px" width="1152" height="834" viewBox="0 0 1152 834" ><rect x="319.500" y="509.500" width="252" height="252" fill="#fff" stroke="#000"/><path d="M324 761 L326 640 L326.5 510 L348 510 L350 573 L353 635 L358.5 680 L362 698 L367 710 L372 718 L378 728 L385 737 L393 743 L402 747.5 L412 750.5 L430 754 L450 756.5 L480 758.5 L520 760 L571 761Z" fill="#dcdcdc"/><path d="M383.5 510V761M320 573.5H571" stroke="#b8b8b8" stroke-width="1"/><path d="M445.5 510V761M320 635.5H571" stroke="#b8b8b8" stroke-width="1"/><path d="M507.5 510V761M320 698H571" stroke="#b8b8b8" stroke-width="1"/><path d="M321.500 758.500L569.500 511.500" stroke="#000" stroke-width="1.200" fill="none"/><path d="M320.500 760.500 L333.6 760.5 L339.0 753.0 L349.6 741.0 L362.1 728.2 L373.5 714.8 L382.1 706.2 L402.0 685.2 L407.7 679.5 L426.4 659.5 L449.2 635.2 L483.0 599.9 L517.0 564.7 L537.5 543.5 L559.3 520.5 L568.0 511.5" stroke="#1030e0" stroke-width="1.100" fill="none"/><path d="M335.9 756.5L343.3 747.5 M352.4 737.5L367.2 721.5 M384.0 703.5L393.5 693.5 M422.1 663.5L433.3 651.5 M466.5 616.5L475.1 607.5 M508.9 572.5L515.6 565.5 M532.1 548.5L539.8 540.5" stroke="#10a030" stroke-width="1.100" fill="none"/><rect x="319.500" y="756.500" width="4" height="4" fill="#fff" stroke="#000"/><rect x="567.500" y="509.500" width="4" height="4" fill="#fff" stroke="#000"/><rect x="569" y="511" width="1" height="1" fill="#000"/></svg>
<div class="a" style="left:319px;top:763px;width:253px;height:11px;background:linear-gradient(90deg,#000,#fff)"></div>
<svg style="left:313px;top:775px" width="12" height="8" viewBox="0 0 12 8" ><path d="M6 0.500L10.500 5v2.500h-9V5z" fill="#000"/></svg>
<svg style="left:566px;top:775px" width="12" height="8" viewBox="0 0 12 8" ><path d="M6 0.500L10.500 5v2.500h-9V5z" fill="#fff" stroke="#555" stroke-width="0.900"/></svg>
<div class="t" style="left:257px;top:727px;font-size:12px;color:#000;"><u>O</u>utput:</div>
<div class="t" style="left:319px;top:785px;font-size:12px;color:#000;"><u>I</u>nput:</div>
<svg style="left:260px;top:801px" width="19" height="19" viewBox="0 0 19 19" ><path d="M3 1v9M0.500 3.500L3 0.500l2.500 3M0.500 7.500L3 10.500l2.500-3" fill="none" stroke="#111" stroke-width="1.300"/><path d="M8 12V5.500c0-1.500 2-1.500 2 0V10v-1.500c0-1.300 2-1.300 2 0V10.500v-1c0-1.300 2-1.300 2 0V11.500v-0.500c0-1.200 1.800-1.200 1.800 0v4l-1.300 3.500h-6L6 14.500c-1-1.500 0.500-2.500 1.500-1.500z" fill="#fff" stroke="#111" stroke-width="1"/></svg>
<div class="a" style="left:382px;top:800px;width:26px;height:21px;background:#f6f6f6;border:1px solid #7f9db9;border-radius:3px"></div>
<svg style="left:388px;top:802px" width="16" height="18" viewBox="0 0 16 18" ><path d="M1.500 16.500l1-3 7-7 2.500 2.500-7 7z" fill="#111" stroke="#222" stroke-width="0.900"/><path d="M8.500 5l4 4" stroke="#111" stroke-width="2.600"/><path d="M11 6.500l2.800-2.800" stroke="#111" stroke-width="3.600" stroke-linecap="round"/></svg>
<svg style="left:415px;top:802px" width="16" height="18" viewBox="0 0 16 18" ><path d="M1.500 16.500l1-3 7-7 2.500 2.500-7 7z" fill="#888" stroke="#222" stroke-width="0.900"/><path d="M8.500 5l4 4" stroke="#111" stroke-width="2.600"/><path d="M11 6.500l2.800-2.800" stroke="#111" stroke-width="3.600" stroke-linecap="round"/></svg>
<svg style="left:440px;top:802px" width="16" height="18" viewBox="0 0 16 18" ><path d="M1.500 16.500l1-3 7-7 2.500 2.500-7 7z" fill="#fff" stroke="#222" stroke-width="0.900"/><path d="M8.500 5l4 4" stroke="#111" stroke-width="2.600"/><path d="M11 6.500l2.800-2.800" stroke="#111" stroke-width="3.600" stroke-linecap="round"/></svg>
<div class="a" style="left:484px;top:803px;width:13px;height:13px;background:#fff;border:1px solid #1c5180"></div>
<div class="t" style="left:499px;top:804px;font-size:12px;color:#000">Sho<u>w</u> Clipping</div>
<svg style="left:0px;top:0px" width="1152" height="834" viewBox="0 0 1152 834" ><ellipse cx="618.700" cy="177.600" rx="33.300" ry="29.200" fill="none" stroke="#f50a0a" stroke-width="4.800"/><ellipse cx="944.500" cy="413.500" rx="26.500" ry="27.500" fill="none" stroke="#f00006" stroke-width="4.800"/><ellipse cx="395.200" cy="809" rx="21.800" ry="21.800" fill="none" stroke="#f00006" stroke-width="5"/></svg>
</div>
</body></html>
